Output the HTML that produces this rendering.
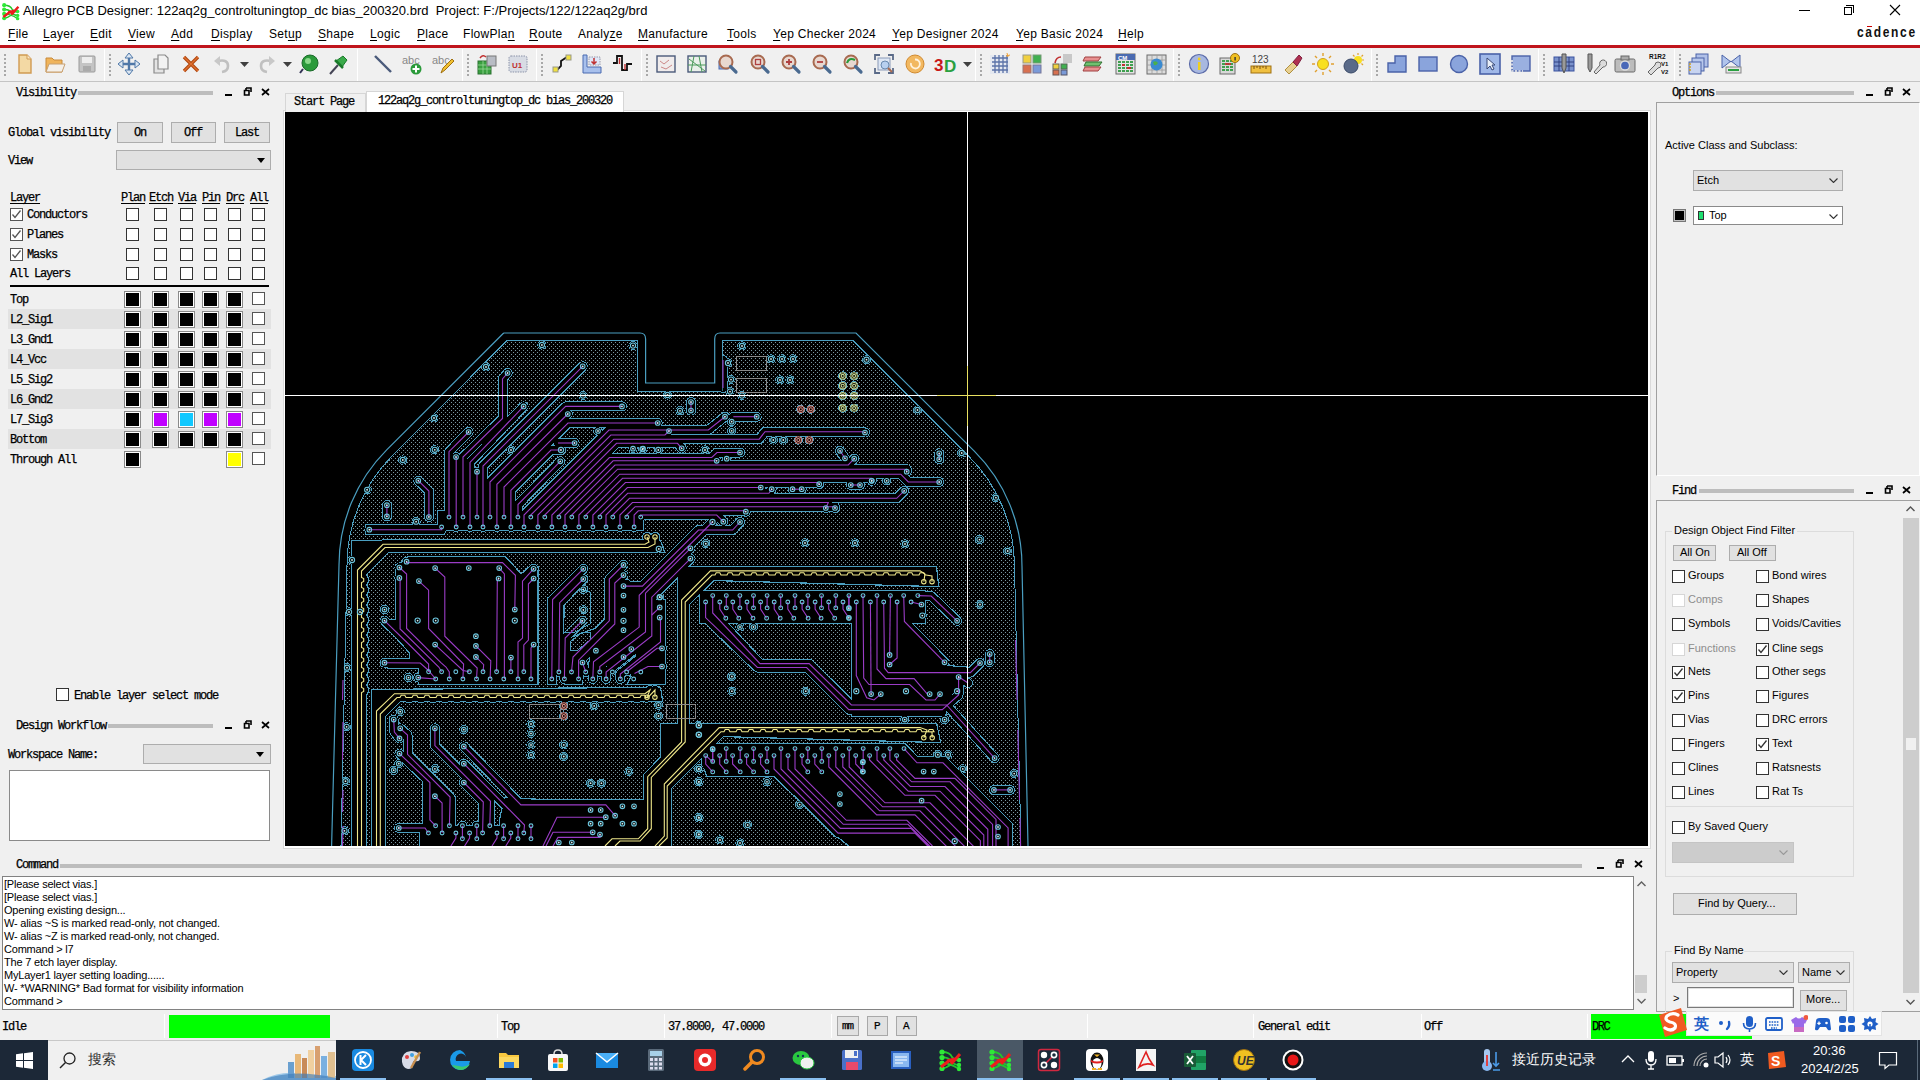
<!DOCTYPE html>
<html><head><meta charset="utf-8">
<style>
*{margin:0;padding:0;box-sizing:border-box}
html,body{width:1920px;height:1080px;overflow:hidden;background:#f0f0f0;font-family:"Liberation Sans",sans-serif;color:#000}
.a{position:absolute}
.t{position:absolute;white-space:nowrap;line-height:1}
.m{font-family:"Liberation Mono",monospace;font-weight:normal;-webkit-text-stroke:0.25px #000;font-size:12px;letter-spacing:-1.2px;padding-top:2px}
.bar{position:absolute;background:#bdbdbd;height:4px}
.cb{position:absolute;width:13px;height:13px;border:1px solid #333;background:#fff}
.sw{position:absolute;width:17px;height:17px;border:1px solid #8a8a8a;background:#000;box-shadow:inset 0 0 0 1px #fff}
.btn{position:absolute;background:#e1e1e1;border:1px solid #adadad}
.ic{position:absolute;width:24px;height:24px;top:52px}
.grip{position:absolute;top:54px;width:2px;height:24px;background-image:linear-gradient(#a8a8a8 50%,transparent 50%);background-size:2px 4px}
.tsep{position:absolute;top:49px;width:1px;height:32px;background:#c8c8c8;border-right:1px solid #fff}
u{text-decoration:underline;text-underline-offset:2px;text-decoration-thickness:1px}
</style></head><body>
<!-- title bar -->
<div class="a" style="left:0;top:0;width:1920px;height:45px;background:#fff"></div>
<svg class="a" style="left:1px;top:2px" width="19" height="19" viewBox="0 0 24 24"><path d="M4 4 Q12 4 14 9 Q16 13 21 12 M4 9.5 Q10 9 13 13 Q16 17 21 17 M4 15 Q12 15 21 21 M4 20.5 Q12 20 21 7" stroke="#22c82a" stroke-width="1.8" fill="none"/><circle cx="4" cy="4" r="2.6" fill="#2ee838"/><circle cx="4" cy="9.5" r="2.6" fill="#2ee838"/><circle cx="4" cy="15" r="2.6" fill="#2ee838"/><circle cx="4" cy="20.5" r="2.6" fill="#2ee838"/><circle cx="21" cy="12" r="2.2" fill="#2ee838"/><circle cx="21" cy="17" r="2.2" fill="#2ee838"/><circle cx="21" cy="21" r="2.2" fill="#2ee838"/><path d="M3 19 L12 12 L14 15 L22 6 M9 13 L17 11" stroke="#ee1c1c" stroke-width="3" fill="none" stroke-linejoin="round"/></svg>
<div class="t" style="left:23px;top:4px;font-size:13px;color:#000">Allegro PCB Designer: 122aq2g_controltuningtop_dc bias_200320.brd&nbsp; Project: F:/Projects/122/122aq2g/brd</div>
<div class="a" style="left:1799px;top:10px;width:11px;height:1px;background:#000"></div>
<div class="a" style="left:1844px;top:7px;width:8px;height:8px;border:1px solid #000"></div>
<div class="a" style="left:1846px;top:5px;width:8px;height:8px;border-top:1px solid #000;border-right:1px solid #000"></div>
<svg class="a" style="left:1889px;top:4px" width="12" height="12" viewBox="0 0 12 12"><path d="M1 1 L11 11 M11 1 L1 11" stroke="#000" stroke-width="1.1"/></svg>
<div class="t" style="left:1857px;top:24px;font-size:15px;font-weight:bold;letter-spacing:2.1px;color:#111;font-family:'Liberation Sans',sans-serif;transform:scaleX(0.8);transform-origin:left">cadence</div>
<div class="a" style="left:1867px;top:26px;width:5px;height:1px;background:#c00"></div>
<!-- menu -->
<div class="t" style="left:8px;top:28px;font-size:12px;letter-spacing:0.3px"><u>F</u>ile</div>
<div class="t" style="left:43px;top:28px;font-size:12px;letter-spacing:0.3px"><u>L</u>ayer</div>
<div class="t" style="left:90px;top:28px;font-size:12px;letter-spacing:0.3px"><u>E</u>dit</div>
<div class="t" style="left:128px;top:28px;font-size:12px;letter-spacing:0.3px"><u>V</u>iew</div>
<div class="t" style="left:171px;top:28px;font-size:12px;letter-spacing:0.3px"><u>A</u>dd</div>
<div class="t" style="left:211px;top:28px;font-size:12px;letter-spacing:0.3px"><u>D</u>isplay</div>
<div class="t" style="left:269px;top:28px;font-size:12px;letter-spacing:0.3px">Set<u>u</u>p</div>
<div class="t" style="left:318px;top:28px;font-size:12px;letter-spacing:0.3px"><u>S</u>hape</div>
<div class="t" style="left:370px;top:28px;font-size:12px;letter-spacing:0.3px"><u>L</u>ogic</div>
<div class="t" style="left:417px;top:28px;font-size:12px;letter-spacing:0.3px"><u>P</u>lace</div>
<div class="t" style="left:463px;top:28px;font-size:12px;letter-spacing:0.3px">FlowPla<u>n</u></div>
<div class="t" style="left:529px;top:28px;font-size:12px;letter-spacing:0.3px"><u>R</u>oute</div>
<div class="t" style="left:578px;top:28px;font-size:12px;letter-spacing:0.3px">Analy<u>z</u>e</div>
<div class="t" style="left:638px;top:28px;font-size:12px;letter-spacing:0.3px"><u>M</u>anufacture</div>
<div class="t" style="left:727px;top:28px;font-size:12px;letter-spacing:0.3px"><u>T</u>ools</div>
<div class="t" style="left:773px;top:28px;font-size:12px;letter-spacing:0.3px"><u>Y</u>ep Checker 2024</div>
<div class="t" style="left:892px;top:28px;font-size:12px;letter-spacing:0.3px"><u>Y</u>ep Designer 2024</div>
<div class="t" style="left:1016px;top:28px;font-size:12px;letter-spacing:0.3px"><u>Y</u>ep Basic 2024</div>
<div class="t" style="left:1118px;top:28px;font-size:12px;letter-spacing:0.3px"><u>H</u>elp</div>
<!-- red line -->
<div class="a" style="left:0;top:45px;width:1920px;height:3px;background:#c0141c"></div>
<!-- toolbar bg -->
<div class="a" style="left:0;top:48px;width:1920px;height:34px;background:#f0f0f0;border-bottom:1px solid #c4c4c4"></div>
<!-- toolbar -->
<div class="tsep" style="left:104px"></div>
<div class="tsep" style="left:357px"></div>
<div class="tsep" style="left:462px"></div>
<div class="tsep" style="left:536px"></div>
<div class="tsep" style="left:641px"></div>
<div class="tsep" style="left:975px"></div>
<div class="tsep" style="left:1173px"></div>
<div class="tsep" style="left:1371px"></div>
<div class="tsep" style="left:1538px"></div>
<div class="tsep" style="left:1674px"></div>
<div class="grip" style="left:4px"></div>
<div class="grip" style="left:109px"></div>
<div class="grip" style="left:467px"></div>
<div class="grip" style="left:541px"></div>
<div class="grip" style="left:646px"></div>
<div class="grip" style="left:980px"></div>
<div class="grip" style="left:1178px"></div>
<div class="grip" style="left:1376px"></div>
<div class="grip" style="left:1543px"></div>
<div class="grip" style="left:1679px"></div>
<svg class="a" style="left:12px;top:52px" width="24" height="24" viewBox="0 0 24 24"><path d="M7 3 H15 L19 7 V21 H7 Z" fill="#f3d9a4" stroke="#d09a52" stroke-width="1.4"/><path d="M15 3 V7 H19" fill="#fbe8c4" stroke="#d09a52" stroke-width="1"/></svg>
<svg class="a" style="left:43px;top:52px" width="24" height="24" viewBox="0 0 24 24"><path d="M3 6 H9 L11 8 H19 V20 H3 Z" fill="#f0b45a" stroke="#c88a3a"/><path d="M6 12 H22 L19 20 H3 Z" fill="#f4f0ea" stroke="#c8a070"/></svg>
<svg class="a" style="left:75px;top:52px" width="24" height="24" viewBox="0 0 24 24"><rect x="4" y="4" width="16" height="16" rx="1" fill="#c4c4c4" stroke="#9a9a9a"/><rect x="7" y="5" width="10" height="6" fill="#eee"/><rect x="8" y="14" width="8" height="5" fill="#aaa"/></svg>
<svg class="a" style="left:117px;top:52px" width="24" height="24" viewBox="0 0 24 24"><path d="M12 2 V22 M2 12 H22" stroke="#5078a8" stroke-width="2.4"/><path d="M12 1 L8 6 H16 Z M12 23 L8 18 H16 Z M1 12 L6 8 V16 Z M23 12 L18 8 V16 Z" fill="#dbe6f2" stroke="#5078a8"/></svg>
<svg class="a" style="left:149px;top:52px" width="24" height="24" viewBox="0 0 24 24"><path d="M5 7 H12 L15 10 V21 H5 Z" fill="#e4e4e4" stroke="#8a8a8a" stroke-width="1.2"/><path d="M9 3 H16 L19 6 V17 H9 Z" fill="#f2f2f2" stroke="#8a8a8a" stroke-width="1.2"/></svg>
<svg class="a" style="left:179px;top:52px" width="24" height="24" viewBox="0 0 24 24"><path d="M5 5 L19 19 M19 5 L5 19" stroke="#b04810" stroke-width="3.4"/><path d="M5 5 L19 19 M19 5 L5 19" stroke="#e07030" stroke-width="1.2"/></svg>
<svg class="a" style="left:211px;top:52px" width="24" height="24" viewBox="0 0 24 24"><path d="M7 9 Q17 7 17 14 Q17 19 11 20" stroke="#c0c0c0" stroke-width="2.6" fill="none"/><path d="M3 9 L9 4 V14 Z" fill="#c8c8c8"/></svg>
<svg class="a" style="left:254px;top:52px" width="24" height="24" viewBox="0 0 24 24"><path d="M17 9 Q7 7 7 14 Q7 19 13 20" stroke="#c0c0c0" stroke-width="2.6" fill="none"/><path d="M21 9 L15 4 V14 Z" fill="#c8c8c8"/></svg>
<svg class="a" style="left:297px;top:52px" width="24" height="24" viewBox="0 0 24 24"><circle cx="13" cy="11" r="8" fill="#2a9a3a" stroke="#1a6a2a"/><circle cx="11" cy="9" r="3" fill="#8ad88a"/><path d="M6 17 L3 21" stroke="#335" stroke-width="2"/></svg>
<svg class="a" style="left:327px;top:52px" width="24" height="24" viewBox="0 0 24 24"><path d="M3 22 L11 13" stroke="#445" stroke-width="2"/><path d="M9 9 L15 15 L20 8 L16 4 Z" fill="#3aaa4a" stroke="#1a7a2a"/><path d="M8 8 L16 16" stroke="#1a7a2a" stroke-width="2.5"/></svg>
<svg class="a" style="left:371px;top:52px" width="24" height="24" viewBox="0 0 24 24"><path d="M4 4 L20 20" stroke="#4a5a7a" stroke-width="2.4"/></svg>
<svg class="a" style="left:401px;top:52px" width="24" height="24" viewBox="0 0 24 24"><text x="1" y="12" font-size="11" font-family="Liberation Sans" fill="#888">abc</text><circle cx="15" cy="17" r="5.5" fill="#2a9a3a"/><path d="M15 13.5 V20.5 M11.5 17 H18.5" stroke="#fff" stroke-width="2"/></svg>
<svg class="a" style="left:432px;top:52px" width="24" height="24" viewBox="0 0 24 24"><text x="0" y="12" font-size="11" font-family="Liberation Sans" fill="#888">abc</text><path d="M9 21 L11 16 L20 7 L22 9 L13 18 Z" fill="#f0c030" stroke="#a07010"/></svg>
<svg class="a" style="left:475px;top:52px" width="24" height="24" viewBox="0 0 24 24"><rect x="3" y="9" width="13" height="13" fill="#3aa040" stroke="#2a7030"/><path d="M3 13 H16 M3 17 H16 M8 9 V22 M12 9 V22" stroke="#9ad89a" stroke-width="0.8"/><rect x="12" y="4" width="9" height="10" fill="#b8bcc4" stroke="#777"/><path d="M5 6 Q8 2 11 5" stroke="#c03030" stroke-width="1.5" fill="none"/></svg>
<svg class="a" style="left:506px;top:52px" width="24" height="24" viewBox="0 0 24 24"><rect x="3" y="4" width="18" height="16" rx="2" fill="#d8dce4" stroke="#8a92a8" stroke-dasharray="1.5 1"/><text x="6" y="16" font-size="8" font-family="Liberation Sans" font-weight="bold" fill="#c03030">U1</text></svg>
<svg class="a" style="left:550px;top:52px" width="24" height="24" viewBox="0 0 24 24"><path d="M7 18 L11 14 V9 L17 5" stroke="#111" stroke-width="1.8" fill="none"/><rect x="3" y="15" width="5" height="5" fill="#f0e040" stroke="#998"/><rect x="16" y="3" width="5" height="5" fill="#f0e040" stroke="#998"/></svg>
<svg class="a" style="left:580px;top:52px" width="24" height="24" viewBox="0 0 24 24"><path d="M3 3 H7 V15 H21 V21 H3 Z" fill="#a8c0ec" stroke="#4a6ab0"/><rect x="9" y="5" width="11" height="8" fill="#e0e8f8" stroke="#99a" stroke-dasharray="1.5 1"/><path d="M14 6 V12 M11.5 9.5 L14 12 L16.5 9.5" stroke="#c03030" stroke-width="1.5" fill="none"/></svg>
<svg class="a" style="left:611px;top:52px" width="24" height="24" viewBox="0 0 24 24"><path d="M2 11 H6 V4 H11 V18 H16 V12 H21" stroke="#111" stroke-width="1.8" fill="none"/><path d="M8.5 12 V6 M14 12 V18" stroke="#c03030" stroke-width="1.4"/></svg>
<svg class="a" style="left:654px;top:52px" width="24" height="24" viewBox="0 0 24 24"><rect x="3" y="4" width="18" height="16" fill="#f0ecec" stroke="#4a5a7a" stroke-width="1.4"/><path d="M6 9 L10 12 L15 8 M7 15 L12 17 L18 13" stroke="#c88" stroke-width="1" fill="none"/></svg>
<svg class="a" style="left:685px;top:52px" width="24" height="24" viewBox="0 0 24 24"><rect x="3" y="4" width="18" height="16" fill="#eaf0ea" stroke="#4a5a7a" stroke-width="1.4"/><path d="M4 7 L20 19 M9 4 L6 20 M14 4 L17 20 M3 13 H21" stroke="#4a9a5a" stroke-width="1" fill="none"/></svg>
<svg class="a" style="left:716px;top:52px" width="24" height="24" viewBox="0 0 24 24"><rect x="3" y="9" width="9" height="8" fill="#8aa8d8" stroke="#4a6ab0"/><circle cx="10" cy="10" r="6.5" fill="#e8d8d0" stroke="#a86a50" stroke-width="2"/><path d="M14.5 14.5 L20 20" stroke="#4a6a90" stroke-width="3.2" stroke-linecap="round"/></svg>
<svg class="a" style="left:748px;top:52px" width="24" height="24" viewBox="0 0 24 24"><circle cx="10" cy="10" r="6.5" fill="#e8d8d0" stroke="#a86a50" stroke-width="2"/><rect x="7.5" y="7.5" width="5" height="5" fill="none" stroke="#b04040" stroke-width="1.3"/><path d="M14.5 14.5 L20 20" stroke="#4a6a90" stroke-width="3.2" stroke-linecap="round"/></svg>
<svg class="a" style="left:779px;top:52px" width="24" height="24" viewBox="0 0 24 24"><circle cx="10" cy="10" r="6.5" fill="#e8d8d0" stroke="#a86a50" stroke-width="2"/><path d="M10 7 V13 M7 10 H13" stroke="#b04040" stroke-width="1.8"/><path d="M14.5 14.5 L20 20" stroke="#4a6a90" stroke-width="3.2" stroke-linecap="round"/></svg>
<svg class="a" style="left:810px;top:52px" width="24" height="24" viewBox="0 0 24 24"><circle cx="10" cy="10" r="6.5" fill="#e8d8d0" stroke="#a86a50" stroke-width="2"/><path d="M7 10 H13" stroke="#b04040" stroke-width="1.8"/><path d="M14.5 14.5 L20 20" stroke="#4a6a90" stroke-width="3.2" stroke-linecap="round"/></svg>
<svg class="a" style="left:841px;top:52px" width="24" height="24" viewBox="0 0 24 24"><circle cx="10" cy="10" r="6.5" fill="#e8d8d0" stroke="#a86a50" stroke-width="2"/><path d="M6 11 Q8 5 14 8" stroke="#2a9a3a" stroke-width="2.2" fill="none"/><path d="M14.5 14.5 L20 20" stroke="#4a6a90" stroke-width="3.2" stroke-linecap="round"/></svg>
<svg class="a" style="left:872px;top:52px" width="24" height="24" viewBox="0 0 24 24"><path d="M3 8 V3 H8 M16 3 H21 V8 M21 16 V21 H16 M8 21 H3 V16" stroke="#5a6a88" stroke-width="1.8" fill="none"/><rect x="6" y="6" width="12" height="12" fill="#dde6f4" stroke="#8a9ab8"/><circle cx="13" cy="13" r="4" fill="#b8d0f0" stroke="#6a8ab0"/><path d="M16 16 L20 20" stroke="#a86a50" stroke-width="2"/></svg>
<svg class="a" style="left:903px;top:52px" width="24" height="24" viewBox="0 0 24 24"><circle cx="12" cy="12" r="9" fill="#f2b860" stroke="#d08a30"/><path d="M8 11 A4.5 4.5 0 1 0 12 7.5" stroke="#fff2dc" stroke-width="1.8" fill="none"/></svg>
<svg class="a" style="left:934px;top:52px" width="24" height="24" viewBox="0 0 24 24"><text x="0" y="19" font-size="17" font-weight="bold" font-family="Liberation Sans" fill="#c81818">3</text><text x="10" y="20" font-size="17" font-weight="bold" font-family="Liberation Sans" fill="#2aa040">D</text></svg>
<svg class="a" style="left:988px;top:52px" width="24" height="24" viewBox="0 0 24 24"><rect x="2" y="3" width="20" height="19" fill="#e4e8f0"/><path d="M4 6 H20 M4 10 H20 M4 14 H20 M4 18 H20 M7 3 V21 M11 3 V21 M15 3 V21 M19 3 V21" stroke="#5a72a8" stroke-width="1.3"/><path d="M19 1 L20 5 M22 3 L18 4" stroke="#f0a030" stroke-width="1"/></svg>
<svg class="a" style="left:1020px;top:52px" width="24" height="24" viewBox="0 0 24 24"><rect x="3" y="3" width="8" height="8" fill="#f0d040" stroke="#998"/><rect x="13" y="3" width="8" height="8" fill="#40b050" stroke="#797"/><rect x="3" y="13" width="8" height="8" fill="#d87050" stroke="#977"/><rect x="13" y="13" width="8" height="8" fill="#7a9ad8" stroke="#779"/></svg>
<svg class="a" style="left:1050px;top:52px" width="24" height="24" viewBox="0 0 24 24"><rect x="13" y="2" width="9" height="9" fill="#c8c8c8"/><rect x="3" y="12" width="6" height="5" fill="#f0d040" stroke="#665"/><rect x="11" y="12" width="6" height="5" fill="#40b050" stroke="#565"/><rect x="3" y="18" width="6" height="5" fill="#d87050" stroke="#655"/><rect x="11" y="18" width="6" height="5" fill="#7a9ad8" stroke="#556"/><path d="M5 11 Q6 5 11 5" stroke="#c03030" stroke-width="1.6" fill="none"/></svg>
<svg class="a" style="left:1081px;top:52px" width="24" height="24" viewBox="0 0 24 24"><path d="M4 5 H20 L17 9 H2 Z" fill="#e89090" stroke="#a04040"/><path d="M5 10 H21 L18 14 H3 Z" fill="#70c070" stroke="#307030"/><path d="M4 15 H20 L17 19 H2 Z" fill="#e89090" stroke="#a04040"/></svg>
<svg class="a" style="left:1113px;top:52px" width="24" height="24" viewBox="0 0 24 24"><rect x="3" y="2" width="19" height="20" fill="#e4e4e4" stroke="#6a6a6a"/><rect x="3" y="2" width="19" height="6" fill="#4a6ab0"/><text x="5" y="7.5" font-size="6" font-weight="bold" fill="#fff" font-family="Liberation Sans">CM</text><path d="M5 10 H20 M5 13 H20 M5 16 H20 M5 19 H20" stroke="#40a050" stroke-width="1.8" stroke-dasharray="3 1"/><path d="M9 13 H12 M14 16 H18" stroke="#c03030" stroke-width="1.8"/></svg>
<svg class="a" style="left:1144px;top:52px" width="24" height="24" viewBox="0 0 24 24"><rect x="3" y="3" width="19" height="19" fill="#dcdcdc" stroke="#6a6a6a"/><path d="M3 8 H22 M3 13 H22 M3 18 H22 M8 3 V22 M13 3 V22 M18 3 V22" stroke="#999" stroke-width="0.8"/><circle cx="12.5" cy="12.5" r="6" fill="#3a8ad0"/><path d="M9 10 Q12 8 14 11 Q12 14 10 13Z" fill="#4ab04a"/></svg>
<svg class="a" style="left:1187px;top:52px" width="24" height="24" viewBox="0 0 24 24"><circle cx="12" cy="12" r="9.5" fill="#a8b8e0" stroke="#5a6aa8" stroke-width="1.2"/><rect x="11" y="10" width="2.5" height="8" fill="#f0d020"/><circle cx="12.2" cy="7" r="1.4" fill="#f0d020"/></svg>
<svg class="a" style="left:1217px;top:52px" width="24" height="24" viewBox="0 0 24 24"><rect x="3" y="6" width="15" height="16" fill="#d8d8d8" stroke="#6a6a6a"/><path d="M5 9 H16 M5 12 H16 M5 15 H16 M5 18 H16" stroke="#40a050" stroke-width="1.8" stroke-dasharray="3 1"/><path d="M8 12 H14" stroke="#c03030" stroke-width="1.8"/><circle cx="18" cy="6" r="4.5" fill="#f0c020" stroke="#a07010"/><rect x="17.4" y="5" width="1.4" height="3.5" fill="#333"/></svg>
<svg class="a" style="left:1249px;top:52px" width="24" height="24" viewBox="0 0 24 24"><text x="3" y="11" font-size="10" font-family="Liberation Sans" fill="#444">123</text><rect x="2" y="14" width="20" height="7" fill="#f0c040" stroke="#a07010"/><path d="M5 14 V17 M8 14 V16 M11 14 V17 M14 14 V16 M17 14 V17" stroke="#7a5010"/></svg>
<svg class="a" style="left:1280px;top:52px" width="24" height="24" viewBox="0 0 24 24"><path d="M5 18 L13 10 L17 14 L9 22 Z" fill="#e8d090" stroke="#b09040"/><path d="M13 10 L19 3 L22 6 L17 14 Z" fill="#b03050" stroke="#802040"/></svg>
<svg class="a" style="left:1311px;top:52px" width="24" height="24" viewBox="0 0 24 24"><circle cx="12" cy="12" r="5.5" fill="#f8e020" stroke="#d0a020"/><path d="M12 1 V4 M12 20 V23 M1 12 H4 M20 12 H23 M4 4 L6 6 M18 18 L20 20 M20 4 L18 6 M4 20 L6 18" stroke="#e0a030" stroke-width="1.4"/></svg>
<svg class="a" style="left:1342px;top:52px" width="24" height="24" viewBox="0 0 24 24"><circle cx="16" cy="8" r="4" fill="#f8e020"/><path d="M16 1 V3 M22 8 H20 M21 3 L19.5 4.5 M21 13 L19.5 11.5 M11 3 L12.5 4.5" stroke="#e0a030" stroke-width="1.2"/><circle cx="9" cy="14" r="7" fill="#5a6a88" stroke="#3a4a68"/></svg>
<svg class="a" style="left:1385px;top:52px" width="24" height="24" viewBox="0 0 24 24"><path d="M3 11 H10 V4 H21 V20 H3 Z" fill="#8aa4dc" stroke="#4a62a8" stroke-width="1.4"/></svg>
<svg class="a" style="left:1416px;top:52px" width="24" height="24" viewBox="0 0 24 24"><rect x="3" y="5" width="18" height="14" fill="#8aa4dc" stroke="#4a62a8" stroke-width="1.4"/></svg>
<svg class="a" style="left:1447px;top:52px" width="24" height="24" viewBox="0 0 24 24"><circle cx="12" cy="12" r="8.5" fill="#8aa4dc" stroke="#4a62a8" stroke-width="1.4"/></svg>
<svg class="a" style="left:1478px;top:52px" width="24" height="24" viewBox="0 0 24 24"><rect x="2" y="2" width="20" height="20" fill="#a0b8e8" stroke="#4a62a8" stroke-width="1.6"/><path d="M9 6 V17 L12 14 L14 18 L16 17 L14 13 L17 13 Z" fill="#e8eef8" stroke="#3a4a78"/></svg>
<svg class="a" style="left:1509px;top:52px" width="24" height="24" viewBox="0 0 24 24"><rect x="3" y="4" width="18" height="15" fill="#9ab0e0" stroke="#4a62a8" stroke-width="1.4"/><path d="M3 8 V19 H14" stroke="#f0f0f0" stroke-width="1.6" stroke-dasharray="2 1.5" fill="none"/></svg>
<svg class="a" style="left:1552px;top:52px" width="24" height="24" viewBox="0 0 24 24"><rect x="2" y="5" width="20" height="14" fill="#7a92cc" stroke="#3a52a0"/><path d="M2 10 H22 M2 14 H22 M7 5 V19 M17 5 V19" stroke="#2a3a78" stroke-width="0.9"/><path d="M10 2 H14 V16 L12 21 L10 16 Z" fill="#9a9a9a" stroke="#555"/></svg>
<svg class="a" style="left:1583px;top:52px" width="24" height="24" viewBox="0 0 24 24"><path d="M5 2 H9 V16 L7 20 L5 16 Z" fill="#9a9a9a" stroke="#555"/><path d="M11 20 L17 13 A3.5 3.5 0 1 1 20 15 L13 22 Z" fill="#dcdcdc" stroke="#666"/></svg>
<svg class="a" style="left:1613px;top:52px" width="24" height="24" viewBox="0 0 24 24"><rect x="2" y="7" width="20" height="13" rx="1.5" fill="#bcbcbc" stroke="#6a6a6a"/><rect x="8" y="4" width="8" height="4" fill="#aaa" stroke="#666"/><circle cx="12" cy="13.5" r="4.5" fill="#4a68b8" stroke="#ddd" stroke-width="1.3"/></svg>
<svg class="a" style="left:1645px;top:52px" width="24" height="24" viewBox="0 0 24 24"><text x="4" y="7" font-size="6.5" font-weight="bold" font-family="Liberation Sans" fill="#111">R1R2</text><text x="16" y="14" font-size="6" font-weight="bold" fill="#111" font-family="Liberation Sans">V1</text><text x="16" y="22" font-size="6" font-weight="bold" fill="#111" font-family="Liberation Sans">V2</text><path d="M3 20 L10 13 A3 3 0 1 1 13 16 L6 23 Z" fill="#dcdcdc" stroke="#666"/></svg>
<svg class="a" style="left:1687px;top:52px" width="24" height="24" viewBox="0 0 24 24"><rect x="9" y="2" width="12" height="13" fill="#b0c0e8" stroke="#4a62a8"/><rect x="5" y="6" width="12" height="13" fill="#b8c8ec" stroke="#4a62a8"/><rect x="2" y="10" width="12" height="12" fill="#c8d4f0" stroke="#4a62a8"/><path d="M2 12 L4 12 M2 15 L4 15 M2 18 L4 18" stroke="#d0a020" stroke-width="1.3"/></svg>
<svg class="a" style="left:1719px;top:52px" width="24" height="24" viewBox="0 0 24 24"><path d="M3 3 V16 L12 9 L21 16 V3 L12 10 Z" fill="#b0c4ec" stroke="#4a62a8"/><rect x="7" y="15" width="15" height="6" fill="#e4e4e4" stroke="#888"/><rect x="9" y="17" width="11" height="2" fill="#2aa040"/></svg>
<svg class="a" style="left:240px;top:62px" width="9" height="5" viewBox="0 0 9 5"><path d="M0 0 H9 L4.5 5 Z" fill="#404040"/></svg>
<svg class="a" style="left:283px;top:62px" width="9" height="5" viewBox="0 0 9 5"><path d="M0 0 H9 L4.5 5 Z" fill="#404040"/></svg>
<svg class="a" style="left:963px;top:62px" width="9" height="5" viewBox="0 0 9 5"><path d="M0 0 H9 L4.5 5 Z" fill="#404040"/></svg>
<!-- left panel -->
<div class="t m" style="left:16px;top:85px;">Visibility</div>
<div class="bar" style="left:78px;top:91px;width:135px"></div>
<div class="a" style="left:225px;top:94px;width:7px;height:2px;background:#000"></div>
<svg class="a" style="left:243px;top:87px" width="9" height="9" viewBox="0 0 9 9"><path d="M3 1 H8 V5 M3 1 V3 M1.5 3.5 H6 V8 H1.5 Z" fill="none" stroke="#000" stroke-width="1.6"/></svg>
<svg class="a" style="left:261px;top:88px" width="9" height="8" viewBox="0 0 9 8"><path d="M1 1 L8 7 M8 1 L1 7" stroke="#000" stroke-width="1.7"/></svg>
<div class="t m" style="left:8px;top:125px;">Global visibility</div>
<div class="btn" style="left:117px;top:122px;width:46px;height:21px"></div>
<div class="t m" style="left:134px;top:125px;">On</div>
<div class="btn" style="left:171px;top:122px;width:45px;height:21px"></div>
<div class="t m" style="left:184px;top:125px;">Off</div>
<div class="btn" style="left:224px;top:122px;width:46px;height:21px"></div>
<div class="t m" style="left:235px;top:125px;">Last</div>
<div class="t m" style="left:8px;top:153px;">View</div>
<div class="btn" style="left:116px;top:150px;width:155px;height:20px"></div>
<svg class="a" style="left:257px;top:158px" width="8" height="5" viewBox="0 0 8 5"><path d="M0 0 H8 L4 5Z" fill="#000"/></svg>
<div class="t m" style="left:10px;top:190px;"><u style="border-color:#000">Layer</u></div>
<div class="t m" style="left:121px;top:190px;"><u>Plan</u></div>
<div class="t m" style="left:149px;top:190px;"><u>Etch</u></div>
<div class="t m" style="left:178px;top:190px;"><u>Via</u></div>
<div class="t m" style="left:202px;top:190px;"><u>Pin</u></div>
<div class="t m" style="left:226px;top:190px;"><u>Drc</u></div>
<div class="t m" style="left:250px;top:190px;"><u>All</u></div>
<div class="cb" style="left:10px;top:208px;border-color:#555"></div>
<svg class="a" style="left:10px;top:208px" width="13" height="13" viewBox="0 0 13 13"><path d="M2.5 6.5 L5 9.5 L10.5 2.5" stroke="#555" stroke-width="1.3" fill="none"/></svg>
<div class="t m" style="left:27px;top:207px;">Conductors</div>
<div class="cb" style="left:126px;top:208px"></div>
<div class="cb" style="left:154px;top:208px"></div>
<div class="cb" style="left:180px;top:208px"></div>
<div class="cb" style="left:204px;top:208px"></div>
<div class="cb" style="left:228px;top:208px"></div>
<div class="cb" style="left:252px;top:208px"></div>
<div class="cb" style="left:10px;top:228px;border-color:#555"></div>
<svg class="a" style="left:10px;top:228px" width="13" height="13" viewBox="0 0 13 13"><path d="M2.5 6.5 L5 9.5 L10.5 2.5" stroke="#555" stroke-width="1.3" fill="none"/></svg>
<div class="t m" style="left:27px;top:227px;">Planes</div>
<div class="cb" style="left:126px;top:228px"></div>
<div class="cb" style="left:154px;top:228px"></div>
<div class="cb" style="left:180px;top:228px"></div>
<div class="cb" style="left:204px;top:228px"></div>
<div class="cb" style="left:228px;top:228px"></div>
<div class="cb" style="left:252px;top:228px"></div>
<div class="cb" style="left:10px;top:248px;border-color:#555"></div>
<svg class="a" style="left:10px;top:248px" width="13" height="13" viewBox="0 0 13 13"><path d="M2.5 6.5 L5 9.5 L10.5 2.5" stroke="#555" stroke-width="1.3" fill="none"/></svg>
<div class="t m" style="left:27px;top:247px;">Masks</div>
<div class="cb" style="left:126px;top:248px"></div>
<div class="cb" style="left:154px;top:248px"></div>
<div class="cb" style="left:180px;top:248px"></div>
<div class="cb" style="left:204px;top:248px"></div>
<div class="cb" style="left:228px;top:248px"></div>
<div class="cb" style="left:252px;top:248px"></div>
<div class="t m" style="left:10px;top:266px;">All Layers</div>
<div class="cb" style="left:126px;top:267px"></div>
<div class="cb" style="left:154px;top:267px"></div>
<div class="cb" style="left:180px;top:267px"></div>
<div class="cb" style="left:204px;top:267px"></div>
<div class="cb" style="left:228px;top:267px"></div>
<div class="cb" style="left:252px;top:267px"></div>
<div class="a" style="left:10px;top:285px;width:259px;height:2px;background:#000"></div>
<div class="t m" style="left:10px;top:292px;">Top</div>
<div class="sw" style="left:124px;top:291px;background:#000"></div>
<div class="sw" style="left:152px;top:291px;background:#000"></div>
<div class="sw" style="left:178px;top:291px;background:#000"></div>
<div class="sw" style="left:202px;top:291px;background:#000"></div>
<div class="sw" style="left:226px;top:291px;background:#000"></div>
<div class="cb" style="left:252px;top:292px;border-color:#555"></div>
<div class="a" style="left:8px;top:309px;width:263px;height:20px;background:#e2e2e2"></div>
<div class="t m" style="left:10px;top:312px;">L2_Sig1</div>
<div class="sw" style="left:124px;top:311px;background:#000"></div>
<div class="sw" style="left:152px;top:311px;background:#000"></div>
<div class="sw" style="left:178px;top:311px;background:#000"></div>
<div class="sw" style="left:202px;top:311px;background:#000"></div>
<div class="sw" style="left:226px;top:311px;background:#000"></div>
<div class="cb" style="left:252px;top:312px;border-color:#555"></div>
<div class="t m" style="left:10px;top:332px;">L3_Gnd1</div>
<div class="sw" style="left:124px;top:331px;background:#000"></div>
<div class="sw" style="left:152px;top:331px;background:#000"></div>
<div class="sw" style="left:178px;top:331px;background:#000"></div>
<div class="sw" style="left:202px;top:331px;background:#000"></div>
<div class="sw" style="left:226px;top:331px;background:#000"></div>
<div class="cb" style="left:252px;top:332px;border-color:#555"></div>
<div class="a" style="left:8px;top:349px;width:263px;height:20px;background:#e2e2e2"></div>
<div class="t m" style="left:10px;top:352px;">L4_Vcc</div>
<div class="sw" style="left:124px;top:351px;background:#000"></div>
<div class="sw" style="left:152px;top:351px;background:#000"></div>
<div class="sw" style="left:178px;top:351px;background:#000"></div>
<div class="sw" style="left:202px;top:351px;background:#000"></div>
<div class="sw" style="left:226px;top:351px;background:#000"></div>
<div class="cb" style="left:252px;top:352px;border-color:#555"></div>
<div class="t m" style="left:10px;top:372px;">L5_Sig2</div>
<div class="sw" style="left:124px;top:371px;background:#000"></div>
<div class="sw" style="left:152px;top:371px;background:#000"></div>
<div class="sw" style="left:178px;top:371px;background:#000"></div>
<div class="sw" style="left:202px;top:371px;background:#000"></div>
<div class="sw" style="left:226px;top:371px;background:#000"></div>
<div class="cb" style="left:252px;top:372px;border-color:#555"></div>
<div class="a" style="left:8px;top:389px;width:263px;height:20px;background:#e2e2e2"></div>
<div class="t m" style="left:10px;top:392px;">L6_Gnd2</div>
<div class="sw" style="left:124px;top:391px;background:#000"></div>
<div class="sw" style="left:152px;top:391px;background:#000"></div>
<div class="sw" style="left:178px;top:391px;background:#000"></div>
<div class="sw" style="left:202px;top:391px;background:#000"></div>
<div class="sw" style="left:226px;top:391px;background:#000"></div>
<div class="cb" style="left:252px;top:392px;border-color:#555"></div>
<div class="t m" style="left:10px;top:412px;">L7_Sig3</div>
<div class="sw" style="left:124px;top:411px;background:#000"></div>
<div class="sw" style="left:152px;top:411px;background:#c000ff"></div>
<div class="sw" style="left:178px;top:411px;background:#10c8ff"></div>
<div class="sw" style="left:202px;top:411px;background:#c000ff"></div>
<div class="sw" style="left:226px;top:411px;background:#c000ff"></div>
<div class="cb" style="left:252px;top:412px;border-color:#555"></div>
<div class="a" style="left:8px;top:429px;width:263px;height:20px;background:#e2e2e2"></div>
<div class="t m" style="left:10px;top:432px;">Bottom</div>
<div class="sw" style="left:124px;top:431px;background:#000"></div>
<div class="sw" style="left:152px;top:431px;background:#000"></div>
<div class="sw" style="left:178px;top:431px;background:#000"></div>
<div class="sw" style="left:202px;top:431px;background:#000"></div>
<div class="sw" style="left:226px;top:431px;background:#000"></div>
<div class="cb" style="left:252px;top:432px;border-color:#555"></div>
<div class="t m" style="left:10px;top:452px;">Through All</div>
<div class="sw" style="left:124px;top:451px;background:#000"></div>
<div class="sw" style="left:226px;top:451px;background:#ffff00"></div>
<div class="cb" style="left:252px;top:452px;border-color:#555"></div>
<div class="cb" style="left:56px;top:688px;border-color:#333"></div>
<div class="t m" style="left:74px;top:688px;">Enable layer select mode</div>
<div class="t m" style="left:16px;top:718px;">Design Workflow</div>
<div class="bar" style="left:108px;top:724px;width:105px"></div>
<div class="a" style="left:225px;top:727px;width:7px;height:2px;background:#000"></div>
<svg class="a" style="left:243px;top:720px" width="9" height="9" viewBox="0 0 9 9"><path d="M3 1 H8 V5 M3 1 V3 M1.5 3.5 H6 V8 H1.5 Z" fill="none" stroke="#000" stroke-width="1.6"/></svg>
<svg class="a" style="left:261px;top:721px" width="9" height="8" viewBox="0 0 9 8"><path d="M1 1 L8 7 M8 1 L1 7" stroke="#000" stroke-width="1.7"/></svg>
<div class="t m" style="left:8px;top:747px;">Workspace Name:</div>
<div class="btn" style="left:143px;top:744px;width:128px;height:20px"></div>
<svg class="a" style="left:256px;top:752px" width="8" height="5" viewBox="0 0 8 5"><path d="M0 0 H8 L4 5Z" fill="#000"/></svg>
<div class="a" style="left:9px;top:770px;width:261px;height:71px;background:#fff;border:1px solid #8a8a8a"></div>
<!-- right panel -->
<div class="t m" style="left:1672px;top:85px">Options</div>
<div class="bar" style="left:1716px;top:91px;width:138px"></div>
<div class="a" style="left:1866px;top:94px;width:7px;height:2px;background:#000"></div>
<svg class="a" style="left:1884px;top:87px" width="9" height="9" viewBox="0 0 9 9"><path d="M3 1 H8 V5 M3 1 V3 M1.5 3.5 H6 V8 H1.5 Z" fill="none" stroke="#000" stroke-width="1.6"/></svg>
<svg class="a" style="left:1902px;top:88px" width="9" height="8" viewBox="0 0 9 8"><path d="M1 1 L8 7 M8 1 L1 7" stroke="#000" stroke-width="1.7"/></svg>
<div class="a" style="left:1656px;top:102px;width:264px;height:374px;border:1px solid #a0a0a0;border-right-color:#fff;border-bottom-color:#fff"></div>
<div class="t" style="left:1665px;top:140px;font-size:11px;color:#000;">Active Class and Subclass:</div>
<div class="btn" style="left:1693px;top:170px;width:150px;height:21px"></div>
<div class="t" style="left:1697px;top:175px;font-size:11px;color:#000;">Etch</div>
<svg class="a" style="left:1829px;top:178px" width="9" height="5" viewBox="0 0 9 5"><path d="M0.5 0.5 L4.5 4.5 L8.5 0.5" stroke="#333" stroke-width="1.1" fill="none"/></svg>
<div class="a" style="left:1673px;top:209px;width:13px;height:13px;border:1px solid #777;background:#000;box-shadow:inset 0 0 0 1px #c0c0c0"></div>
<div class="a" style="left:1693px;top:206px;width:150px;height:19px;background:#fff;border:1px solid #8a8a8a"></div>
<div class="a" style="left:1698px;top:211px;width:6px;height:9px;background:#20e070;border:1px solid #333"></div>
<div class="t" style="left:1709px;top:210px;font-size:11px;color:#000;">Top</div>
<svg class="a" style="left:1829px;top:214px" width="9" height="5" viewBox="0 0 9 5"><path d="M0.5 0.5 L4.5 4.5 L8.5 0.5" stroke="#333" stroke-width="1.1" fill="none"/></svg>
<div class="t m" style="left:1672px;top:483px">Find</div>
<div class="bar" style="left:1699px;top:489px;width:155px"></div>
<div class="a" style="left:1866px;top:492px;width:7px;height:2px;background:#000"></div>
<svg class="a" style="left:1884px;top:485px" width="9" height="9" viewBox="0 0 9 9"><path d="M3 1 H8 V5 M3 1 V3 M1.5 3.5 H6 V8 H1.5 Z" fill="none" stroke="#000" stroke-width="1.6"/></svg>
<svg class="a" style="left:1902px;top:486px" width="9" height="8" viewBox="0 0 9 8"><path d="M1 1 L8 7 M8 1 L1 7" stroke="#000" stroke-width="1.7"/></svg>
<div class="a" style="left:1656px;top:500px;width:264px;height:512px;border:1px solid #a0a0a0;border-right:none"></div>
<div class="a" style="left:1903px;top:518px;width:16px;height:475px;background:#cdcdcd"></div>
<svg class="a" style="left:1906px;top:506px" width="9" height="6" viewBox="0 0 9 6"><path d="M0.5 5 L4.5 1 L8.5 5" stroke="#555" stroke-width="1.4" fill="none"/></svg>
<svg class="a" style="left:1906px;top:999px" width="9" height="6" viewBox="0 0 9 6"><path d="M0.5 1 L4.5 5 L8.5 1" stroke="#555" stroke-width="1.4" fill="none"/></svg>
<div class="a" style="left:1906px;top:738px;width:10px;height:12px;background:#f0f0f0"></div>
<div class="a" style="left:1665px;top:531px;width:189px;height:346px;border:1px solid #dcdcdc"></div>
<div class="a" style="left:1666px;top:806px;width:187px;height:1px;background:#dcdcdc"></div>
<div class="a" style="left:1672px;top:524px;width:125px;height:14px;background:#f0f0f0"></div>
<div class="t" style="left:1674px;top:525px;font-size:11px;color:#000;">Design Object Find Filter</div>
<div class="btn" style="left:1673px;top:545px;width:43px;height:16px"></div>
<div class="t" style="left:1680px;top:547px;font-size:11px;color:#000;">All On</div>
<div class="btn" style="left:1729px;top:545px;width:47px;height:16px"></div>
<div class="t" style="left:1737px;top:547px;font-size:11px;color:#000;">All Off</div>
<div class="cb" style="left:1672px;top:570px;border-color:#333"></div>
<div class="t" style="left:1688px;top:570px;font-size:11px;color:#000;">Groups</div>
<div class="cb" style="left:1756px;top:570px;border-color:#333"></div>
<div class="t" style="left:1772px;top:570px;font-size:11px;color:#000;">Bond wires</div>
<div class="cb" style="left:1672px;top:594px;border-color:#d6d6d6"></div>
<div class="t" style="left:1688px;top:594px;font-size:11px;color:#8d8d8d;">Comps</div>
<div class="cb" style="left:1756px;top:594px;border-color:#333"></div>
<div class="t" style="left:1772px;top:594px;font-size:11px;color:#000;">Shapes</div>
<div class="cb" style="left:1672px;top:618px;border-color:#333"></div>
<div class="t" style="left:1688px;top:618px;font-size:11px;color:#000;">Symbols</div>
<div class="cb" style="left:1756px;top:618px;border-color:#333"></div>
<div class="t" style="left:1772px;top:618px;font-size:11px;color:#000;">Voids/Cavities</div>
<div class="cb" style="left:1672px;top:643px;border-color:#d6d6d6"></div>
<div class="t" style="left:1688px;top:643px;font-size:11px;color:#8d8d8d;">Functions</div>
<div class="cb" style="left:1756px;top:643px;border-color:#333"></div>
<svg class="a" style="left:1756px;top:643px" width="13" height="13" viewBox="0 0 13 13"><path d="M2.5 6.5 L5 9.5 L10.5 2.5" stroke="#333" stroke-width="1.3" fill="none"/></svg>
<div class="t" style="left:1772px;top:643px;font-size:11px;color:#000;">Cline segs</div>
<div class="cb" style="left:1672px;top:666px;border-color:#333"></div>
<svg class="a" style="left:1672px;top:666px" width="13" height="13" viewBox="0 0 13 13"><path d="M2.5 6.5 L5 9.5 L10.5 2.5" stroke="#333" stroke-width="1.3" fill="none"/></svg>
<div class="t" style="left:1688px;top:666px;font-size:11px;color:#000;">Nets</div>
<div class="cb" style="left:1756px;top:666px;border-color:#333"></div>
<div class="t" style="left:1772px;top:666px;font-size:11px;color:#000;">Other segs</div>
<div class="cb" style="left:1672px;top:690px;border-color:#333"></div>
<svg class="a" style="left:1672px;top:690px" width="13" height="13" viewBox="0 0 13 13"><path d="M2.5 6.5 L5 9.5 L10.5 2.5" stroke="#333" stroke-width="1.3" fill="none"/></svg>
<div class="t" style="left:1688px;top:690px;font-size:11px;color:#000;">Pins</div>
<div class="cb" style="left:1756px;top:690px;border-color:#333"></div>
<div class="t" style="left:1772px;top:690px;font-size:11px;color:#000;">Figures</div>
<div class="cb" style="left:1672px;top:714px;border-color:#333"></div>
<div class="t" style="left:1688px;top:714px;font-size:11px;color:#000;">Vias</div>
<div class="cb" style="left:1756px;top:714px;border-color:#333"></div>
<div class="t" style="left:1772px;top:714px;font-size:11px;color:#000;">DRC errors</div>
<div class="cb" style="left:1672px;top:738px;border-color:#333"></div>
<div class="t" style="left:1688px;top:738px;font-size:11px;color:#000;">Fingers</div>
<div class="cb" style="left:1756px;top:738px;border-color:#333"></div>
<svg class="a" style="left:1756px;top:738px" width="13" height="13" viewBox="0 0 13 13"><path d="M2.5 6.5 L5 9.5 L10.5 2.5" stroke="#333" stroke-width="1.3" fill="none"/></svg>
<div class="t" style="left:1772px;top:738px;font-size:11px;color:#000;">Text</div>
<div class="cb" style="left:1672px;top:762px;border-color:#333"></div>
<div class="t" style="left:1688px;top:762px;font-size:11px;color:#000;">Clines</div>
<div class="cb" style="left:1756px;top:762px;border-color:#333"></div>
<div class="t" style="left:1772px;top:762px;font-size:11px;color:#000;">Ratsnests</div>
<div class="cb" style="left:1672px;top:786px;border-color:#333"></div>
<div class="t" style="left:1688px;top:786px;font-size:11px;color:#000;">Lines</div>
<div class="cb" style="left:1756px;top:786px;border-color:#333"></div>
<div class="t" style="left:1772px;top:786px;font-size:11px;color:#000;">Rat Ts</div>
<div class="cb" style="left:1672px;top:821px;border-color:#333"></div>
<div class="t" style="left:1688px;top:821px;font-size:11px;color:#000;">By Saved Query</div>
<div class="a" style="left:1672px;top:842px;width:122px;height:21px;background:#cccccc;border:1px solid #c4c4c4"></div>
<svg class="a" style="left:1779px;top:850px" width="9" height="5" viewBox="0 0 9 5"><path d="M0.5 0.5 L4.5 4.5 L8.5 0.5" stroke="#999" stroke-width="1.1" fill="none"/></svg>
<div class="btn" style="left:1673px;top:893px;width:124px;height:22px"></div>
<div class="t" style="left:1698px;top:898px;font-size:11px;color:#000;">Find by Query...</div>
<div class="a" style="left:1665px;top:951px;width:189px;height:70px;border:1px solid #dcdcdc"></div>
<div class="a" style="left:1672px;top:944px;width:72px;height:14px;background:#f0f0f0"></div>
<div class="t" style="left:1674px;top:945px;font-size:11px;color:#000;">Find By Name</div>
<div class="btn" style="left:1672px;top:962px;width:122px;height:21px"></div>
<div class="t" style="left:1676px;top:967px;font-size:11px;color:#000;">Property</div>
<svg class="a" style="left:1779px;top:970px" width="9" height="5" viewBox="0 0 9 5"><path d="M0.5 0.5 L4.5 4.5 L8.5 0.5" stroke="#333" stroke-width="1.1" fill="none"/></svg>
<div class="btn" style="left:1798px;top:962px;width:52px;height:21px"></div>
<div class="t" style="left:1802px;top:967px;font-size:11px;color:#000;">Name</div>
<svg class="a" style="left:1836px;top:970px" width="9" height="5" viewBox="0 0 9 5"><path d="M0.5 0.5 L4.5 4.5 L8.5 0.5" stroke="#333" stroke-width="1.1" fill="none"/></svg>
<div class="t" style="left:1673px;top:993px;font-size:11px;color:#000;">&gt;</div>
<div class="a" style="left:1687px;top:987px;width:107px;height:21px;background:#fff;border:1px solid #7a7a7a;box-shadow:inset 0 0 0 1px #e0e0e0"></div>
<div class="btn" style="left:1800px;top:990px;width:47px;height:21px"></div>
<div class="t" style="left:1806px;top:994px;font-size:11px;color:#000;">More...</div>
<!-- command -->
<div class="a" style="left:283px;top:110px;width:1368px;height:739px;background:#fff;border:1px solid #dadada"></div>
<div class="a" id="cv" style="left:285px;top:112px;width:1363px;height:734px;background:#000"></div>
<div class="a" style="left:285px;top:93px;width:81px;height:19px;background:#f0f0f0;border:1px solid #d6d6d6;border-bottom:none"></div>
<div class="t m" style="left:294px;top:94px;">Start Page</div>
<div class="a" style="left:366px;top:91px;width:258px;height:21px;background:#fff;border:1px solid #d6d6d6;border-bottom:none"></div>
<div class="t m" style="left:378px;top:93px;">122aq2g_controltuningtop_dc bias_200320</div>
<div class="t m" style="left:16px;top:857px;">Command</div>
<div class="bar" style="left:60px;top:864px;width:1522px"></div>
<div class="a" style="left:1597px;top:867px;width:7px;height:2px;background:#000"></div>
<svg class="a" style="left:1615px;top:859px" width="9" height="9" viewBox="0 0 9 9"><path d="M3 1 H8 V5 M3 1 V3 M1.5 3.5 H6 V8 H1.5 Z" fill="none" stroke="#000" stroke-width="1.6"/></svg>
<svg class="a" style="left:1634px;top:860px" width="9" height="8" viewBox="0 0 9 8"><path d="M1 1 L8 7 M8 1 L1 7" stroke="#000" stroke-width="1.7"/></svg>
<div class="a" style="left:2px;top:876px;width:1632px;height:134px;background:#fff;border:1px solid #828282"></div>
<div class="t" style="left:4px;top:879px;font-size:11px;color:#000;letter-spacing:-0.2px">[Please select vias.]</div>
<div class="t" style="left:4px;top:892px;font-size:11px;color:#000;letter-spacing:-0.2px">[Please select vias.]</div>
<div class="t" style="left:4px;top:905px;font-size:11px;color:#000;letter-spacing:-0.2px">Opening existing design...</div>
<div class="t" style="left:4px;top:918px;font-size:11px;color:#000;letter-spacing:-0.2px">W- alias ~S is marked read-only, not changed.</div>
<div class="t" style="left:4px;top:931px;font-size:11px;color:#000;letter-spacing:-0.2px">W- alias ~Z is marked read-only, not changed.</div>
<div class="t" style="left:4px;top:944px;font-size:11px;color:#000;letter-spacing:-0.2px">Command &gt; l7</div>
<div class="t" style="left:4px;top:957px;font-size:11px;color:#000;letter-spacing:-0.2px">The 7 etch layer display.</div>
<div class="t" style="left:4px;top:970px;font-size:11px;color:#000;letter-spacing:-0.2px">MyLayer1 layer setting loading......</div>
<div class="t" style="left:4px;top:983px;font-size:11px;color:#000;letter-spacing:-0.2px">W- *WARNING* Bad format for visibility information</div>
<div class="t" style="left:4px;top:996px;font-size:11px;color:#000;letter-spacing:-0.2px">Command &gt;</div>
<svg class="a" style="left:1637px;top:881px" width="9" height="6" viewBox="0 0 9 6"><path d="M0.5 5 L4.5 1 L8.5 5" stroke="#606060" stroke-width="1.4" fill="none"/></svg>
<div class="a" style="left:1635px;top:975px;width:12px;height:18px;background:#cdcdcd"></div>
<svg class="a" style="left:1637px;top:998px" width="9" height="6" viewBox="0 0 9 6"><path d="M0.5 1 L4.5 5 L8.5 1" stroke="#606060" stroke-width="1.4" fill="none"/></svg>
<div class="a" style="left:1656px;top:850px;width:1px;height:162px;background:#a0a0a0"></div>
<div class="a" style="left:0;top:1012px;width:1920px;height:28px;background:#f0f0f0"></div>
<div class="t m" style="left:2px;top:1019px;">Idle</div>
<div class="a" style="left:164px;top:1014px;width:1px;height:24px;background:#d8d8d8;border-right:1px solid #fff"></div>
<div class="a" style="left:497px;top:1014px;width:1px;height:24px;background:#d8d8d8;border-right:1px solid #fff"></div>
<div class="a" style="left:664px;top:1014px;width:1px;height:24px;background:#d8d8d8;border-right:1px solid #fff"></div>
<div class="a" style="left:831px;top:1014px;width:1px;height:24px;background:#d8d8d8;border-right:1px solid #fff"></div>
<div class="a" style="left:1087px;top:1014px;width:1px;height:24px;background:#d8d8d8;border-right:1px solid #fff"></div>
<div class="a" style="left:1253px;top:1014px;width:1px;height:24px;background:#d8d8d8;border-right:1px solid #fff"></div>
<div class="a" style="left:1421px;top:1014px;width:1px;height:24px;background:#d8d8d8;border-right:1px solid #fff"></div>
<div class="a" style="left:1587px;top:1014px;width:1px;height:24px;background:#d8d8d8;border-right:1px solid #fff"></div>
<div class="a" style="left:169px;top:1015px;width:161px;height:23px;background:#00ff00"></div>
<div class="t m" style="left:501px;top:1019px;">Top</div>
<div class="t m" style="left:668px;top:1019px;">37.8000, 47.0000</div>
<div class="btn" style="left:837px;top:1016px;width:22px;height:20px;background:#e1e1e1;border-color:#a8a8a8"></div>
<div class="t m" style="left:842px;top:1019px;font-size:11px;letter-spacing:-1px">mm</div>
<div class="btn" style="left:867px;top:1016px;width:21px;height:20px;background:#e1e1e1;border-color:#a8a8a8"></div>
<div class="t m" style="left:874px;top:1019px;font-size:11px;letter-spacing:-1px">P</div>
<div class="btn" style="left:896px;top:1016px;width:21px;height:20px;background:#e1e1e1;border-color:#a8a8a8"></div>
<div class="t m" style="left:903px;top:1019px;font-size:11px;letter-spacing:-1px">A</div>
<div class="t m" style="left:1258px;top:1019px;">General edit</div>
<div class="t m" style="left:1424px;top:1019px;">Off</div>
<div class="a" style="left:1591px;top:1014px;width:161px;height:25px;background:#00ff00"></div>
<div class="t m" style="left:1592px;top:1019px;font-weight:normal;letter-spacing:-1.5px">DRC</div>
<svg class="a" style="left:285px;top:112px" width="1363" height="734" viewBox="285 112 1363 734" shape-rendering="crispEdges">
<defs><pattern id="dots" x="1" y="0" width="4" height="4" patternUnits="userSpaceOnUse"><rect x="0" y="0" width="1" height="1" fill="#7a98a2"/><rect x="2" y="2" width="1" height="1" fill="#7a98a2"/></pattern><clipPath id="bd"><path d="M507,340.6 L637,340.6 L637,391 L722.7,391 L722.7,340.6 L853,340.6 L969,456.5 A155.5,155.5 0 0 1 1014.5,566.5 L1021,846 L341,846 L347,565.2 A155,155 0 0 1 392.4,455.6 Z"/></clipPath></defs>
<path d="M507,340.6 L637,340.6 L637,391 L722.7,391 L722.7,340.6 L853,340.6 L969,456.5 A155.5,155.5 0 0 1 1014.5,566.5 L1021,846 L341,846 L347,565.2 A155,155 0 0 1 392.4,455.6 Z" fill="url(#dots)" stroke="#4a9ec0" stroke-width="1"/>
<g clip-path="url(#bd)">
<g fill="none" stroke="#4a9ec0" stroke-width="10" stroke-linejoin="round" stroke-linecap="round"><polyline points="449.0,517.0 449.0,451.7 468.6,432.0"/><polyline points="456.2,527.0 456.2,457.0"/><polyline points="463.0,517.0 463.0,457.0 502.5,418.4 502.5,379.0 507.6,373.0"/><polyline points="470.0,527.0 470.0,462.4 523.6,406.4"/><polyline points="477.0,517.0 477.0,471.7"/><polyline points="483.0,527.0 483.0,466.0 582.7,366.3"/><polyline points="490.0,517.0 490.0,482.0 565.6,406.4 622.0,406.4"/><polyline points="496.9,527.0 496.9,484.3 567.8,414.0"/><polyline points="504.0,517.0 504.0,487.0 568.0,423.0 657.7,423.0"/><polyline points="510.9,527.0 510.9,490.3 551.0,450.0 561.0,450.0"/><polyline points="518.0,517.0 518.0,504.5 560.3,461.3"/><polyline points="558.0,443.0 574.6,443.0"/><polyline points="524.0,527.0 524.0,515.0 609.0,430.0 708.3,430.0 725.0,416.7"/><polyline points="530.8,517.1 530.8,515.0 610.8,435.0 665.0,435.0 669.0,431.0"/><polyline points="537.9,527.0 537.9,515.0 613.7,439.2 759.2,439.2 765.0,431.7 861.7,431.7 865.0,432.5"/><polyline points="544.8,517.1 544.8,515.0 616.5,443.3 677.5,443.3 681.7,448.3"/><polyline points="551.9,527.0 551.9,515.0 609.4,457.5 711.7,457.5 717.0,452.5 740.0,452.5"/><polyline points="558.9,517.1 558.9,515.0 613.1,460.8 716.7,460.8"/><polyline points="565.0,527.0 565.0,515.0 615.0,465.0 848.3,465.0 854.2,458.7"/><polyline points="571.8,517.1 571.8,515.0 617.6,469.2 906.7,469.2 906.7,471.7"/><polyline points="578.9,527.0 578.9,515.0 619.7,474.2 900.8,474.2 908.3,482.0 939.2,482.0"/><polyline points="585.8,517.1 585.8,515.0 622.5,478.3 871.7,478.3 871.7,480.8"/><polyline points="592.9,527.0 592.9,515.0 625.4,482.5 816.7,482.5 819.2,484.2"/><polyline points="599.9,517.1 599.9,515.0 627.4,487.5 756.7,487.5 760.8,487.5"/><polyline points="606.0,527.0 606.0,515.0 627.7,493.3 769.0,493.3 771.7,489.2"/><polyline points="612.8,517.1 612.8,515.0 629.5,498.3 896.7,498.3 904.2,490.8"/><polyline points="619.9,527.0 619.9,515.0 632.4,502.5 828.3,502.5 825.8,508.0"/><polyline points="626.8,517.1 626.8,515.0 635.1,506.7 835.0,506.7 835.0,508.0"/><polyline points="634.1,527.0 634.1,515.0 638.3,510.8 743.3,510.8 745.8,511.7"/><polyline points="640.7,517.1 640.7,515.0 640.7,515.0 716.7,515.0 723.3,521.7"/><polyline points="733.3,416.7 756.7,416.7"/><polyline points="691.0,402.0 691.0,410.6"/><polyline points="850.8,485.0 860.0,485.0"/><polyline points="792.5,489.2 801.7,489.2"/><polyline points="840.0,450.8 845.0,458.3"/><polyline points="939.2,453.3 939.2,459.2"/><polyline points="386.9,505.2 386.9,516.4"/><polyline points="418.3,480.7 428.9,491.0 428.9,517.0"/><polyline points="369.3,529.7 441.7,529.7 441.7,527.0"/><polyline points="723.0,360.0 723.0,388.0"/><polyline points="406.6,561.7 406.6,562.6 502.5,562.6 515.4,575.3 514.8,609.6"/><polyline points="399.4,567.5 406.6,574.0 406.6,628.4 440.9,662.7 446.0,667.0 449.3,672.0 449.3,679.0"/><polyline points="399.4,577.9 400.1,579.0 400.1,629.0 439.0,667.3 441.6,671.8"/><polyline points="384.5,620.6 411.1,646.5 428.6,664.0 428.6,671.8"/><polyline points="384.5,662.7 420.2,663.0 428.0,670.0 435.7,679.0"/><polyline points="418.9,581.1 428.6,590.2 428.6,628.4 463.6,664.0 462.9,679.0"/><polyline points="435.1,568.1 444.8,577.0 444.8,636.2 477.2,668.0 476.5,679.0"/><polyline points="435.1,644.6 462.9,670.5 469.4,671.8"/><polyline points="475.9,645.9 490.8,660.8 490.1,679.0"/><polyline points="475.9,656.9 483.7,664.6 483.0,671.8"/><polyline points="499.2,568.1 504.4,574.0 504.4,585.0 504.4,679.0"/><polyline points="498.6,578.5 497.3,581.0 496.6,671.8"/><polyline points="510.9,657.6 510.9,671.8"/><polyline points="533.6,568.8 522.5,581.1 522.5,638.1 518.0,642.0 518.0,679.0"/><polyline points="533.6,578.5 528.4,584.0 528.4,640.0 523.8,645.0 523.8,671.8"/><polyline points="533.6,644.6 531.0,648.0 531.0,679.0"/><polyline points="418.2,677.6 435.7,679.0"/><polyline points="583.3,568.8 552.6,599.5 551.8,679.0"/><polyline points="583.3,579.0 559.7,602.7 558.9,672.0"/><polyline points="582.5,620.8 565.2,638.1 564.4,679.0"/><polyline points="623.5,564.9 609.3,579.0 609.3,620.8 573.0,657.0 571.5,672.0"/><polyline points="623.5,575.1 614.8,583.0 614.8,624.0 578.6,660.2 578.6,679.0"/><polyline points="623.5,586.1 642.4,586.1 698.5,530.0 732.6,530.0 740.0,522.0"/><polyline points="712.5,522.0 639.2,595.3 639.2,627.1 593.5,661.7 592.8,679.0"/><polyline points="690.4,548.3 645.5,593.2 645.5,632.0 599.8,666.5 599.8,672.0"/><polyline points="690.4,558.6 651.8,597.2 651.8,636.0 606.1,672.0 606.1,679.0"/><polyline points="659.7,607.4 651.8,615.0"/><polyline points="659.7,617.6 660.5,620.0 660.5,642.0 620.3,674.0 620.3,679.0"/><polyline points="662.0,648.3 657.0,648.3 627.4,671.2"/><polyline points="662.0,666.5 648.0,666.5 634.5,673.5"/><polyline points="582.5,662.5 585.7,672.0"/><polyline points="462.4,825.8 462.4,838.8"/><polyline points="476.8,825.8 476.8,838.8"/><polyline points="503.6,825.8 503.6,838.8"/><polyline points="518.0,825.8 518.0,838.8"/><polyline points="531.0,825.8 531.0,838.8"/><polyline points="455.9,833.0 455.9,838.0 450.9,846.0"/><polyline points="469.6,833.0 469.6,838.0 464.6,846.0"/><polyline points="497.0,833.0 497.0,838.0 492.0,846.0"/><polyline points="510.8,833.0 510.8,838.0 505.8,846.0"/><polyline points="393.7,719.6 394.4,732.0 399.5,738.4"/><polyline points="400.2,728.3 407.5,735.0 407.5,754.3 450.1,797.0 449.4,825.8"/><polyline points="399.5,753.6 429.9,782.5 429.9,820.0 435.6,825.8"/><polyline points="434.9,728.3 434.9,745.6 490.5,801.3 489.8,825.8"/><polyline points="463.8,746.4 520.9,804.9 605.8,804.9 615.1,815.7"/><polyline points="463.8,763.7 524.5,825.0 523.8,833.0"/><polyline points="463.8,782.5 483.3,802.0 482.6,833.0"/><polyline points="434.9,796.2 442.1,803.0 442.1,833.0"/><polyline points="398.8,828.0 425.0,828.0 428.4,833.0"/><polyline points="543.0,846.0 557.0,817.2 605.8,817.2"/><polyline points="546.0,846.0 553.0,832.3 592.7,832.3"/><polyline points="553.0,846.0 558.0,837.4 600.0,837.4 600.0,834.5"/><polyline points="712.7,749.2 712.7,762.0 706.2,755.8"/><polyline points="726.3,595.6 726.3,607.9"/><polyline points="719.8,602.0 719.8,609.0 725.8,618.2"/><polyline points="739.9,595.6 739.9,607.9"/><polyline points="732.8,602.0 732.8,609.0 738.8,618.2"/><polyline points="753.5,595.6 753.5,607.9"/><polyline points="747.0,602.0 747.0,609.0 753.0,618.2"/><polyline points="767.1,595.6 767.1,607.9"/><polyline points="760.6,602.0 760.6,609.0 766.6,618.2"/><polyline points="780.7,595.6 780.7,607.9"/><polyline points="774.2,602.0 774.2,609.0 780.2,618.2"/><polyline points="795.0,595.6 795.0,607.9"/><polyline points="787.8,602.0 787.8,609.0 793.8,618.2"/><polyline points="807.9,595.6 807.9,607.9"/><polyline points="802.1,602.0 802.1,609.0 808.1,618.2"/><polyline points="821.5,595.6 821.5,607.9"/><polyline points="815.1,602.0 815.1,609.0 821.1,618.2"/><polyline points="835.8,595.6 835.8,607.9"/><polyline points="828.7,602.0 828.7,609.0 834.7,618.2"/><polyline points="848.9,595.6 848.9,607.9"/><polyline points="843.0,602.0 843.0,609.0 849.0,618.2"/><polyline points="705.6,602.0 705.6,617.6 757.4,667.5 806.6,667.5 848.8,709.6 942.3,709.6 958.6,695.0 958.6,677.0"/><polyline points="712.7,595.6 712.7,613.0 760.0,663.6 809.2,663.6 851.4,705.0 946.6,705.0 994.6,758.1"/><polyline points="917.8,595.6 931.2,596.0 957.1,620.8"/><polyline points="911.1,602.0 921.5,604.5"/><polyline points="903.7,595.6 904.4,621.5 944.5,662.3"/><polyline points="897.1,602.0 897.1,658.0 889.6,664.5"/><polyline points="890.4,595.6 889.6,654.9"/><polyline points="883.7,602.0 884.5,668.2 888.2,672.6 970.4,672.6 980.0,663.0"/><polyline points="877.0,595.6 877.0,669.0 886.0,678.6 914.1,678.6 927.4,694.1"/><polyline points="870.4,602.0 871.1,694.1"/><polyline points="863.0,595.6 863.7,678.0 869.0,684.5 909.7,684.5 926.0,700.0 935.0,700.0 940.0,694.1"/><polyline points="856.3,602.0 856.3,675.6 866.7,697.8 874.0,700.0 880.8,694.1"/><polyline points="848.9,595.6 848.9,608.2"/><polyline points="989.7,654.1 989.7,662.3"/><polyline points="959.0,677.0 968.0,683.0"/><polyline points="712.7,748.6 712.7,761.4"/><polyline points="726.2,748.6 726.2,761.4"/><polyline points="740.2,748.6 740.2,761.4"/><polyline points="753.6,748.6 753.6,761.4"/><polyline points="767.0,748.6 767.0,761.4"/><polyline points="807.8,748.6 807.8,761.4"/><polyline points="821.8,748.6 821.8,761.4"/><polyline points="863.2,748.6 863.2,761.4"/><polyline points="705.7,755.6 705.7,764.0 712.7,771.9"/><polyline points="719.7,755.6 719.7,764.0 726.2,771.9"/><polyline points="732.6,755.6 732.6,764.0 740.2,771.9"/><polyline points="746.6,755.6 746.6,764.0 753.6,771.9"/><polyline points="760.6,755.6 760.6,764.0 767.0,771.9"/><polyline points="802.0,755.6 802.0,764.0 807.8,771.9"/><polyline points="814.8,755.6 814.8,764.0 821.8,771.9"/><polyline points="855.7,755.6 855.7,764.0 863.2,771.9"/><polyline points="774.0,755.6 774.0,769.0 838.1,833.1 914.9,833.1 927.8,846.0"/><polyline points="781.0,748.6 781.0,769.0 840.4,828.4 911.0,828.4 928.6,846.0"/><polyline points="788.0,755.6 788.0,769.0 843.3,824.3 908.0,824.3 929.7,846.0"/><polyline points="795.0,748.6 795.0,769.0 846.3,820.3 906.8,820.3 932.5,846.0"/><polyline points="828.8,755.6 828.8,767.0 876.7,814.9 915.0,814.9 966.9,866.8 966.9,846.0"/><polyline points="835.8,748.6 835.8,767.0 879.6,810.8 920.0,810.8 970.3,861.1 970.3,846.0"/><polyline points="842.8,755.6 842.8,767.0 882.6,806.8 925.0,806.8 973.6,855.4 973.6,846.0"/><polyline points="849.2,748.6 849.2,767.0 885.0,802.8 930.0,802.8 977.0,849.8 977.0,846.0"/><polyline points="869.6,755.6 869.6,760.0 904.9,795.3 935.0,795.3 980.4,840.7 980.4,846.0"/><polyline points="877.0,748.6 877.0,760.0 908.2,791.2 940.0,791.2 983.8,835.0 983.8,846.0"/><polyline points="883.8,755.6 883.8,760.0 910.3,786.5 945.0,786.5 987.8,829.3 987.8,846.0"/><polyline points="889.9,748.6 889.9,760.0 911.7,781.8 950.0,781.8 992.6,824.4 992.6,846.0"/><polyline points="896.6,755.6 896.6,760.0 915.0,778.4 955.0,778.4 996.0,819.4 996.0,846.0"/><polyline points="904.0,748.6 917.0,762.8 943.0,762.8 1008.1,827.9 1008.1,846.0"/><polyline points="862.8,762.2 862.8,771.6"/><polyline points="993.9,789.9 1010.1,789.9"/><polyline points="647.0,537.0 649.0,542.0 645.0,544.3 383.0,544.3 357.5,570.0 357.5,846.0"/><polyline points="655.0,537.0 655.0,544.0 648.0,547.5 385.0,547.5 361.5,571.0 361.5,575.0 361.5,577.5 363.7,578.5 363.7,581.5 361.5,582.5 361.5,585.0 361.5,587.5 363.7,588.5 363.7,591.5 361.5,592.5 361.5,595.0 361.5,597.5 363.7,598.5 363.7,601.5 361.5,602.5 361.5,605.0 361.5,607.5 363.7,608.5 363.7,611.5 361.5,612.5 361.5,615.0 361.5,617.5 363.7,618.5 363.7,621.5 361.5,622.5 361.5,625.0 361.5,627.5 363.7,628.5 363.7,631.5 361.5,632.5 361.5,635.0 361.5,637.5 363.7,638.5 363.7,641.5 361.5,642.5 361.5,645.0 361.5,647.5 363.7,648.5 363.7,651.5 361.5,652.5 361.5,655.0 361.5,657.5 363.7,658.5 363.7,661.5 361.5,662.5 361.5,665.0 361.5,667.5 363.7,668.5 363.7,671.5 361.5,672.5 361.5,675.0 361.5,677.5 363.7,678.5 363.7,681.5 361.5,682.5 361.5,685.0 361.5,687.5 363.7,688.5 363.7,691.5 361.5,692.5 361.5,693.0 361.5,846.0"/><polyline points="647.0,697.2 650.0,690.0 645.0,693.7 394.5,693.7 376.5,711.0 376.5,846.0"/><polyline points="654.9,697.2 655.0,690.0 648.0,697.5 645.0,697.5 646.0,697.5 644.8,695.3 641.2,695.3 640.0,697.5 637.0,697.5 634.0,697.5 632.8,695.3 629.2,695.3 628.0,697.5 625.0,697.5 622.0,697.5 620.8,695.3 617.2,695.3 616.0,697.5 613.0,697.5 610.0,697.5 608.8,695.3 605.2,695.3 604.0,697.5 601.0,697.5 598.0,697.5 596.8,695.3 593.2,695.3 592.0,697.5 589.0,697.5 586.0,697.5 584.8,695.3 581.2,695.3 580.0,697.5 577.0,697.5 574.0,697.5 572.8,695.3 569.2,695.3 568.0,697.5 565.0,697.5 562.0,697.5 560.8,695.3 557.2,695.3 556.0,697.5 553.0,697.5 550.0,697.5 548.8,695.3 545.2,695.3 544.0,697.5 541.0,697.5 538.0,697.5 536.8,695.3 533.2,695.3 532.0,697.5 529.0,697.5 526.0,697.5 524.8,695.3 521.2,695.3 520.0,697.5 517.0,697.5 514.0,697.5 512.8,695.3 509.2,695.3 508.0,697.5 505.0,697.5 502.0,697.5 500.8,695.3 497.2,695.3 496.0,697.5 493.0,697.5 490.0,697.5 488.8,695.3 485.2,695.3 484.0,697.5 481.0,697.5 478.0,697.5 476.8,695.3 473.2,695.3 472.0,697.5 469.0,697.5 466.0,697.5 464.8,695.3 461.2,695.3 460.0,697.5 457.0,697.5 454.0,697.5 452.8,695.3 449.2,695.3 448.0,697.5 445.0,697.5 442.0,697.5 440.8,695.3 437.2,695.3 436.0,697.5 433.0,697.5 430.0,697.5 428.8,695.3 425.2,695.3 424.0,697.5 421.0,697.5 418.0,697.5 416.8,695.3 413.2,695.3 412.0,697.5 409.0,697.5 406.0,697.5 404.8,695.3 401.2,695.3 400.0,697.5 397.0,697.5 397.0,697.5 380.3,714.0 380.3,846.0"/><polyline points="923.8,581.7 925.0,574.0 920.0,570.9 710.4,570.9 681.6,600.0 681.6,742.0 647.7,776.7 647.7,828.7 638.3,838.8 612.0,838.8 605.0,846.0"/><polyline points="932.0,581.7 932.0,576.0 926.0,575.0 926.0,575.0 925.0,575.0 923.8,572.8 920.2,572.8 919.0,575.0 916.0,575.0 913.0,575.0 911.8,572.8 908.2,572.8 907.0,575.0 904.0,575.0 901.0,575.0 899.8,572.8 896.2,572.8 895.0,575.0 892.0,575.0 889.0,575.0 887.8,572.8 884.2,572.8 883.0,575.0 880.0,575.0 877.0,575.0 875.8,572.8 872.2,572.8 871.0,575.0 868.0,575.0 865.0,575.0 863.8,572.8 860.2,572.8 859.0,575.0 856.0,575.0 853.0,575.0 851.8,572.8 848.2,572.8 847.0,575.0 844.0,575.0 841.0,575.0 839.8,572.8 836.2,572.8 835.0,575.0 832.0,575.0 829.0,575.0 827.8,572.8 824.2,572.8 823.0,575.0 820.0,575.0 817.0,575.0 815.8,572.8 812.2,572.8 811.0,575.0 808.0,575.0 805.0,575.0 803.8,572.8 800.2,572.8 799.0,575.0 796.0,575.0 793.0,575.0 791.8,572.8 788.2,572.8 787.0,575.0 784.0,575.0 781.0,575.0 779.8,572.8 776.2,572.8 775.0,575.0 772.0,575.0 769.0,575.0 767.8,572.8 764.2,572.8 763.0,575.0 760.0,575.0 757.0,575.0 755.8,572.8 752.2,572.8 751.0,575.0 748.0,575.0 745.0,575.0 743.8,572.8 740.2,572.8 739.0,575.0 736.0,575.0 733.0,575.0 731.8,572.8 728.2,572.8 727.0,575.0 724.0,575.0 721.0,575.0 719.8,572.8 716.2,572.8 715.0,575.0 712.0,575.0 712.0,575.0 685.2,602.0 685.2,742.0 651.3,777.4 651.3,828.7 640.0,841.0 620.0,841.0 615.0,846.0"/><polyline points="923.8,737.8 927.0,730.0 920.0,727.6 719.2,727.6 664.3,784.0 664.3,836.0 655.0,846.0"/><polyline points="932.2,737.8 932.0,732.0 926.0,731.7 926.0,731.7 934.0,731.7 932.8,729.5 929.2,729.5 928.0,731.7 925.0,731.7 922.0,731.7 920.8,729.5 917.2,729.5 916.0,731.7 913.0,731.7 910.0,731.7 908.8,729.5 905.2,729.5 904.0,731.7 901.0,731.7 898.0,731.7 896.8,729.5 893.2,729.5 892.0,731.7 889.0,731.7 886.0,731.7 884.8,729.5 881.2,729.5 880.0,731.7 877.0,731.7 874.0,731.7 872.8,729.5 869.2,729.5 868.0,731.7 865.0,731.7 862.0,731.7 860.8,729.5 857.2,729.5 856.0,731.7 853.0,731.7 850.0,731.7 848.8,729.5 845.2,729.5 844.0,731.7 841.0,731.7 838.0,731.7 836.8,729.5 833.2,729.5 832.0,731.7 829.0,731.7 826.0,731.7 824.8,729.5 821.2,729.5 820.0,731.7 817.0,731.7 814.0,731.7 812.8,729.5 809.2,729.5 808.0,731.7 805.0,731.7 802.0,731.7 800.8,729.5 797.2,729.5 796.0,731.7 793.0,731.7 790.0,731.7 788.8,729.5 785.2,729.5 784.0,731.7 781.0,731.7 778.0,731.7 776.8,729.5 773.2,729.5 772.0,731.7 769.0,731.7 766.0,731.7 764.8,729.5 761.2,729.5 760.0,731.7 757.0,731.7 754.0,731.7 752.8,729.5 749.2,729.5 748.0,731.7 745.0,731.7 742.0,731.7 740.8,729.5 737.2,729.5 736.0,731.7 733.0,731.7 730.0,731.7 728.8,729.5 725.2,729.5 724.0,731.7 721.0,731.7 721.0,731.7 667.2,786.0 667.2,838.0 659.0,846.0"/></g>
<polygon points="438.0,511.0 643.0,511.0 643.0,529.5 438.0,529.5" fill="none" stroke="#4a9ec0" stroke-width="2.4"/><polygon points="366.0,525.0 444.0,525.0 444.0,534.0 366.0,534.0" fill="none" stroke="#4a9ec0" stroke-width="2.4"/><polygon points="408.5,557.1 505.0,557.1 521.2,574.6 531.0,566.0 537.4,566.8 537.4,683.5 418.9,683.5 418.9,668.0 388.0,668.0 385.0,662.0 389.0,658.8 409.8,658.8 409.8,652.4 387.0,627.0 385.0,620.0 396.2,620.0 396.2,566.8" fill="none" stroke="#4a9ec0" stroke-width="2.4"/><polygon points="612.0,580.0 628.0,580.0 642.0,592.0 642.0,628.0 605.0,664.0 590.0,664.0 590.0,650.0 612.0,628.0" fill="none" stroke="#4a9ec0" stroke-width="2.4"/><polygon points="565.0,640.0 609.0,624.0 616.0,630.0 582.0,664.0 582.0,684.0 565.0,684.0" fill="none" stroke="#4a9ec0" stroke-width="2.4"/><polygon points="634.0,600.0 665.0,600.0 665.0,684.0 628.0,684.0 636.0,668.0" fill="none" stroke="#4a9ec0" stroke-width="2.4"/><polygon points="548.0,598.0 556.0,598.0 556.0,684.0 548.0,684.0" fill="none" stroke="#4a9ec0" stroke-width="2.4"/><polygon points="420.0,846.0 420.0,826.0 540.0,826.0 540.0,846.0" fill="none" stroke="#4a9ec0" stroke-width="2.4"/><polygon points="505.0,798.0 540.0,800.0 665.0,800.0 665.0,846.0 500.0,846.0 500.0,820.0" fill="none" stroke="#4a9ec0" stroke-width="2.4"/><polygon points="423.0,780.0 450.0,797.0 455.0,797.0 455.0,826.0 423.0,826.0" fill="none" stroke="#4a9ec0" stroke-width="2.4"/><polygon points="700.0,591.0 925.0,591.0 925.0,622.8 700.0,622.8" fill="none" stroke="#4a9ec0" stroke-width="2.4"/><polygon points="852.0,591.0 912.0,591.0 912.0,606.0 904.0,612.0 904.0,624.0 946.0,666.0 972.0,668.0 960.0,682.0 948.0,702.0 945.0,716.0 852.0,716.0" fill="none" stroke="#4a9ec0" stroke-width="2.4"/><polygon points="705.0,744.0 870.0,744.0 870.0,846.0 850.0,846.0 838.0,836.7 774.0,776.0 707.0,776.0 702.0,760.0" fill="none" stroke="#4a9ec0" stroke-width="2.4"/><polygon points="850.0,744.0 905.0,744.0 917.0,757.0 945.0,757.0 1012.0,824.0 1012.0,846.0 850.0,846.0" fill="none" stroke="#4a9ec0" stroke-width="2.4"/><polygon points="352.0,541.0 660.0,541.0 664.0,552.0 388.0,552.0 366.0,574.0 366.0,846.0 352.0,846.0" fill="none" stroke="#4a9ec0" stroke-width="2.4"/><polygon points="372.0,690.0 660.0,688.0 662.0,701.0 400.0,701.0 385.0,716.0 385.0,846.0 372.0,846.0" fill="none" stroke="#4a9ec0" stroke-width="2.4"/><polygon points="678.0,567.0 936.0,567.0 938.0,586.0 714.0,580.0 689.0,604.0 689.0,744.0 655.0,779.0 655.0,830.0 642.0,846.0 600.0,846.0 610.0,835.0 644.0,826.0 644.0,775.0 678.0,740.0" fill="none" stroke="#4a9ec0" stroke-width="2.4"/><polygon points="661.0,724.0 936.0,724.0 940.0,742.0 723.0,736.0 671.0,788.0 671.0,846.0 661.0,846.0" fill="none" stroke="#4a9ec0" stroke-width="2.4"/><polygon points="650.0,776.0 670.0,756.0 670.0,846.0 650.0,846.0" fill="none" stroke="#4a9ec0" stroke-width="2.4"/>
<g fill="#4a9ec0"><circle cx="449" cy="517.1" r="3.6"/><circle cx="463" cy="517.1" r="3.6"/><circle cx="477" cy="517.1" r="3.6"/><circle cx="490" cy="517.1" r="3.6"/><circle cx="504" cy="517.1" r="3.6"/><circle cx="517.9" cy="517.1" r="3.6"/><circle cx="530.8" cy="517.1" r="3.6"/><circle cx="544.8" cy="517.1" r="3.6"/><circle cx="558.9" cy="517.1" r="3.6"/><circle cx="571.8" cy="517.1" r="3.6"/><circle cx="585.8" cy="517.1" r="3.6"/><circle cx="599.9" cy="517.1" r="3.6"/><circle cx="612.8" cy="517.1" r="3.6"/><circle cx="626.8" cy="517.1" r="3.6"/><circle cx="640.7" cy="517.1" r="3.6"/><circle cx="441.6" cy="527" r="3.6"/><circle cx="456.2" cy="527" r="3.6"/><circle cx="470" cy="527" r="3.6"/><circle cx="483" cy="527" r="3.6"/><circle cx="496.9" cy="527" r="3.6"/><circle cx="510.9" cy="527" r="3.6"/><circle cx="524" cy="527" r="3.6"/><circle cx="537.9" cy="527" r="3.6"/><circle cx="551.9" cy="527" r="3.6"/><circle cx="565" cy="527" r="3.6"/><circle cx="578.9" cy="527" r="3.6"/><circle cx="592.9" cy="527" r="3.6"/><circle cx="606" cy="527" r="3.6"/><circle cx="619.9" cy="527" r="3.6"/><circle cx="634.1" cy="527" r="3.6"/><circle cx="468.6" cy="432" r="4.6"/><circle cx="456" cy="457" r="4.6"/><circle cx="507.6" cy="373" r="4.6"/><circle cx="523.6" cy="406.4" r="4.6"/><circle cx="477" cy="471.7" r="4.6"/><circle cx="582.7" cy="366.3" r="4.6"/><circle cx="622" cy="406.4" r="4.6"/><circle cx="567.8" cy="414" r="4.6"/><circle cx="657.7" cy="423" r="4.6"/><circle cx="561" cy="450" r="4.6"/><circle cx="560.3" cy="461.3" r="4.6"/><circle cx="574.6" cy="443" r="4.6"/><circle cx="598" cy="431" r="4.6"/><circle cx="725" cy="416.7" r="4.6"/><circle cx="669" cy="431" r="4.6"/><circle cx="865" cy="432.5" r="4.6"/><circle cx="681.7" cy="448.3" r="4.6"/><circle cx="740" cy="452.5" r="4.6"/><circle cx="716.7" cy="460.8" r="4.6"/><circle cx="854.2" cy="458.7" r="4.6"/><circle cx="906.7" cy="471.7" r="4.6"/><circle cx="939.2" cy="482" r="4.6"/><circle cx="871.7" cy="480.8" r="4.6"/><circle cx="819.2" cy="484.2" r="4.6"/><circle cx="760.8" cy="487.5" r="4.6"/><circle cx="771.7" cy="489.2" r="4.6"/><circle cx="904.2" cy="490.8" r="4.6"/><circle cx="825.8" cy="508" r="4.6"/><circle cx="835" cy="508" r="4.6"/><circle cx="745.8" cy="511.7" r="4.6"/><circle cx="723.3" cy="521.7" r="4.6"/><circle cx="726.7" cy="458.7" r="4.6"/><circle cx="871.7" cy="480.8" r="4.6"/><circle cx="886.7" cy="480.8" r="4.6"/><circle cx="756.7" cy="416.7" r="4.6"/><circle cx="731.7" cy="421.7" r="4.6"/><circle cx="731.7" cy="430.8" r="4.6"/><circle cx="691" cy="402" r="4.6"/><circle cx="680" cy="410.8" r="4.6"/><circle cx="691" cy="410.6" r="4.6"/><circle cx="850.8" cy="485" r="4.6"/><circle cx="860" cy="485" r="4.6"/><circle cx="792.5" cy="489.2" r="4.6"/><circle cx="801.7" cy="489.2" r="4.6"/><circle cx="840" cy="450.8" r="4.6"/><circle cx="845" cy="458.3" r="4.6"/><circle cx="939.2" cy="453.3" r="4.6"/><circle cx="939.2" cy="459.2" r="4.6"/><circle cx="642.5" cy="449.2" r="4.6"/><circle cx="658.3" cy="450" r="4.6"/><circle cx="705" cy="450" r="4.6"/><circle cx="773.3" cy="440" r="4.6"/><circle cx="783.3" cy="440" r="4.6"/><circle cx="633" cy="448.7" r="4.6"/><circle cx="643" cy="448.7" r="4.6"/><circle cx="541.9" cy="345" r="4.6"/><circle cx="486" cy="367" r="4.6"/><circle cx="434.8" cy="449.8" r="4.6"/><circle cx="402.8" cy="460" r="4.6"/><circle cx="367.2" cy="489.8" r="4.6"/><circle cx="416.1" cy="521.7" r="4.6"/><circle cx="511" cy="450" r="4.6"/><circle cx="633" cy="345.6" r="4.6"/><circle cx="434" cy="418" r="4.6"/><circle cx="583" cy="395.6" r="4.6"/><circle cx="667.5" cy="395" r="4.6"/><circle cx="386.9" cy="505.2" r="4.6"/><circle cx="386.9" cy="516.4" r="4.6"/><circle cx="418.3" cy="480.7" r="4.6"/><circle cx="428.9" cy="517" r="4.6"/><circle cx="369.3" cy="529.7" r="4.6"/><circle cx="658.8" cy="548.9" r="4.6"/><circle cx="742" cy="346" r="4.6"/><circle cx="728" cy="363" r="4.6"/><circle cx="731" cy="379.6" r="4.6"/><circle cx="780" cy="380" r="4.6"/><circle cx="790" cy="380" r="4.6"/><circle cx="730" cy="391.6" r="4.6"/><circle cx="742" cy="395.6" r="4.6"/><circle cx="866.5" cy="359.7" r="4.6"/><circle cx="917.5" cy="410" r="4.6"/><circle cx="961.7" cy="453" r="4.6"/><circle cx="995.9" cy="497.7" r="4.6"/><circle cx="771" cy="359" r="4.6"/><circle cx="782" cy="359" r="4.6"/><circle cx="793" cy="359" r="4.6"/><circle cx="842.7" cy="375.9" r="4.6"/><circle cx="842.7" cy="385.7" r="4.6"/><circle cx="842.7" cy="395.8" r="4.6"/><circle cx="842.7" cy="408.1" r="4.6"/><circle cx="854.1" cy="375.9" r="4.6"/><circle cx="854.1" cy="385.7" r="4.6"/><circle cx="854.1" cy="395.8" r="4.6"/><circle cx="854.1" cy="408.1" r="4.6"/><circle cx="800.8" cy="409.2" r="4.6"/><circle cx="810.8" cy="409.2" r="4.6"/><circle cx="798.3" cy="440" r="4.6"/><circle cx="809.2" cy="440" r="4.6"/><circle cx="428.6" cy="671.8" r="3.6"/><circle cx="441.6" cy="671.8" r="3.6"/><circle cx="455.8" cy="671.8" r="3.6"/><circle cx="469.4" cy="671.8" r="3.6"/><circle cx="483" cy="671.8" r="3.6"/><circle cx="496.6" cy="671.8" r="3.6"/><circle cx="510.9" cy="671.8" r="3.6"/><circle cx="523.8" cy="671.8" r="3.6"/><circle cx="435.7" cy="679" r="3.6"/><circle cx="449.3" cy="679" r="3.6"/><circle cx="462.9" cy="679" r="3.6"/><circle cx="476.5" cy="679" r="3.6"/><circle cx="490.1" cy="679" r="3.6"/><circle cx="503.8" cy="679" r="3.6"/><circle cx="518" cy="679" r="3.6"/><circle cx="531" cy="679" r="3.6"/><circle cx="406.6" cy="561.7" r="4.6"/><circle cx="514.8" cy="609.6" r="4.6"/><circle cx="399.4" cy="567.5" r="4.6"/><circle cx="399.4" cy="577.9" r="4.6"/><circle cx="384.5" cy="620.6" r="4.6"/><circle cx="384.5" cy="662.7" r="4.6"/><circle cx="418.9" cy="581.1" r="4.6"/><circle cx="435.1" cy="568.1" r="4.6"/><circle cx="435.1" cy="644.6" r="4.6"/><circle cx="475.9" cy="645.9" r="4.6"/><circle cx="475.9" cy="656.9" r="4.6"/><circle cx="499.2" cy="568.1" r="4.6"/><circle cx="498.6" cy="578.5" r="4.6"/><circle cx="510.9" cy="657.6" r="4.6"/><circle cx="533.6" cy="568.8" r="4.6"/><circle cx="533.6" cy="578.5" r="4.6"/><circle cx="533.6" cy="644.6" r="4.6"/><circle cx="468.8" cy="568.1" r="4.6"/><circle cx="475.9" cy="636.2" r="4.6"/><circle cx="384.5" cy="609.6" r="4.6"/><circle cx="408.5" cy="677.6" r="4.6"/><circle cx="417.6" cy="620.6" r="4.6"/><circle cx="435.7" cy="620.6" r="4.6"/><circle cx="514.8" cy="620.6" r="4.6"/><circle cx="418.2" cy="677.6" r="4.6"/><circle cx="360" cy="612" r="4.6"/><circle cx="558.9" cy="672" r="3.6"/><circle cx="571.5" cy="672" r="3.6"/><circle cx="585.7" cy="672" r="3.6"/><circle cx="599.8" cy="672" r="3.6"/><circle cx="612.4" cy="672" r="3.6"/><circle cx="626.6" cy="672" r="3.6"/><circle cx="640.8" cy="672" r="3.6"/><circle cx="551.8" cy="679" r="3.6"/><circle cx="564.4" cy="679" r="3.6"/><circle cx="578.6" cy="679" r="3.6"/><circle cx="592.8" cy="679" r="3.6"/><circle cx="606.1" cy="679" r="3.6"/><circle cx="620.3" cy="679" r="3.6"/><circle cx="633.7" cy="679" r="3.6"/><circle cx="583.3" cy="568.8" r="4.6"/><circle cx="583.3" cy="579" r="4.6"/><circle cx="582.5" cy="620.8" r="4.6"/><circle cx="623.5" cy="564.9" r="4.6"/><circle cx="623.5" cy="575.1" r="4.6"/><circle cx="623.5" cy="586.1" r="4.6"/><circle cx="740" cy="522" r="4.6"/><circle cx="690.4" cy="548.3" r="4.6"/><circle cx="690.4" cy="558.6" r="4.6"/><circle cx="659.7" cy="607.4" r="4.6"/><circle cx="659.7" cy="617.6" r="4.6"/><circle cx="662" cy="648.3" r="4.6"/><circle cx="662" cy="666.5" r="4.6"/><circle cx="623.5" cy="595.6" r="4.6"/><circle cx="623.5" cy="609.8" r="4.6"/><circle cx="623.5" cy="630.2" r="4.6"/><circle cx="595.9" cy="650.7" r="4.6"/><circle cx="631.3" cy="649.1" r="4.6"/><circle cx="623.5" cy="657" r="4.6"/><circle cx="659.7" cy="597.2" r="4.6"/><circle cx="623.5" cy="620.8" r="4.6"/><circle cx="583.3" cy="609.8" r="4.6"/><circle cx="659.7" cy="597.2" r="4.6"/><circle cx="583.3" cy="589.3" r="4.6"/><circle cx="582.5" cy="662.5" r="4.6"/><circle cx="705.8" cy="543.75" r="4.6"/><circle cx="712.5" cy="522" r="4.6"/><circle cx="805" cy="543" r="4.6"/><circle cx="855" cy="543" r="4.6"/><circle cx="905" cy="544" r="4.6"/><circle cx="979.5" cy="539.6" r="4.6"/><circle cx="1007.7" cy="551" r="4.6"/><circle cx="435.6" cy="825.8" r="3.6"/><circle cx="449.4" cy="825.8" r="3.6"/><circle cx="462.4" cy="825.8" r="3.6"/><circle cx="476.8" cy="825.8" r="3.6"/><circle cx="489.8" cy="825.8" r="3.6"/><circle cx="503.6" cy="825.8" r="3.6"/><circle cx="518" cy="825.8" r="3.6"/><circle cx="531" cy="825.8" r="3.6"/><circle cx="428.4" cy="833" r="3.6"/><circle cx="442.1" cy="833" r="3.6"/><circle cx="455.9" cy="833" r="3.6"/><circle cx="469.6" cy="833" r="3.6"/><circle cx="482.6" cy="833" r="3.6"/><circle cx="497" cy="833" r="3.6"/><circle cx="510.8" cy="833" r="3.6"/><circle cx="523.8" cy="833" r="3.6"/><circle cx="462.4" cy="838.8" r="3.6"/><circle cx="476.8" cy="838.8" r="3.6"/><circle cx="503.6" cy="838.8" r="3.6"/><circle cx="518" cy="838.8" r="3.6"/><circle cx="531" cy="838.8" r="3.6"/><circle cx="393.7" cy="719.6" r="4.6"/><circle cx="399.5" cy="738.4" r="4.6"/><circle cx="400.2" cy="728.3" r="4.6"/><circle cx="399.5" cy="753.6" r="4.6"/><circle cx="434.9" cy="728.3" r="4.6"/><circle cx="463.8" cy="746.4" r="4.6"/><circle cx="615.1" cy="815.7" r="4.6"/><circle cx="463.8" cy="763.7" r="4.6"/><circle cx="463.8" cy="782.5" r="4.6"/><circle cx="434.9" cy="796.2" r="4.6"/><circle cx="398.8" cy="828" r="4.6"/><circle cx="605.8" cy="817.2" r="4.6"/><circle cx="592.7" cy="832.3" r="4.6"/><circle cx="600" cy="834.5" r="4.6"/><circle cx="400.2" cy="711.7" r="4.6"/><circle cx="398.8" cy="763.7" r="4.6"/><circle cx="393.7" cy="770.2" r="4.6"/><circle cx="463.8" cy="729.7" r="4.6"/><circle cx="531" cy="733.4" r="4.6"/><circle cx="531" cy="745" r="4.6"/><circle cx="590.6" cy="810" r="4.6"/><circle cx="600.7" cy="810" r="4.6"/><circle cx="590.6" cy="823.7" r="4.6"/><circle cx="600.7" cy="823.7" r="4.6"/><circle cx="622.4" cy="806.3" r="4.6"/><circle cx="634" cy="806.3" r="4.6"/><circle cx="622.4" cy="823.7" r="4.6"/><circle cx="634" cy="823.7" r="4.6"/><circle cx="558.8" cy="842.5" r="4.6"/><circle cx="571.8" cy="842.5" r="4.6"/><circle cx="434.9" cy="768.8" r="4.6"/><circle cx="531" cy="724" r="4.6"/><circle cx="531" cy="755" r="4.6"/><circle cx="594.2" cy="705.9" r="4.6"/><circle cx="563.8" cy="744.9" r="4.6"/><circle cx="563.8" cy="756.5" r="4.6"/><circle cx="628.9" cy="771.6" r="4.6"/><circle cx="590.6" cy="783.2" r="4.6"/><circle cx="601.4" cy="783.2" r="4.6"/><circle cx="658.5" cy="705.2" r="4.6"/><circle cx="658.5" cy="716" r="4.6"/><circle cx="699" cy="725.4" r="4.6"/><circle cx="699" cy="734.8" r="4.6"/><circle cx="699" cy="768.8" r="4.6"/><circle cx="699" cy="781.8" r="4.6"/><circle cx="699" cy="817.9" r="4.6"/><circle cx="699" cy="834.5" r="4.6"/><circle cx="563.8" cy="705.9" r="4.6"/><circle cx="563.8" cy="716" r="4.6"/><circle cx="712.7" cy="749.2" r="4.6"/><circle cx="712.7" cy="595.6" r="3.6"/><circle cx="726.3" cy="595.6" r="3.6"/><circle cx="739.9" cy="595.6" r="3.6"/><circle cx="753.5" cy="595.6" r="3.6"/><circle cx="767.1" cy="595.6" r="3.6"/><circle cx="780.7" cy="595.6" r="3.6"/><circle cx="795" cy="595.6" r="3.6"/><circle cx="807.9" cy="595.6" r="3.6"/><circle cx="821.5" cy="595.6" r="3.6"/><circle cx="835.8" cy="595.6" r="3.6"/><circle cx="848.9" cy="595.6" r="3.6"/><circle cx="863" cy="595.6" r="3.6"/><circle cx="877" cy="595.6" r="3.6"/><circle cx="890.4" cy="595.6" r="3.6"/><circle cx="903.7" cy="595.6" r="3.6"/><circle cx="917.8" cy="595.6" r="3.6"/><circle cx="705.6" cy="602" r="3.6"/><circle cx="719.8" cy="602" r="3.6"/><circle cx="732.8" cy="602" r="3.6"/><circle cx="747" cy="602" r="3.6"/><circle cx="760.6" cy="602" r="3.6"/><circle cx="774.2" cy="602" r="3.6"/><circle cx="787.8" cy="602" r="3.6"/><circle cx="802.1" cy="602" r="3.6"/><circle cx="815.1" cy="602" r="3.6"/><circle cx="828.7" cy="602" r="3.6"/><circle cx="843" cy="602" r="3.6"/><circle cx="856.3" cy="602" r="3.6"/><circle cx="870.4" cy="602" r="3.6"/><circle cx="883.7" cy="602" r="3.6"/><circle cx="897.1" cy="602" r="3.6"/><circle cx="911.1" cy="602" r="3.6"/><circle cx="726.3" cy="607.9" r="3.6"/><circle cx="725.8" cy="618.2" r="3.6"/><circle cx="739.9" cy="607.9" r="3.6"/><circle cx="738.8" cy="618.2" r="3.6"/><circle cx="753.5" cy="607.9" r="3.6"/><circle cx="753" cy="618.2" r="3.6"/><circle cx="767.1" cy="607.9" r="3.6"/><circle cx="766.6" cy="618.2" r="3.6"/><circle cx="780.7" cy="607.9" r="3.6"/><circle cx="780.2" cy="618.2" r="3.6"/><circle cx="795" cy="607.9" r="3.6"/><circle cx="793.8" cy="618.2" r="3.6"/><circle cx="807.9" cy="607.9" r="3.6"/><circle cx="808.1" cy="618.2" r="3.6"/><circle cx="821.5" cy="607.9" r="3.6"/><circle cx="821.1" cy="618.2" r="3.6"/><circle cx="835.8" cy="607.9" r="3.6"/><circle cx="834.7" cy="618.2" r="3.6"/><circle cx="848.9" cy="607.9" r="3.6"/><circle cx="849" cy="618.2" r="3.6"/><circle cx="958.6" cy="677" r="4.6"/><circle cx="994.6" cy="758.1" r="4.6"/><circle cx="957.1" cy="620.8" r="4.6"/><circle cx="921.5" cy="604.5" r="4.6"/><circle cx="944.5" cy="662.3" r="4.6"/><circle cx="889.6" cy="664.5" r="4.6"/><circle cx="889.6" cy="654.9" r="4.6"/><circle cx="980" cy="663" r="4.6"/><circle cx="929.7" cy="694.1" r="4.6"/><circle cx="871.1" cy="694.1" r="4.6"/><circle cx="940" cy="694.1" r="4.6"/><circle cx="880.8" cy="694.1" r="4.6"/><circle cx="848.9" cy="608.2" r="4.6"/><circle cx="848.9" cy="617.8" r="4.6"/><circle cx="989.7" cy="654.1" r="4.6"/><circle cx="989.7" cy="662.3" r="4.6"/><circle cx="856.3" cy="691.2" r="4.6"/><circle cx="906" cy="691.2" r="4.6"/><circle cx="957.1" cy="691.2" r="4.6"/><circle cx="980" cy="604.5" r="4.6"/><circle cx="922.3" cy="615.6" r="4.6"/><circle cx="731.9" cy="676.5" r="4.6"/><circle cx="731.9" cy="691.2" r="4.6"/><circle cx="805.8" cy="691.2" r="4.6"/><circle cx="740" cy="627" r="4.6"/><circle cx="753.5" cy="627" r="4.6"/><circle cx="712.7" cy="748.6" r="3.6"/><circle cx="726.2" cy="748.6" r="3.6"/><circle cx="740.2" cy="748.6" r="3.6"/><circle cx="753.6" cy="748.6" r="3.6"/><circle cx="767" cy="748.6" r="3.6"/><circle cx="781" cy="748.6" r="3.6"/><circle cx="795" cy="748.6" r="3.6"/><circle cx="807.8" cy="748.6" r="3.6"/><circle cx="821.8" cy="748.6" r="3.6"/><circle cx="835.8" cy="748.6" r="3.6"/><circle cx="849.2" cy="748.6" r="3.6"/><circle cx="863.2" cy="748.6" r="3.6"/><circle cx="877" cy="748.6" r="3.6"/><circle cx="889.9" cy="748.6" r="3.6"/><circle cx="904" cy="748.6" r="3.6"/><circle cx="705.7" cy="755.6" r="3.6"/><circle cx="719.7" cy="755.6" r="3.6"/><circle cx="732.6" cy="755.6" r="3.6"/><circle cx="746.6" cy="755.6" r="3.6"/><circle cx="760.6" cy="755.6" r="3.6"/><circle cx="774" cy="755.6" r="3.6"/><circle cx="788" cy="755.6" r="3.6"/><circle cx="802" cy="755.6" r="3.6"/><circle cx="814.8" cy="755.6" r="3.6"/><circle cx="828.8" cy="755.6" r="3.6"/><circle cx="842.8" cy="755.6" r="3.6"/><circle cx="855.7" cy="755.6" r="3.6"/><circle cx="869.6" cy="755.6" r="3.6"/><circle cx="883.8" cy="755.6" r="3.6"/><circle cx="896.6" cy="755.6" r="3.6"/><circle cx="712.7" cy="761.4" r="3.6"/><circle cx="712.7" cy="771.9" r="3.6"/><circle cx="726.2" cy="761.4" r="3.6"/><circle cx="726.2" cy="771.9" r="3.6"/><circle cx="740.2" cy="761.4" r="3.6"/><circle cx="740.2" cy="771.9" r="3.6"/><circle cx="753.6" cy="761.4" r="3.6"/><circle cx="753.6" cy="771.9" r="3.6"/><circle cx="767" cy="761.4" r="3.6"/><circle cx="767" cy="771.9" r="3.6"/><circle cx="807.8" cy="761.4" r="3.6"/><circle cx="807.8" cy="771.9" r="3.6"/><circle cx="821.8" cy="761.4" r="3.6"/><circle cx="821.8" cy="771.9" r="3.6"/><circle cx="863.2" cy="761.4" r="3.6"/><circle cx="863.2" cy="771.9" r="3.6"/><circle cx="862.8" cy="762.2" r="4.6"/><circle cx="862.8" cy="771.6" r="4.6"/><circle cx="993.9" cy="789.9" r="4.6"/><circle cx="1010.1" cy="789.9" r="4.6"/><circle cx="839.9" cy="794.1" r="4.6"/><circle cx="839.9" cy="804" r="4.6"/><circle cx="767" cy="781.8" r="4.6"/><circle cx="923.6" cy="771.6" r="4.6"/><circle cx="933.8" cy="771.6" r="4.6"/><circle cx="921.6" cy="800.7" r="4.6"/><circle cx="998" cy="827" r="4.6"/><circle cx="998" cy="836.5" r="4.6"/><circle cx="904.7" cy="719.6" r="4.6"/><circle cx="944.6" cy="719.6" r="4.6"/><circle cx="799.7" cy="804.6" r="4.6"/><circle cx="747.7" cy="825" r="4.6"/><circle cx="698.7" cy="769" r="4.6"/><circle cx="698.7" cy="781.8" r="4.6"/><circle cx="698.7" cy="817.4" r="4.6"/><circle cx="698.7" cy="834.3" r="4.6"/><circle cx="698.7" cy="725.2" r="4.6"/><circle cx="698.7" cy="734.6" r="4.6"/><circle cx="937.8" cy="754.7" r="4.6"/><circle cx="948" cy="754.7" r="4.6"/><circle cx="962.8" cy="768.9" r="4.6"/><circle cx="1014.2" cy="773.6" r="4.6"/><circle cx="954.7" cy="841.2" r="4.6"/><circle cx="720" cy="840" r="4.6"/><circle cx="740" cy="843" r="4.6"/><circle cx="347" cy="667.7" r="4.6"/><circle cx="346.6" cy="726.8" r="4.6"/><circle cx="345.5" cy="781.2" r="4.6"/><circle cx="344.5" cy="830.8" r="4.6"/><circle cx="349" cy="612" r="4.6"/><circle cx="352" cy="560" r="4.6"/><circle cx="647" cy="537" r="4.6"/><circle cx="655" cy="537" r="4.6"/><circle cx="647" cy="697.2" r="4.6"/><circle cx="654.9" cy="697.2" r="4.6"/><circle cx="923.8" cy="581.7" r="4.6"/><circle cx="932" cy="581.7" r="4.6"/><circle cx="923.8" cy="737.8" r="4.6"/><circle cx="932.2" cy="737.8" r="4.6"/></g>
<g fill="#000"><polygon points="438.0,511.0 643.0,511.0 643.0,529.5 438.0,529.5"/><polygon points="366.0,525.0 444.0,525.0 444.0,534.0 366.0,534.0"/><polygon points="408.5,557.1 505.0,557.1 521.2,574.6 531.0,566.0 537.4,566.8 537.4,683.5 418.9,683.5 418.9,668.0 388.0,668.0 385.0,662.0 389.0,658.8 409.8,658.8 409.8,652.4 387.0,627.0 385.0,620.0 396.2,620.0 396.2,566.8"/><polygon points="612.0,580.0 628.0,580.0 642.0,592.0 642.0,628.0 605.0,664.0 590.0,664.0 590.0,650.0 612.0,628.0"/><polygon points="565.0,640.0 609.0,624.0 616.0,630.0 582.0,664.0 582.0,684.0 565.0,684.0"/><polygon points="634.0,600.0 665.0,600.0 665.0,684.0 628.0,684.0 636.0,668.0"/><polygon points="548.0,598.0 556.0,598.0 556.0,684.0 548.0,684.0"/><polygon points="420.0,846.0 420.0,826.0 540.0,826.0 540.0,846.0"/><polygon points="505.0,798.0 540.0,800.0 665.0,800.0 665.0,846.0 500.0,846.0 500.0,820.0"/><polygon points="423.0,780.0 450.0,797.0 455.0,797.0 455.0,826.0 423.0,826.0"/><polygon points="700.0,591.0 925.0,591.0 925.0,622.8 700.0,622.8"/><polygon points="852.0,591.0 912.0,591.0 912.0,606.0 904.0,612.0 904.0,624.0 946.0,666.0 972.0,668.0 960.0,682.0 948.0,702.0 945.0,716.0 852.0,716.0"/><polygon points="705.0,744.0 870.0,744.0 870.0,846.0 850.0,846.0 838.0,836.7 774.0,776.0 707.0,776.0 702.0,760.0"/><polygon points="850.0,744.0 905.0,744.0 917.0,757.0 945.0,757.0 1012.0,824.0 1012.0,846.0 850.0,846.0"/><polygon points="352.0,541.0 660.0,541.0 664.0,552.0 388.0,552.0 366.0,574.0 366.0,846.0 352.0,846.0"/><polygon points="372.0,690.0 660.0,688.0 662.0,701.0 400.0,701.0 385.0,716.0 385.0,846.0 372.0,846.0"/><polygon points="678.0,567.0 936.0,567.0 938.0,586.0 714.0,580.0 689.0,604.0 689.0,744.0 655.0,779.0 655.0,830.0 642.0,846.0 600.0,846.0 610.0,835.0 644.0,826.0 644.0,775.0 678.0,740.0"/><polygon points="661.0,724.0 936.0,724.0 940.0,742.0 723.0,736.0 671.0,788.0 671.0,846.0 661.0,846.0"/><polygon points="650.0,776.0 670.0,756.0 670.0,846.0 650.0,846.0"/></g>
<g fill="none" stroke="#000" stroke-width="8" stroke-linejoin="round" stroke-linecap="round"><polyline points="449.0,517.0 449.0,451.7 468.6,432.0"/><polyline points="456.2,527.0 456.2,457.0"/><polyline points="463.0,517.0 463.0,457.0 502.5,418.4 502.5,379.0 507.6,373.0"/><polyline points="470.0,527.0 470.0,462.4 523.6,406.4"/><polyline points="477.0,517.0 477.0,471.7"/><polyline points="483.0,527.0 483.0,466.0 582.7,366.3"/><polyline points="490.0,517.0 490.0,482.0 565.6,406.4 622.0,406.4"/><polyline points="496.9,527.0 496.9,484.3 567.8,414.0"/><polyline points="504.0,517.0 504.0,487.0 568.0,423.0 657.7,423.0"/><polyline points="510.9,527.0 510.9,490.3 551.0,450.0 561.0,450.0"/><polyline points="518.0,517.0 518.0,504.5 560.3,461.3"/><polyline points="558.0,443.0 574.6,443.0"/><polyline points="524.0,527.0 524.0,515.0 609.0,430.0 708.3,430.0 725.0,416.7"/><polyline points="530.8,517.1 530.8,515.0 610.8,435.0 665.0,435.0 669.0,431.0"/><polyline points="537.9,527.0 537.9,515.0 613.7,439.2 759.2,439.2 765.0,431.7 861.7,431.7 865.0,432.5"/><polyline points="544.8,517.1 544.8,515.0 616.5,443.3 677.5,443.3 681.7,448.3"/><polyline points="551.9,527.0 551.9,515.0 609.4,457.5 711.7,457.5 717.0,452.5 740.0,452.5"/><polyline points="558.9,517.1 558.9,515.0 613.1,460.8 716.7,460.8"/><polyline points="565.0,527.0 565.0,515.0 615.0,465.0 848.3,465.0 854.2,458.7"/><polyline points="571.8,517.1 571.8,515.0 617.6,469.2 906.7,469.2 906.7,471.7"/><polyline points="578.9,527.0 578.9,515.0 619.7,474.2 900.8,474.2 908.3,482.0 939.2,482.0"/><polyline points="585.8,517.1 585.8,515.0 622.5,478.3 871.7,478.3 871.7,480.8"/><polyline points="592.9,527.0 592.9,515.0 625.4,482.5 816.7,482.5 819.2,484.2"/><polyline points="599.9,517.1 599.9,515.0 627.4,487.5 756.7,487.5 760.8,487.5"/><polyline points="606.0,527.0 606.0,515.0 627.7,493.3 769.0,493.3 771.7,489.2"/><polyline points="612.8,517.1 612.8,515.0 629.5,498.3 896.7,498.3 904.2,490.8"/><polyline points="619.9,527.0 619.9,515.0 632.4,502.5 828.3,502.5 825.8,508.0"/><polyline points="626.8,517.1 626.8,515.0 635.1,506.7 835.0,506.7 835.0,508.0"/><polyline points="634.1,527.0 634.1,515.0 638.3,510.8 743.3,510.8 745.8,511.7"/><polyline points="640.7,517.1 640.7,515.0 640.7,515.0 716.7,515.0 723.3,521.7"/><polyline points="733.3,416.7 756.7,416.7"/><polyline points="691.0,402.0 691.0,410.6"/><polyline points="850.8,485.0 860.0,485.0"/><polyline points="792.5,489.2 801.7,489.2"/><polyline points="840.0,450.8 845.0,458.3"/><polyline points="939.2,453.3 939.2,459.2"/><polyline points="386.9,505.2 386.9,516.4"/><polyline points="418.3,480.7 428.9,491.0 428.9,517.0"/><polyline points="369.3,529.7 441.7,529.7 441.7,527.0"/><polyline points="723.0,360.0 723.0,388.0"/><polyline points="406.6,561.7 406.6,562.6 502.5,562.6 515.4,575.3 514.8,609.6"/><polyline points="399.4,567.5 406.6,574.0 406.6,628.4 440.9,662.7 446.0,667.0 449.3,672.0 449.3,679.0"/><polyline points="399.4,577.9 400.1,579.0 400.1,629.0 439.0,667.3 441.6,671.8"/><polyline points="384.5,620.6 411.1,646.5 428.6,664.0 428.6,671.8"/><polyline points="384.5,662.7 420.2,663.0 428.0,670.0 435.7,679.0"/><polyline points="418.9,581.1 428.6,590.2 428.6,628.4 463.6,664.0 462.9,679.0"/><polyline points="435.1,568.1 444.8,577.0 444.8,636.2 477.2,668.0 476.5,679.0"/><polyline points="435.1,644.6 462.9,670.5 469.4,671.8"/><polyline points="475.9,645.9 490.8,660.8 490.1,679.0"/><polyline points="475.9,656.9 483.7,664.6 483.0,671.8"/><polyline points="499.2,568.1 504.4,574.0 504.4,585.0 504.4,679.0"/><polyline points="498.6,578.5 497.3,581.0 496.6,671.8"/><polyline points="510.9,657.6 510.9,671.8"/><polyline points="533.6,568.8 522.5,581.1 522.5,638.1 518.0,642.0 518.0,679.0"/><polyline points="533.6,578.5 528.4,584.0 528.4,640.0 523.8,645.0 523.8,671.8"/><polyline points="533.6,644.6 531.0,648.0 531.0,679.0"/><polyline points="418.2,677.6 435.7,679.0"/><polyline points="583.3,568.8 552.6,599.5 551.8,679.0"/><polyline points="583.3,579.0 559.7,602.7 558.9,672.0"/><polyline points="582.5,620.8 565.2,638.1 564.4,679.0"/><polyline points="623.5,564.9 609.3,579.0 609.3,620.8 573.0,657.0 571.5,672.0"/><polyline points="623.5,575.1 614.8,583.0 614.8,624.0 578.6,660.2 578.6,679.0"/><polyline points="623.5,586.1 642.4,586.1 698.5,530.0 732.6,530.0 740.0,522.0"/><polyline points="712.5,522.0 639.2,595.3 639.2,627.1 593.5,661.7 592.8,679.0"/><polyline points="690.4,548.3 645.5,593.2 645.5,632.0 599.8,666.5 599.8,672.0"/><polyline points="690.4,558.6 651.8,597.2 651.8,636.0 606.1,672.0 606.1,679.0"/><polyline points="659.7,607.4 651.8,615.0"/><polyline points="659.7,617.6 660.5,620.0 660.5,642.0 620.3,674.0 620.3,679.0"/><polyline points="662.0,648.3 657.0,648.3 627.4,671.2"/><polyline points="662.0,666.5 648.0,666.5 634.5,673.5"/><polyline points="582.5,662.5 585.7,672.0"/><polyline points="462.4,825.8 462.4,838.8"/><polyline points="476.8,825.8 476.8,838.8"/><polyline points="503.6,825.8 503.6,838.8"/><polyline points="518.0,825.8 518.0,838.8"/><polyline points="531.0,825.8 531.0,838.8"/><polyline points="455.9,833.0 455.9,838.0 450.9,846.0"/><polyline points="469.6,833.0 469.6,838.0 464.6,846.0"/><polyline points="497.0,833.0 497.0,838.0 492.0,846.0"/><polyline points="510.8,833.0 510.8,838.0 505.8,846.0"/><polyline points="393.7,719.6 394.4,732.0 399.5,738.4"/><polyline points="400.2,728.3 407.5,735.0 407.5,754.3 450.1,797.0 449.4,825.8"/><polyline points="399.5,753.6 429.9,782.5 429.9,820.0 435.6,825.8"/><polyline points="434.9,728.3 434.9,745.6 490.5,801.3 489.8,825.8"/><polyline points="463.8,746.4 520.9,804.9 605.8,804.9 615.1,815.7"/><polyline points="463.8,763.7 524.5,825.0 523.8,833.0"/><polyline points="463.8,782.5 483.3,802.0 482.6,833.0"/><polyline points="434.9,796.2 442.1,803.0 442.1,833.0"/><polyline points="398.8,828.0 425.0,828.0 428.4,833.0"/><polyline points="543.0,846.0 557.0,817.2 605.8,817.2"/><polyline points="546.0,846.0 553.0,832.3 592.7,832.3"/><polyline points="553.0,846.0 558.0,837.4 600.0,837.4 600.0,834.5"/><polyline points="712.7,749.2 712.7,762.0 706.2,755.8"/><polyline points="726.3,595.6 726.3,607.9"/><polyline points="719.8,602.0 719.8,609.0 725.8,618.2"/><polyline points="739.9,595.6 739.9,607.9"/><polyline points="732.8,602.0 732.8,609.0 738.8,618.2"/><polyline points="753.5,595.6 753.5,607.9"/><polyline points="747.0,602.0 747.0,609.0 753.0,618.2"/><polyline points="767.1,595.6 767.1,607.9"/><polyline points="760.6,602.0 760.6,609.0 766.6,618.2"/><polyline points="780.7,595.6 780.7,607.9"/><polyline points="774.2,602.0 774.2,609.0 780.2,618.2"/><polyline points="795.0,595.6 795.0,607.9"/><polyline points="787.8,602.0 787.8,609.0 793.8,618.2"/><polyline points="807.9,595.6 807.9,607.9"/><polyline points="802.1,602.0 802.1,609.0 808.1,618.2"/><polyline points="821.5,595.6 821.5,607.9"/><polyline points="815.1,602.0 815.1,609.0 821.1,618.2"/><polyline points="835.8,595.6 835.8,607.9"/><polyline points="828.7,602.0 828.7,609.0 834.7,618.2"/><polyline points="848.9,595.6 848.9,607.9"/><polyline points="843.0,602.0 843.0,609.0 849.0,618.2"/><polyline points="705.6,602.0 705.6,617.6 757.4,667.5 806.6,667.5 848.8,709.6 942.3,709.6 958.6,695.0 958.6,677.0"/><polyline points="712.7,595.6 712.7,613.0 760.0,663.6 809.2,663.6 851.4,705.0 946.6,705.0 994.6,758.1"/><polyline points="917.8,595.6 931.2,596.0 957.1,620.8"/><polyline points="911.1,602.0 921.5,604.5"/><polyline points="903.7,595.6 904.4,621.5 944.5,662.3"/><polyline points="897.1,602.0 897.1,658.0 889.6,664.5"/><polyline points="890.4,595.6 889.6,654.9"/><polyline points="883.7,602.0 884.5,668.2 888.2,672.6 970.4,672.6 980.0,663.0"/><polyline points="877.0,595.6 877.0,669.0 886.0,678.6 914.1,678.6 927.4,694.1"/><polyline points="870.4,602.0 871.1,694.1"/><polyline points="863.0,595.6 863.7,678.0 869.0,684.5 909.7,684.5 926.0,700.0 935.0,700.0 940.0,694.1"/><polyline points="856.3,602.0 856.3,675.6 866.7,697.8 874.0,700.0 880.8,694.1"/><polyline points="848.9,595.6 848.9,608.2"/><polyline points="989.7,654.1 989.7,662.3"/><polyline points="959.0,677.0 968.0,683.0"/><polyline points="712.7,748.6 712.7,761.4"/><polyline points="726.2,748.6 726.2,761.4"/><polyline points="740.2,748.6 740.2,761.4"/><polyline points="753.6,748.6 753.6,761.4"/><polyline points="767.0,748.6 767.0,761.4"/><polyline points="807.8,748.6 807.8,761.4"/><polyline points="821.8,748.6 821.8,761.4"/><polyline points="863.2,748.6 863.2,761.4"/><polyline points="705.7,755.6 705.7,764.0 712.7,771.9"/><polyline points="719.7,755.6 719.7,764.0 726.2,771.9"/><polyline points="732.6,755.6 732.6,764.0 740.2,771.9"/><polyline points="746.6,755.6 746.6,764.0 753.6,771.9"/><polyline points="760.6,755.6 760.6,764.0 767.0,771.9"/><polyline points="802.0,755.6 802.0,764.0 807.8,771.9"/><polyline points="814.8,755.6 814.8,764.0 821.8,771.9"/><polyline points="855.7,755.6 855.7,764.0 863.2,771.9"/><polyline points="774.0,755.6 774.0,769.0 838.1,833.1 914.9,833.1 927.8,846.0"/><polyline points="781.0,748.6 781.0,769.0 840.4,828.4 911.0,828.4 928.6,846.0"/><polyline points="788.0,755.6 788.0,769.0 843.3,824.3 908.0,824.3 929.7,846.0"/><polyline points="795.0,748.6 795.0,769.0 846.3,820.3 906.8,820.3 932.5,846.0"/><polyline points="828.8,755.6 828.8,767.0 876.7,814.9 915.0,814.9 966.9,866.8 966.9,846.0"/><polyline points="835.8,748.6 835.8,767.0 879.6,810.8 920.0,810.8 970.3,861.1 970.3,846.0"/><polyline points="842.8,755.6 842.8,767.0 882.6,806.8 925.0,806.8 973.6,855.4 973.6,846.0"/><polyline points="849.2,748.6 849.2,767.0 885.0,802.8 930.0,802.8 977.0,849.8 977.0,846.0"/><polyline points="869.6,755.6 869.6,760.0 904.9,795.3 935.0,795.3 980.4,840.7 980.4,846.0"/><polyline points="877.0,748.6 877.0,760.0 908.2,791.2 940.0,791.2 983.8,835.0 983.8,846.0"/><polyline points="883.8,755.6 883.8,760.0 910.3,786.5 945.0,786.5 987.8,829.3 987.8,846.0"/><polyline points="889.9,748.6 889.9,760.0 911.7,781.8 950.0,781.8 992.6,824.4 992.6,846.0"/><polyline points="896.6,755.6 896.6,760.0 915.0,778.4 955.0,778.4 996.0,819.4 996.0,846.0"/><polyline points="904.0,748.6 917.0,762.8 943.0,762.8 1008.1,827.9 1008.1,846.0"/><polyline points="862.8,762.2 862.8,771.6"/><polyline points="993.9,789.9 1010.1,789.9"/><polyline points="647.0,537.0 649.0,542.0 645.0,544.3 383.0,544.3 357.5,570.0 357.5,846.0"/><polyline points="655.0,537.0 655.0,544.0 648.0,547.5 385.0,547.5 361.5,571.0 361.5,575.0 361.5,577.5 363.7,578.5 363.7,581.5 361.5,582.5 361.5,585.0 361.5,587.5 363.7,588.5 363.7,591.5 361.5,592.5 361.5,595.0 361.5,597.5 363.7,598.5 363.7,601.5 361.5,602.5 361.5,605.0 361.5,607.5 363.7,608.5 363.7,611.5 361.5,612.5 361.5,615.0 361.5,617.5 363.7,618.5 363.7,621.5 361.5,622.5 361.5,625.0 361.5,627.5 363.7,628.5 363.7,631.5 361.5,632.5 361.5,635.0 361.5,637.5 363.7,638.5 363.7,641.5 361.5,642.5 361.5,645.0 361.5,647.5 363.7,648.5 363.7,651.5 361.5,652.5 361.5,655.0 361.5,657.5 363.7,658.5 363.7,661.5 361.5,662.5 361.5,665.0 361.5,667.5 363.7,668.5 363.7,671.5 361.5,672.5 361.5,675.0 361.5,677.5 363.7,678.5 363.7,681.5 361.5,682.5 361.5,685.0 361.5,687.5 363.7,688.5 363.7,691.5 361.5,692.5 361.5,693.0 361.5,846.0"/><polyline points="647.0,697.2 650.0,690.0 645.0,693.7 394.5,693.7 376.5,711.0 376.5,846.0"/><polyline points="654.9,697.2 655.0,690.0 648.0,697.5 645.0,697.5 646.0,697.5 644.8,695.3 641.2,695.3 640.0,697.5 637.0,697.5 634.0,697.5 632.8,695.3 629.2,695.3 628.0,697.5 625.0,697.5 622.0,697.5 620.8,695.3 617.2,695.3 616.0,697.5 613.0,697.5 610.0,697.5 608.8,695.3 605.2,695.3 604.0,697.5 601.0,697.5 598.0,697.5 596.8,695.3 593.2,695.3 592.0,697.5 589.0,697.5 586.0,697.5 584.8,695.3 581.2,695.3 580.0,697.5 577.0,697.5 574.0,697.5 572.8,695.3 569.2,695.3 568.0,697.5 565.0,697.5 562.0,697.5 560.8,695.3 557.2,695.3 556.0,697.5 553.0,697.5 550.0,697.5 548.8,695.3 545.2,695.3 544.0,697.5 541.0,697.5 538.0,697.5 536.8,695.3 533.2,695.3 532.0,697.5 529.0,697.5 526.0,697.5 524.8,695.3 521.2,695.3 520.0,697.5 517.0,697.5 514.0,697.5 512.8,695.3 509.2,695.3 508.0,697.5 505.0,697.5 502.0,697.5 500.8,695.3 497.2,695.3 496.0,697.5 493.0,697.5 490.0,697.5 488.8,695.3 485.2,695.3 484.0,697.5 481.0,697.5 478.0,697.5 476.8,695.3 473.2,695.3 472.0,697.5 469.0,697.5 466.0,697.5 464.8,695.3 461.2,695.3 460.0,697.5 457.0,697.5 454.0,697.5 452.8,695.3 449.2,695.3 448.0,697.5 445.0,697.5 442.0,697.5 440.8,695.3 437.2,695.3 436.0,697.5 433.0,697.5 430.0,697.5 428.8,695.3 425.2,695.3 424.0,697.5 421.0,697.5 418.0,697.5 416.8,695.3 413.2,695.3 412.0,697.5 409.0,697.5 406.0,697.5 404.8,695.3 401.2,695.3 400.0,697.5 397.0,697.5 397.0,697.5 380.3,714.0 380.3,846.0"/><polyline points="923.8,581.7 925.0,574.0 920.0,570.9 710.4,570.9 681.6,600.0 681.6,742.0 647.7,776.7 647.7,828.7 638.3,838.8 612.0,838.8 605.0,846.0"/><polyline points="932.0,581.7 932.0,576.0 926.0,575.0 926.0,575.0 925.0,575.0 923.8,572.8 920.2,572.8 919.0,575.0 916.0,575.0 913.0,575.0 911.8,572.8 908.2,572.8 907.0,575.0 904.0,575.0 901.0,575.0 899.8,572.8 896.2,572.8 895.0,575.0 892.0,575.0 889.0,575.0 887.8,572.8 884.2,572.8 883.0,575.0 880.0,575.0 877.0,575.0 875.8,572.8 872.2,572.8 871.0,575.0 868.0,575.0 865.0,575.0 863.8,572.8 860.2,572.8 859.0,575.0 856.0,575.0 853.0,575.0 851.8,572.8 848.2,572.8 847.0,575.0 844.0,575.0 841.0,575.0 839.8,572.8 836.2,572.8 835.0,575.0 832.0,575.0 829.0,575.0 827.8,572.8 824.2,572.8 823.0,575.0 820.0,575.0 817.0,575.0 815.8,572.8 812.2,572.8 811.0,575.0 808.0,575.0 805.0,575.0 803.8,572.8 800.2,572.8 799.0,575.0 796.0,575.0 793.0,575.0 791.8,572.8 788.2,572.8 787.0,575.0 784.0,575.0 781.0,575.0 779.8,572.8 776.2,572.8 775.0,575.0 772.0,575.0 769.0,575.0 767.8,572.8 764.2,572.8 763.0,575.0 760.0,575.0 757.0,575.0 755.8,572.8 752.2,572.8 751.0,575.0 748.0,575.0 745.0,575.0 743.8,572.8 740.2,572.8 739.0,575.0 736.0,575.0 733.0,575.0 731.8,572.8 728.2,572.8 727.0,575.0 724.0,575.0 721.0,575.0 719.8,572.8 716.2,572.8 715.0,575.0 712.0,575.0 712.0,575.0 685.2,602.0 685.2,742.0 651.3,777.4 651.3,828.7 640.0,841.0 620.0,841.0 615.0,846.0"/><polyline points="923.8,737.8 927.0,730.0 920.0,727.6 719.2,727.6 664.3,784.0 664.3,836.0 655.0,846.0"/><polyline points="932.2,737.8 932.0,732.0 926.0,731.7 926.0,731.7 934.0,731.7 932.8,729.5 929.2,729.5 928.0,731.7 925.0,731.7 922.0,731.7 920.8,729.5 917.2,729.5 916.0,731.7 913.0,731.7 910.0,731.7 908.8,729.5 905.2,729.5 904.0,731.7 901.0,731.7 898.0,731.7 896.8,729.5 893.2,729.5 892.0,731.7 889.0,731.7 886.0,731.7 884.8,729.5 881.2,729.5 880.0,731.7 877.0,731.7 874.0,731.7 872.8,729.5 869.2,729.5 868.0,731.7 865.0,731.7 862.0,731.7 860.8,729.5 857.2,729.5 856.0,731.7 853.0,731.7 850.0,731.7 848.8,729.5 845.2,729.5 844.0,731.7 841.0,731.7 838.0,731.7 836.8,729.5 833.2,729.5 832.0,731.7 829.0,731.7 826.0,731.7 824.8,729.5 821.2,729.5 820.0,731.7 817.0,731.7 814.0,731.7 812.8,729.5 809.2,729.5 808.0,731.7 805.0,731.7 802.0,731.7 800.8,729.5 797.2,729.5 796.0,731.7 793.0,731.7 790.0,731.7 788.8,729.5 785.2,729.5 784.0,731.7 781.0,731.7 778.0,731.7 776.8,729.5 773.2,729.5 772.0,731.7 769.0,731.7 766.0,731.7 764.8,729.5 761.2,729.5 760.0,731.7 757.0,731.7 754.0,731.7 752.8,729.5 749.2,729.5 748.0,731.7 745.0,731.7 742.0,731.7 740.8,729.5 737.2,729.5 736.0,731.7 733.0,731.7 730.0,731.7 728.8,729.5 725.2,729.5 724.0,731.7 721.0,731.7 721.0,731.7 667.2,786.0 667.2,838.0 659.0,846.0"/></g>
<g fill="#000"><circle cx="449" cy="517.1" r="2.8"/><circle cx="463" cy="517.1" r="2.8"/><circle cx="477" cy="517.1" r="2.8"/><circle cx="490" cy="517.1" r="2.8"/><circle cx="504" cy="517.1" r="2.8"/><circle cx="517.9" cy="517.1" r="2.8"/><circle cx="530.8" cy="517.1" r="2.8"/><circle cx="544.8" cy="517.1" r="2.8"/><circle cx="558.9" cy="517.1" r="2.8"/><circle cx="571.8" cy="517.1" r="2.8"/><circle cx="585.8" cy="517.1" r="2.8"/><circle cx="599.9" cy="517.1" r="2.8"/><circle cx="612.8" cy="517.1" r="2.8"/><circle cx="626.8" cy="517.1" r="2.8"/><circle cx="640.7" cy="517.1" r="2.8"/><circle cx="441.6" cy="527" r="2.8"/><circle cx="456.2" cy="527" r="2.8"/><circle cx="470" cy="527" r="2.8"/><circle cx="483" cy="527" r="2.8"/><circle cx="496.9" cy="527" r="2.8"/><circle cx="510.9" cy="527" r="2.8"/><circle cx="524" cy="527" r="2.8"/><circle cx="537.9" cy="527" r="2.8"/><circle cx="551.9" cy="527" r="2.8"/><circle cx="565" cy="527" r="2.8"/><circle cx="578.9" cy="527" r="2.8"/><circle cx="592.9" cy="527" r="2.8"/><circle cx="606" cy="527" r="2.8"/><circle cx="619.9" cy="527" r="2.8"/><circle cx="634.1" cy="527" r="2.8"/><circle cx="468.6" cy="432" r="3.7"/><circle cx="456" cy="457" r="3.7"/><circle cx="507.6" cy="373" r="3.7"/><circle cx="523.6" cy="406.4" r="3.7"/><circle cx="477" cy="471.7" r="3.7"/><circle cx="582.7" cy="366.3" r="3.7"/><circle cx="622" cy="406.4" r="3.7"/><circle cx="567.8" cy="414" r="3.7"/><circle cx="657.7" cy="423" r="3.7"/><circle cx="561" cy="450" r="3.7"/><circle cx="560.3" cy="461.3" r="3.7"/><circle cx="574.6" cy="443" r="3.7"/><circle cx="598" cy="431" r="3.7"/><circle cx="725" cy="416.7" r="3.7"/><circle cx="669" cy="431" r="3.7"/><circle cx="865" cy="432.5" r="3.7"/><circle cx="681.7" cy="448.3" r="3.7"/><circle cx="740" cy="452.5" r="3.7"/><circle cx="716.7" cy="460.8" r="3.7"/><circle cx="854.2" cy="458.7" r="3.7"/><circle cx="906.7" cy="471.7" r="3.7"/><circle cx="939.2" cy="482" r="3.7"/><circle cx="871.7" cy="480.8" r="3.7"/><circle cx="819.2" cy="484.2" r="3.7"/><circle cx="760.8" cy="487.5" r="3.7"/><circle cx="771.7" cy="489.2" r="3.7"/><circle cx="904.2" cy="490.8" r="3.7"/><circle cx="825.8" cy="508" r="3.7"/><circle cx="835" cy="508" r="3.7"/><circle cx="745.8" cy="511.7" r="3.7"/><circle cx="723.3" cy="521.7" r="3.7"/><circle cx="726.7" cy="458.7" r="3.7"/><circle cx="871.7" cy="480.8" r="3.7"/><circle cx="886.7" cy="480.8" r="3.7"/><circle cx="756.7" cy="416.7" r="3.7"/><circle cx="731.7" cy="421.7" r="3.7"/><circle cx="731.7" cy="430.8" r="3.7"/><circle cx="691" cy="402" r="3.7"/><circle cx="680" cy="410.8" r="3.7"/><circle cx="691" cy="410.6" r="3.7"/><circle cx="850.8" cy="485" r="3.7"/><circle cx="860" cy="485" r="3.7"/><circle cx="792.5" cy="489.2" r="3.7"/><circle cx="801.7" cy="489.2" r="3.7"/><circle cx="840" cy="450.8" r="3.7"/><circle cx="845" cy="458.3" r="3.7"/><circle cx="939.2" cy="453.3" r="3.7"/><circle cx="939.2" cy="459.2" r="3.7"/><circle cx="642.5" cy="449.2" r="3.7"/><circle cx="658.3" cy="450" r="3.7"/><circle cx="705" cy="450" r="3.7"/><circle cx="773.3" cy="440" r="3.7"/><circle cx="783.3" cy="440" r="3.7"/><circle cx="633" cy="448.7" r="3.7"/><circle cx="643" cy="448.7" r="3.7"/><circle cx="541.9" cy="345" r="3.7"/><circle cx="486" cy="367" r="3.7"/><circle cx="434.8" cy="449.8" r="3.7"/><circle cx="402.8" cy="460" r="3.7"/><circle cx="367.2" cy="489.8" r="3.7"/><circle cx="416.1" cy="521.7" r="3.7"/><circle cx="511" cy="450" r="3.7"/><circle cx="633" cy="345.6" r="3.7"/><circle cx="434" cy="418" r="3.7"/><circle cx="583" cy="395.6" r="3.7"/><circle cx="667.5" cy="395" r="3.7"/><circle cx="386.9" cy="505.2" r="3.7"/><circle cx="386.9" cy="516.4" r="3.7"/><circle cx="418.3" cy="480.7" r="3.7"/><circle cx="428.9" cy="517" r="3.7"/><circle cx="369.3" cy="529.7" r="3.7"/><circle cx="658.8" cy="548.9" r="3.7"/><circle cx="742" cy="346" r="3.7"/><circle cx="728" cy="363" r="3.7"/><circle cx="731" cy="379.6" r="3.7"/><circle cx="780" cy="380" r="3.7"/><circle cx="790" cy="380" r="3.7"/><circle cx="730" cy="391.6" r="3.7"/><circle cx="742" cy="395.6" r="3.7"/><circle cx="866.5" cy="359.7" r="3.7"/><circle cx="917.5" cy="410" r="3.7"/><circle cx="961.7" cy="453" r="3.7"/><circle cx="995.9" cy="497.7" r="3.7"/><circle cx="771" cy="359" r="3.7"/><circle cx="782" cy="359" r="3.7"/><circle cx="793" cy="359" r="3.7"/><circle cx="842.7" cy="375.9" r="3.7"/><circle cx="842.7" cy="385.7" r="3.7"/><circle cx="842.7" cy="395.8" r="3.7"/><circle cx="842.7" cy="408.1" r="3.7"/><circle cx="854.1" cy="375.9" r="3.7"/><circle cx="854.1" cy="385.7" r="3.7"/><circle cx="854.1" cy="395.8" r="3.7"/><circle cx="854.1" cy="408.1" r="3.7"/><circle cx="800.8" cy="409.2" r="3.7"/><circle cx="810.8" cy="409.2" r="3.7"/><circle cx="798.3" cy="440" r="3.7"/><circle cx="809.2" cy="440" r="3.7"/><circle cx="428.6" cy="671.8" r="2.8"/><circle cx="441.6" cy="671.8" r="2.8"/><circle cx="455.8" cy="671.8" r="2.8"/><circle cx="469.4" cy="671.8" r="2.8"/><circle cx="483" cy="671.8" r="2.8"/><circle cx="496.6" cy="671.8" r="2.8"/><circle cx="510.9" cy="671.8" r="2.8"/><circle cx="523.8" cy="671.8" r="2.8"/><circle cx="435.7" cy="679" r="2.8"/><circle cx="449.3" cy="679" r="2.8"/><circle cx="462.9" cy="679" r="2.8"/><circle cx="476.5" cy="679" r="2.8"/><circle cx="490.1" cy="679" r="2.8"/><circle cx="503.8" cy="679" r="2.8"/><circle cx="518" cy="679" r="2.8"/><circle cx="531" cy="679" r="2.8"/><circle cx="406.6" cy="561.7" r="3.7"/><circle cx="514.8" cy="609.6" r="3.7"/><circle cx="399.4" cy="567.5" r="3.7"/><circle cx="399.4" cy="577.9" r="3.7"/><circle cx="384.5" cy="620.6" r="3.7"/><circle cx="384.5" cy="662.7" r="3.7"/><circle cx="418.9" cy="581.1" r="3.7"/><circle cx="435.1" cy="568.1" r="3.7"/><circle cx="435.1" cy="644.6" r="3.7"/><circle cx="475.9" cy="645.9" r="3.7"/><circle cx="475.9" cy="656.9" r="3.7"/><circle cx="499.2" cy="568.1" r="3.7"/><circle cx="498.6" cy="578.5" r="3.7"/><circle cx="510.9" cy="657.6" r="3.7"/><circle cx="533.6" cy="568.8" r="3.7"/><circle cx="533.6" cy="578.5" r="3.7"/><circle cx="533.6" cy="644.6" r="3.7"/><circle cx="468.8" cy="568.1" r="3.7"/><circle cx="475.9" cy="636.2" r="3.7"/><circle cx="384.5" cy="609.6" r="3.7"/><circle cx="408.5" cy="677.6" r="3.7"/><circle cx="417.6" cy="620.6" r="3.7"/><circle cx="435.7" cy="620.6" r="3.7"/><circle cx="514.8" cy="620.6" r="3.7"/><circle cx="418.2" cy="677.6" r="3.7"/><circle cx="360" cy="612" r="3.7"/><circle cx="558.9" cy="672" r="2.8"/><circle cx="571.5" cy="672" r="2.8"/><circle cx="585.7" cy="672" r="2.8"/><circle cx="599.8" cy="672" r="2.8"/><circle cx="612.4" cy="672" r="2.8"/><circle cx="626.6" cy="672" r="2.8"/><circle cx="640.8" cy="672" r="2.8"/><circle cx="551.8" cy="679" r="2.8"/><circle cx="564.4" cy="679" r="2.8"/><circle cx="578.6" cy="679" r="2.8"/><circle cx="592.8" cy="679" r="2.8"/><circle cx="606.1" cy="679" r="2.8"/><circle cx="620.3" cy="679" r="2.8"/><circle cx="633.7" cy="679" r="2.8"/><circle cx="583.3" cy="568.8" r="3.7"/><circle cx="583.3" cy="579" r="3.7"/><circle cx="582.5" cy="620.8" r="3.7"/><circle cx="623.5" cy="564.9" r="3.7"/><circle cx="623.5" cy="575.1" r="3.7"/><circle cx="623.5" cy="586.1" r="3.7"/><circle cx="740" cy="522" r="3.7"/><circle cx="690.4" cy="548.3" r="3.7"/><circle cx="690.4" cy="558.6" r="3.7"/><circle cx="659.7" cy="607.4" r="3.7"/><circle cx="659.7" cy="617.6" r="3.7"/><circle cx="662" cy="648.3" r="3.7"/><circle cx="662" cy="666.5" r="3.7"/><circle cx="623.5" cy="595.6" r="3.7"/><circle cx="623.5" cy="609.8" r="3.7"/><circle cx="623.5" cy="630.2" r="3.7"/><circle cx="595.9" cy="650.7" r="3.7"/><circle cx="631.3" cy="649.1" r="3.7"/><circle cx="623.5" cy="657" r="3.7"/><circle cx="659.7" cy="597.2" r="3.7"/><circle cx="623.5" cy="620.8" r="3.7"/><circle cx="583.3" cy="609.8" r="3.7"/><circle cx="659.7" cy="597.2" r="3.7"/><circle cx="583.3" cy="589.3" r="3.7"/><circle cx="582.5" cy="662.5" r="3.7"/><circle cx="705.8" cy="543.75" r="3.7"/><circle cx="712.5" cy="522" r="3.7"/><circle cx="805" cy="543" r="3.7"/><circle cx="855" cy="543" r="3.7"/><circle cx="905" cy="544" r="3.7"/><circle cx="979.5" cy="539.6" r="3.7"/><circle cx="1007.7" cy="551" r="3.7"/><circle cx="435.6" cy="825.8" r="2.8"/><circle cx="449.4" cy="825.8" r="2.8"/><circle cx="462.4" cy="825.8" r="2.8"/><circle cx="476.8" cy="825.8" r="2.8"/><circle cx="489.8" cy="825.8" r="2.8"/><circle cx="503.6" cy="825.8" r="2.8"/><circle cx="518" cy="825.8" r="2.8"/><circle cx="531" cy="825.8" r="2.8"/><circle cx="428.4" cy="833" r="2.8"/><circle cx="442.1" cy="833" r="2.8"/><circle cx="455.9" cy="833" r="2.8"/><circle cx="469.6" cy="833" r="2.8"/><circle cx="482.6" cy="833" r="2.8"/><circle cx="497" cy="833" r="2.8"/><circle cx="510.8" cy="833" r="2.8"/><circle cx="523.8" cy="833" r="2.8"/><circle cx="462.4" cy="838.8" r="2.8"/><circle cx="476.8" cy="838.8" r="2.8"/><circle cx="503.6" cy="838.8" r="2.8"/><circle cx="518" cy="838.8" r="2.8"/><circle cx="531" cy="838.8" r="2.8"/><circle cx="393.7" cy="719.6" r="3.7"/><circle cx="399.5" cy="738.4" r="3.7"/><circle cx="400.2" cy="728.3" r="3.7"/><circle cx="399.5" cy="753.6" r="3.7"/><circle cx="434.9" cy="728.3" r="3.7"/><circle cx="463.8" cy="746.4" r="3.7"/><circle cx="615.1" cy="815.7" r="3.7"/><circle cx="463.8" cy="763.7" r="3.7"/><circle cx="463.8" cy="782.5" r="3.7"/><circle cx="434.9" cy="796.2" r="3.7"/><circle cx="398.8" cy="828" r="3.7"/><circle cx="605.8" cy="817.2" r="3.7"/><circle cx="592.7" cy="832.3" r="3.7"/><circle cx="600" cy="834.5" r="3.7"/><circle cx="400.2" cy="711.7" r="3.7"/><circle cx="398.8" cy="763.7" r="3.7"/><circle cx="393.7" cy="770.2" r="3.7"/><circle cx="463.8" cy="729.7" r="3.7"/><circle cx="531" cy="733.4" r="3.7"/><circle cx="531" cy="745" r="3.7"/><circle cx="590.6" cy="810" r="3.7"/><circle cx="600.7" cy="810" r="3.7"/><circle cx="590.6" cy="823.7" r="3.7"/><circle cx="600.7" cy="823.7" r="3.7"/><circle cx="622.4" cy="806.3" r="3.7"/><circle cx="634" cy="806.3" r="3.7"/><circle cx="622.4" cy="823.7" r="3.7"/><circle cx="634" cy="823.7" r="3.7"/><circle cx="558.8" cy="842.5" r="3.7"/><circle cx="571.8" cy="842.5" r="3.7"/><circle cx="434.9" cy="768.8" r="3.7"/><circle cx="531" cy="724" r="3.7"/><circle cx="531" cy="755" r="3.7"/><circle cx="594.2" cy="705.9" r="3.7"/><circle cx="563.8" cy="744.9" r="3.7"/><circle cx="563.8" cy="756.5" r="3.7"/><circle cx="628.9" cy="771.6" r="3.7"/><circle cx="590.6" cy="783.2" r="3.7"/><circle cx="601.4" cy="783.2" r="3.7"/><circle cx="658.5" cy="705.2" r="3.7"/><circle cx="658.5" cy="716" r="3.7"/><circle cx="699" cy="725.4" r="3.7"/><circle cx="699" cy="734.8" r="3.7"/><circle cx="699" cy="768.8" r="3.7"/><circle cx="699" cy="781.8" r="3.7"/><circle cx="699" cy="817.9" r="3.7"/><circle cx="699" cy="834.5" r="3.7"/><circle cx="563.8" cy="705.9" r="3.7"/><circle cx="563.8" cy="716" r="3.7"/><circle cx="712.7" cy="749.2" r="3.7"/><circle cx="712.7" cy="595.6" r="2.8"/><circle cx="726.3" cy="595.6" r="2.8"/><circle cx="739.9" cy="595.6" r="2.8"/><circle cx="753.5" cy="595.6" r="2.8"/><circle cx="767.1" cy="595.6" r="2.8"/><circle cx="780.7" cy="595.6" r="2.8"/><circle cx="795" cy="595.6" r="2.8"/><circle cx="807.9" cy="595.6" r="2.8"/><circle cx="821.5" cy="595.6" r="2.8"/><circle cx="835.8" cy="595.6" r="2.8"/><circle cx="848.9" cy="595.6" r="2.8"/><circle cx="863" cy="595.6" r="2.8"/><circle cx="877" cy="595.6" r="2.8"/><circle cx="890.4" cy="595.6" r="2.8"/><circle cx="903.7" cy="595.6" r="2.8"/><circle cx="917.8" cy="595.6" r="2.8"/><circle cx="705.6" cy="602" r="2.8"/><circle cx="719.8" cy="602" r="2.8"/><circle cx="732.8" cy="602" r="2.8"/><circle cx="747" cy="602" r="2.8"/><circle cx="760.6" cy="602" r="2.8"/><circle cx="774.2" cy="602" r="2.8"/><circle cx="787.8" cy="602" r="2.8"/><circle cx="802.1" cy="602" r="2.8"/><circle cx="815.1" cy="602" r="2.8"/><circle cx="828.7" cy="602" r="2.8"/><circle cx="843" cy="602" r="2.8"/><circle cx="856.3" cy="602" r="2.8"/><circle cx="870.4" cy="602" r="2.8"/><circle cx="883.7" cy="602" r="2.8"/><circle cx="897.1" cy="602" r="2.8"/><circle cx="911.1" cy="602" r="2.8"/><circle cx="726.3" cy="607.9" r="2.8"/><circle cx="725.8" cy="618.2" r="2.8"/><circle cx="739.9" cy="607.9" r="2.8"/><circle cx="738.8" cy="618.2" r="2.8"/><circle cx="753.5" cy="607.9" r="2.8"/><circle cx="753" cy="618.2" r="2.8"/><circle cx="767.1" cy="607.9" r="2.8"/><circle cx="766.6" cy="618.2" r="2.8"/><circle cx="780.7" cy="607.9" r="2.8"/><circle cx="780.2" cy="618.2" r="2.8"/><circle cx="795" cy="607.9" r="2.8"/><circle cx="793.8" cy="618.2" r="2.8"/><circle cx="807.9" cy="607.9" r="2.8"/><circle cx="808.1" cy="618.2" r="2.8"/><circle cx="821.5" cy="607.9" r="2.8"/><circle cx="821.1" cy="618.2" r="2.8"/><circle cx="835.8" cy="607.9" r="2.8"/><circle cx="834.7" cy="618.2" r="2.8"/><circle cx="848.9" cy="607.9" r="2.8"/><circle cx="849" cy="618.2" r="2.8"/><circle cx="958.6" cy="677" r="3.7"/><circle cx="994.6" cy="758.1" r="3.7"/><circle cx="957.1" cy="620.8" r="3.7"/><circle cx="921.5" cy="604.5" r="3.7"/><circle cx="944.5" cy="662.3" r="3.7"/><circle cx="889.6" cy="664.5" r="3.7"/><circle cx="889.6" cy="654.9" r="3.7"/><circle cx="980" cy="663" r="3.7"/><circle cx="929.7" cy="694.1" r="3.7"/><circle cx="871.1" cy="694.1" r="3.7"/><circle cx="940" cy="694.1" r="3.7"/><circle cx="880.8" cy="694.1" r="3.7"/><circle cx="848.9" cy="608.2" r="3.7"/><circle cx="848.9" cy="617.8" r="3.7"/><circle cx="989.7" cy="654.1" r="3.7"/><circle cx="989.7" cy="662.3" r="3.7"/><circle cx="856.3" cy="691.2" r="3.7"/><circle cx="906" cy="691.2" r="3.7"/><circle cx="957.1" cy="691.2" r="3.7"/><circle cx="980" cy="604.5" r="3.7"/><circle cx="922.3" cy="615.6" r="3.7"/><circle cx="731.9" cy="676.5" r="3.7"/><circle cx="731.9" cy="691.2" r="3.7"/><circle cx="805.8" cy="691.2" r="3.7"/><circle cx="740" cy="627" r="3.7"/><circle cx="753.5" cy="627" r="3.7"/><circle cx="712.7" cy="748.6" r="2.8"/><circle cx="726.2" cy="748.6" r="2.8"/><circle cx="740.2" cy="748.6" r="2.8"/><circle cx="753.6" cy="748.6" r="2.8"/><circle cx="767" cy="748.6" r="2.8"/><circle cx="781" cy="748.6" r="2.8"/><circle cx="795" cy="748.6" r="2.8"/><circle cx="807.8" cy="748.6" r="2.8"/><circle cx="821.8" cy="748.6" r="2.8"/><circle cx="835.8" cy="748.6" r="2.8"/><circle cx="849.2" cy="748.6" r="2.8"/><circle cx="863.2" cy="748.6" r="2.8"/><circle cx="877" cy="748.6" r="2.8"/><circle cx="889.9" cy="748.6" r="2.8"/><circle cx="904" cy="748.6" r="2.8"/><circle cx="705.7" cy="755.6" r="2.8"/><circle cx="719.7" cy="755.6" r="2.8"/><circle cx="732.6" cy="755.6" r="2.8"/><circle cx="746.6" cy="755.6" r="2.8"/><circle cx="760.6" cy="755.6" r="2.8"/><circle cx="774" cy="755.6" r="2.8"/><circle cx="788" cy="755.6" r="2.8"/><circle cx="802" cy="755.6" r="2.8"/><circle cx="814.8" cy="755.6" r="2.8"/><circle cx="828.8" cy="755.6" r="2.8"/><circle cx="842.8" cy="755.6" r="2.8"/><circle cx="855.7" cy="755.6" r="2.8"/><circle cx="869.6" cy="755.6" r="2.8"/><circle cx="883.8" cy="755.6" r="2.8"/><circle cx="896.6" cy="755.6" r="2.8"/><circle cx="712.7" cy="761.4" r="2.8"/><circle cx="712.7" cy="771.9" r="2.8"/><circle cx="726.2" cy="761.4" r="2.8"/><circle cx="726.2" cy="771.9" r="2.8"/><circle cx="740.2" cy="761.4" r="2.8"/><circle cx="740.2" cy="771.9" r="2.8"/><circle cx="753.6" cy="761.4" r="2.8"/><circle cx="753.6" cy="771.9" r="2.8"/><circle cx="767" cy="761.4" r="2.8"/><circle cx="767" cy="771.9" r="2.8"/><circle cx="807.8" cy="761.4" r="2.8"/><circle cx="807.8" cy="771.9" r="2.8"/><circle cx="821.8" cy="761.4" r="2.8"/><circle cx="821.8" cy="771.9" r="2.8"/><circle cx="863.2" cy="761.4" r="2.8"/><circle cx="863.2" cy="771.9" r="2.8"/><circle cx="862.8" cy="762.2" r="3.7"/><circle cx="862.8" cy="771.6" r="3.7"/><circle cx="993.9" cy="789.9" r="3.7"/><circle cx="1010.1" cy="789.9" r="3.7"/><circle cx="839.9" cy="794.1" r="3.7"/><circle cx="839.9" cy="804" r="3.7"/><circle cx="767" cy="781.8" r="3.7"/><circle cx="923.6" cy="771.6" r="3.7"/><circle cx="933.8" cy="771.6" r="3.7"/><circle cx="921.6" cy="800.7" r="3.7"/><circle cx="998" cy="827" r="3.7"/><circle cx="998" cy="836.5" r="3.7"/><circle cx="904.7" cy="719.6" r="3.7"/><circle cx="944.6" cy="719.6" r="3.7"/><circle cx="799.7" cy="804.6" r="3.7"/><circle cx="747.7" cy="825" r="3.7"/><circle cx="698.7" cy="769" r="3.7"/><circle cx="698.7" cy="781.8" r="3.7"/><circle cx="698.7" cy="817.4" r="3.7"/><circle cx="698.7" cy="834.3" r="3.7"/><circle cx="698.7" cy="725.2" r="3.7"/><circle cx="698.7" cy="734.6" r="3.7"/><circle cx="937.8" cy="754.7" r="3.7"/><circle cx="948" cy="754.7" r="3.7"/><circle cx="962.8" cy="768.9" r="3.7"/><circle cx="1014.2" cy="773.6" r="3.7"/><circle cx="954.7" cy="841.2" r="3.7"/><circle cx="720" cy="840" r="3.7"/><circle cx="740" cy="843" r="3.7"/><circle cx="347" cy="667.7" r="3.7"/><circle cx="346.6" cy="726.8" r="3.7"/><circle cx="345.5" cy="781.2" r="3.7"/><circle cx="344.5" cy="830.8" r="3.7"/><circle cx="349" cy="612" r="3.7"/><circle cx="352" cy="560" r="3.7"/><circle cx="647" cy="537" r="3.7"/><circle cx="655" cy="537" r="3.7"/><circle cx="647" cy="697.2" r="3.7"/><circle cx="654.9" cy="697.2" r="3.7"/><circle cx="923.8" cy="581.7" r="3.7"/><circle cx="932" cy="581.7" r="3.7"/><circle cx="923.8" cy="737.8" r="3.7"/><circle cx="932.2" cy="737.8" r="3.7"/></g>
<polygon points="563.0,606.0 580.0,589.0 590.0,592.0 590.0,624.0 575.0,632.0 563.0,632.0" fill="url(#dots)" stroke="#4a9ec0" stroke-width="1"/><polygon points="570.0,642.0 582.0,632.0 590.0,632.0 590.0,640.0 578.0,650.0 570.0,650.0" fill="url(#dots)" stroke="#4a9ec0" stroke-width="1"/>
</g>
<g fill="none" stroke="#9a3cc6" stroke-width="1.1" shape-rendering="auto"><polyline points="449.0,517.0 449.0,451.7 468.6,432.0"/><polyline points="456.2,527.0 456.2,457.0"/><polyline points="463.0,517.0 463.0,457.0 502.5,418.4 502.5,379.0 507.6,373.0"/><polyline points="470.0,527.0 470.0,462.4 523.6,406.4"/><polyline points="477.0,517.0 477.0,471.7"/><polyline points="483.0,527.0 483.0,466.0 582.7,366.3"/><polyline points="490.0,517.0 490.0,482.0 565.6,406.4 622.0,406.4"/><polyline points="496.9,527.0 496.9,484.3 567.8,414.0"/><polyline points="504.0,517.0 504.0,487.0 568.0,423.0 657.7,423.0"/><polyline points="510.9,527.0 510.9,490.3 551.0,450.0 561.0,450.0"/><polyline points="518.0,517.0 518.0,504.5 560.3,461.3"/><polyline points="558.0,443.0 574.6,443.0"/><polyline points="524.0,527.0 524.0,515.0 609.0,430.0 708.3,430.0 725.0,416.7"/><polyline points="530.8,517.1 530.8,515.0 610.8,435.0 665.0,435.0 669.0,431.0"/><polyline points="537.9,527.0 537.9,515.0 613.7,439.2 759.2,439.2 765.0,431.7 861.7,431.7 865.0,432.5"/><polyline points="544.8,517.1 544.8,515.0 616.5,443.3 677.5,443.3 681.7,448.3"/><polyline points="551.9,527.0 551.9,515.0 609.4,457.5 711.7,457.5 717.0,452.5 740.0,452.5"/><polyline points="558.9,517.1 558.9,515.0 613.1,460.8 716.7,460.8"/><polyline points="565.0,527.0 565.0,515.0 615.0,465.0 848.3,465.0 854.2,458.7"/><polyline points="571.8,517.1 571.8,515.0 617.6,469.2 906.7,469.2 906.7,471.7"/><polyline points="578.9,527.0 578.9,515.0 619.7,474.2 900.8,474.2 908.3,482.0 939.2,482.0"/><polyline points="585.8,517.1 585.8,515.0 622.5,478.3 871.7,478.3 871.7,480.8"/><polyline points="592.9,527.0 592.9,515.0 625.4,482.5 816.7,482.5 819.2,484.2"/><polyline points="599.9,517.1 599.9,515.0 627.4,487.5 756.7,487.5 760.8,487.5"/><polyline points="606.0,527.0 606.0,515.0 627.7,493.3 769.0,493.3 771.7,489.2"/><polyline points="612.8,517.1 612.8,515.0 629.5,498.3 896.7,498.3 904.2,490.8"/><polyline points="619.9,527.0 619.9,515.0 632.4,502.5 828.3,502.5 825.8,508.0"/><polyline points="626.8,517.1 626.8,515.0 635.1,506.7 835.0,506.7 835.0,508.0"/><polyline points="634.1,527.0 634.1,515.0 638.3,510.8 743.3,510.8 745.8,511.7"/><polyline points="640.7,517.1 640.7,515.0 640.7,515.0 716.7,515.0 723.3,521.7"/><polyline points="733.3,416.7 756.7,416.7"/><polyline points="691.0,402.0 691.0,410.6"/><polyline points="850.8,485.0 860.0,485.0"/><polyline points="792.5,489.2 801.7,489.2"/><polyline points="840.0,450.8 845.0,458.3"/><polyline points="939.2,453.3 939.2,459.2"/><polyline points="386.9,505.2 386.9,516.4"/><polyline points="418.3,480.7 428.9,491.0 428.9,517.0"/><polyline points="369.3,529.7 441.7,529.7 441.7,527.0"/><polyline points="723.0,360.0 723.0,388.0"/><polyline points="406.6,561.7 406.6,562.6 502.5,562.6 515.4,575.3 514.8,609.6"/><polyline points="399.4,567.5 406.6,574.0 406.6,628.4 440.9,662.7 446.0,667.0 449.3,672.0 449.3,679.0"/><polyline points="399.4,577.9 400.1,579.0 400.1,629.0 439.0,667.3 441.6,671.8"/><polyline points="384.5,620.6 411.1,646.5 428.6,664.0 428.6,671.8"/><polyline points="384.5,662.7 420.2,663.0 428.0,670.0 435.7,679.0"/><polyline points="418.9,581.1 428.6,590.2 428.6,628.4 463.6,664.0 462.9,679.0"/><polyline points="435.1,568.1 444.8,577.0 444.8,636.2 477.2,668.0 476.5,679.0"/><polyline points="435.1,644.6 462.9,670.5 469.4,671.8"/><polyline points="475.9,645.9 490.8,660.8 490.1,679.0"/><polyline points="475.9,656.9 483.7,664.6 483.0,671.8"/><polyline points="499.2,568.1 504.4,574.0 504.4,585.0 504.4,679.0"/><polyline points="498.6,578.5 497.3,581.0 496.6,671.8"/><polyline points="510.9,657.6 510.9,671.8"/><polyline points="533.6,568.8 522.5,581.1 522.5,638.1 518.0,642.0 518.0,679.0"/><polyline points="533.6,578.5 528.4,584.0 528.4,640.0 523.8,645.0 523.8,671.8"/><polyline points="533.6,644.6 531.0,648.0 531.0,679.0"/><polyline points="418.2,677.6 435.7,679.0"/><polyline points="583.3,568.8 552.6,599.5 551.8,679.0"/><polyline points="583.3,579.0 559.7,602.7 558.9,672.0"/><polyline points="582.5,620.8 565.2,638.1 564.4,679.0"/><polyline points="623.5,564.9 609.3,579.0 609.3,620.8 573.0,657.0 571.5,672.0"/><polyline points="623.5,575.1 614.8,583.0 614.8,624.0 578.6,660.2 578.6,679.0"/><polyline points="623.5,586.1 642.4,586.1 698.5,530.0 732.6,530.0 740.0,522.0"/><polyline points="712.5,522.0 639.2,595.3 639.2,627.1 593.5,661.7 592.8,679.0"/><polyline points="690.4,548.3 645.5,593.2 645.5,632.0 599.8,666.5 599.8,672.0"/><polyline points="690.4,558.6 651.8,597.2 651.8,636.0 606.1,672.0 606.1,679.0"/><polyline points="659.7,607.4 651.8,615.0"/><polyline points="659.7,617.6 660.5,620.0 660.5,642.0 620.3,674.0 620.3,679.0"/><polyline points="662.0,648.3 657.0,648.3 627.4,671.2"/><polyline points="662.0,666.5 648.0,666.5 634.5,673.5"/><polyline points="582.5,662.5 585.7,672.0"/><polyline points="1015.5,640.0 1017.0,700.0"/><polyline points="1017.8,730.0 1019.5,800.0"/><polyline points="1020.0,818.0 1020.6,846.0"/><polyline points="462.4,825.8 462.4,838.8"/><polyline points="476.8,825.8 476.8,838.8"/><polyline points="503.6,825.8 503.6,838.8"/><polyline points="518.0,825.8 518.0,838.8"/><polyline points="531.0,825.8 531.0,838.8"/><polyline points="455.9,833.0 455.9,838.0 450.9,846.0"/><polyline points="469.6,833.0 469.6,838.0 464.6,846.0"/><polyline points="497.0,833.0 497.0,838.0 492.0,846.0"/><polyline points="510.8,833.0 510.8,838.0 505.8,846.0"/><polyline points="393.7,719.6 394.4,732.0 399.5,738.4"/><polyline points="400.2,728.3 407.5,735.0 407.5,754.3 450.1,797.0 449.4,825.8"/><polyline points="399.5,753.6 429.9,782.5 429.9,820.0 435.6,825.8"/><polyline points="434.9,728.3 434.9,745.6 490.5,801.3 489.8,825.8"/><polyline points="463.8,746.4 520.9,804.9 605.8,804.9 615.1,815.7"/><polyline points="463.8,763.7 524.5,825.0 523.8,833.0"/><polyline points="463.8,782.5 483.3,802.0 482.6,833.0"/><polyline points="434.9,796.2 442.1,803.0 442.1,833.0"/><polyline points="398.8,828.0 425.0,828.0 428.4,833.0"/><polyline points="543.0,846.0 557.0,817.2 605.8,817.2"/><polyline points="546.0,846.0 553.0,832.3 592.7,832.3"/><polyline points="553.0,846.0 558.0,837.4 600.0,837.4 600.0,834.5"/><polyline points="712.7,749.2 712.7,762.0 706.2,755.8"/><polyline points="726.3,595.6 726.3,607.9"/><polyline points="719.8,602.0 719.8,609.0 725.8,618.2"/><polyline points="739.9,595.6 739.9,607.9"/><polyline points="732.8,602.0 732.8,609.0 738.8,618.2"/><polyline points="753.5,595.6 753.5,607.9"/><polyline points="747.0,602.0 747.0,609.0 753.0,618.2"/><polyline points="767.1,595.6 767.1,607.9"/><polyline points="760.6,602.0 760.6,609.0 766.6,618.2"/><polyline points="780.7,595.6 780.7,607.9"/><polyline points="774.2,602.0 774.2,609.0 780.2,618.2"/><polyline points="795.0,595.6 795.0,607.9"/><polyline points="787.8,602.0 787.8,609.0 793.8,618.2"/><polyline points="807.9,595.6 807.9,607.9"/><polyline points="802.1,602.0 802.1,609.0 808.1,618.2"/><polyline points="821.5,595.6 821.5,607.9"/><polyline points="815.1,602.0 815.1,609.0 821.1,618.2"/><polyline points="835.8,595.6 835.8,607.9"/><polyline points="828.7,602.0 828.7,609.0 834.7,618.2"/><polyline points="848.9,595.6 848.9,607.9"/><polyline points="843.0,602.0 843.0,609.0 849.0,618.2"/><polyline points="705.6,602.0 705.6,617.6 757.4,667.5 806.6,667.5 848.8,709.6 942.3,709.6 958.6,695.0 958.6,677.0"/><polyline points="712.7,595.6 712.7,613.0 760.0,663.6 809.2,663.6 851.4,705.0 946.6,705.0 994.6,758.1"/><polyline points="917.8,595.6 931.2,596.0 957.1,620.8"/><polyline points="911.1,602.0 921.5,604.5"/><polyline points="903.7,595.6 904.4,621.5 944.5,662.3"/><polyline points="897.1,602.0 897.1,658.0 889.6,664.5"/><polyline points="890.4,595.6 889.6,654.9"/><polyline points="883.7,602.0 884.5,668.2 888.2,672.6 970.4,672.6 980.0,663.0"/><polyline points="877.0,595.6 877.0,669.0 886.0,678.6 914.1,678.6 927.4,694.1"/><polyline points="870.4,602.0 871.1,694.1"/><polyline points="863.0,595.6 863.7,678.0 869.0,684.5 909.7,684.5 926.0,700.0 935.0,700.0 940.0,694.1"/><polyline points="856.3,602.0 856.3,675.6 866.7,697.8 874.0,700.0 880.8,694.1"/><polyline points="848.9,595.6 848.9,608.2"/><polyline points="989.7,654.1 989.7,662.3"/><polyline points="959.0,677.0 968.0,683.0"/><polyline points="712.7,748.6 712.7,761.4"/><polyline points="726.2,748.6 726.2,761.4"/><polyline points="740.2,748.6 740.2,761.4"/><polyline points="753.6,748.6 753.6,761.4"/><polyline points="767.0,748.6 767.0,761.4"/><polyline points="807.8,748.6 807.8,761.4"/><polyline points="821.8,748.6 821.8,761.4"/><polyline points="863.2,748.6 863.2,761.4"/><polyline points="705.7,755.6 705.7,764.0 712.7,771.9"/><polyline points="719.7,755.6 719.7,764.0 726.2,771.9"/><polyline points="732.6,755.6 732.6,764.0 740.2,771.9"/><polyline points="746.6,755.6 746.6,764.0 753.6,771.9"/><polyline points="760.6,755.6 760.6,764.0 767.0,771.9"/><polyline points="802.0,755.6 802.0,764.0 807.8,771.9"/><polyline points="814.8,755.6 814.8,764.0 821.8,771.9"/><polyline points="855.7,755.6 855.7,764.0 863.2,771.9"/><polyline points="774.0,755.6 774.0,769.0 838.1,833.1 914.9,833.1 927.8,846.0"/><polyline points="781.0,748.6 781.0,769.0 840.4,828.4 911.0,828.4 928.6,846.0"/><polyline points="788.0,755.6 788.0,769.0 843.3,824.3 908.0,824.3 929.7,846.0"/><polyline points="795.0,748.6 795.0,769.0 846.3,820.3 906.8,820.3 932.5,846.0"/><polyline points="828.8,755.6 828.8,767.0 876.7,814.9 915.0,814.9 966.9,866.8 966.9,846.0"/><polyline points="835.8,748.6 835.8,767.0 879.6,810.8 920.0,810.8 970.3,861.1 970.3,846.0"/><polyline points="842.8,755.6 842.8,767.0 882.6,806.8 925.0,806.8 973.6,855.4 973.6,846.0"/><polyline points="849.2,748.6 849.2,767.0 885.0,802.8 930.0,802.8 977.0,849.8 977.0,846.0"/><polyline points="869.6,755.6 869.6,760.0 904.9,795.3 935.0,795.3 980.4,840.7 980.4,846.0"/><polyline points="877.0,748.6 877.0,760.0 908.2,791.2 940.0,791.2 983.8,835.0 983.8,846.0"/><polyline points="883.8,755.6 883.8,760.0 910.3,786.5 945.0,786.5 987.8,829.3 987.8,846.0"/><polyline points="889.9,748.6 889.9,760.0 911.7,781.8 950.0,781.8 992.6,824.4 992.6,846.0"/><polyline points="896.6,755.6 896.6,760.0 915.0,778.4 955.0,778.4 996.0,819.4 996.0,846.0"/><polyline points="904.0,748.6 917.0,762.8 943.0,762.8 1008.1,827.9 1008.1,846.0"/><polyline points="862.8,762.2 862.8,771.6"/><polyline points="993.9,789.9 1010.1,789.9"/><polyline points="343.0,680.0 342.5,700.0"/><polyline points="343.0,722.0 342.5,760.0"/><polyline points="343.0,790.0 342.5,812.0"/><polyline points="343.0,826.0 342.5,846.0"/></g>
<g fill="none" stroke="#f0e88a" stroke-width="1.1" shape-rendering="auto"><polyline points="647.0,537.0 649.0,542.0 645.0,544.3 383.0,544.3 357.5,570.0 357.5,846.0"/><polyline points="655.0,537.0 655.0,544.0 648.0,547.5 385.0,547.5 361.5,571.0 361.5,575.0 361.5,577.5 363.7,578.5 363.7,581.5 361.5,582.5 361.5,585.0 361.5,587.5 363.7,588.5 363.7,591.5 361.5,592.5 361.5,595.0 361.5,597.5 363.7,598.5 363.7,601.5 361.5,602.5 361.5,605.0 361.5,607.5 363.7,608.5 363.7,611.5 361.5,612.5 361.5,615.0 361.5,617.5 363.7,618.5 363.7,621.5 361.5,622.5 361.5,625.0 361.5,627.5 363.7,628.5 363.7,631.5 361.5,632.5 361.5,635.0 361.5,637.5 363.7,638.5 363.7,641.5 361.5,642.5 361.5,645.0 361.5,647.5 363.7,648.5 363.7,651.5 361.5,652.5 361.5,655.0 361.5,657.5 363.7,658.5 363.7,661.5 361.5,662.5 361.5,665.0 361.5,667.5 363.7,668.5 363.7,671.5 361.5,672.5 361.5,675.0 361.5,677.5 363.7,678.5 363.7,681.5 361.5,682.5 361.5,685.0 361.5,687.5 363.7,688.5 363.7,691.5 361.5,692.5 361.5,693.0 361.5,846.0"/><polyline points="647.0,697.2 650.0,690.0 645.0,693.7 394.5,693.7 376.5,711.0 376.5,846.0"/><polyline points="654.9,697.2 655.0,690.0 648.0,697.5 645.0,697.5 646.0,697.5 644.8,695.3 641.2,695.3 640.0,697.5 637.0,697.5 634.0,697.5 632.8,695.3 629.2,695.3 628.0,697.5 625.0,697.5 622.0,697.5 620.8,695.3 617.2,695.3 616.0,697.5 613.0,697.5 610.0,697.5 608.8,695.3 605.2,695.3 604.0,697.5 601.0,697.5 598.0,697.5 596.8,695.3 593.2,695.3 592.0,697.5 589.0,697.5 586.0,697.5 584.8,695.3 581.2,695.3 580.0,697.5 577.0,697.5 574.0,697.5 572.8,695.3 569.2,695.3 568.0,697.5 565.0,697.5 562.0,697.5 560.8,695.3 557.2,695.3 556.0,697.5 553.0,697.5 550.0,697.5 548.8,695.3 545.2,695.3 544.0,697.5 541.0,697.5 538.0,697.5 536.8,695.3 533.2,695.3 532.0,697.5 529.0,697.5 526.0,697.5 524.8,695.3 521.2,695.3 520.0,697.5 517.0,697.5 514.0,697.5 512.8,695.3 509.2,695.3 508.0,697.5 505.0,697.5 502.0,697.5 500.8,695.3 497.2,695.3 496.0,697.5 493.0,697.5 490.0,697.5 488.8,695.3 485.2,695.3 484.0,697.5 481.0,697.5 478.0,697.5 476.8,695.3 473.2,695.3 472.0,697.5 469.0,697.5 466.0,697.5 464.8,695.3 461.2,695.3 460.0,697.5 457.0,697.5 454.0,697.5 452.8,695.3 449.2,695.3 448.0,697.5 445.0,697.5 442.0,697.5 440.8,695.3 437.2,695.3 436.0,697.5 433.0,697.5 430.0,697.5 428.8,695.3 425.2,695.3 424.0,697.5 421.0,697.5 418.0,697.5 416.8,695.3 413.2,695.3 412.0,697.5 409.0,697.5 406.0,697.5 404.8,695.3 401.2,695.3 400.0,697.5 397.0,697.5 397.0,697.5 380.3,714.0 380.3,846.0"/><polyline points="923.8,581.7 925.0,574.0 920.0,570.9 710.4,570.9 681.6,600.0 681.6,742.0 647.7,776.7 647.7,828.7 638.3,838.8 612.0,838.8 605.0,846.0"/><polyline points="932.0,581.7 932.0,576.0 926.0,575.0 926.0,575.0 925.0,575.0 923.8,572.8 920.2,572.8 919.0,575.0 916.0,575.0 913.0,575.0 911.8,572.8 908.2,572.8 907.0,575.0 904.0,575.0 901.0,575.0 899.8,572.8 896.2,572.8 895.0,575.0 892.0,575.0 889.0,575.0 887.8,572.8 884.2,572.8 883.0,575.0 880.0,575.0 877.0,575.0 875.8,572.8 872.2,572.8 871.0,575.0 868.0,575.0 865.0,575.0 863.8,572.8 860.2,572.8 859.0,575.0 856.0,575.0 853.0,575.0 851.8,572.8 848.2,572.8 847.0,575.0 844.0,575.0 841.0,575.0 839.8,572.8 836.2,572.8 835.0,575.0 832.0,575.0 829.0,575.0 827.8,572.8 824.2,572.8 823.0,575.0 820.0,575.0 817.0,575.0 815.8,572.8 812.2,572.8 811.0,575.0 808.0,575.0 805.0,575.0 803.8,572.8 800.2,572.8 799.0,575.0 796.0,575.0 793.0,575.0 791.8,572.8 788.2,572.8 787.0,575.0 784.0,575.0 781.0,575.0 779.8,572.8 776.2,572.8 775.0,575.0 772.0,575.0 769.0,575.0 767.8,572.8 764.2,572.8 763.0,575.0 760.0,575.0 757.0,575.0 755.8,572.8 752.2,572.8 751.0,575.0 748.0,575.0 745.0,575.0 743.8,572.8 740.2,572.8 739.0,575.0 736.0,575.0 733.0,575.0 731.8,572.8 728.2,572.8 727.0,575.0 724.0,575.0 721.0,575.0 719.8,572.8 716.2,572.8 715.0,575.0 712.0,575.0 712.0,575.0 685.2,602.0 685.2,742.0 651.3,777.4 651.3,828.7 640.0,841.0 620.0,841.0 615.0,846.0"/><polyline points="923.8,737.8 927.0,730.0 920.0,727.6 719.2,727.6 664.3,784.0 664.3,836.0 655.0,846.0"/><polyline points="932.2,737.8 932.0,732.0 926.0,731.7 926.0,731.7 934.0,731.7 932.8,729.5 929.2,729.5 928.0,731.7 925.0,731.7 922.0,731.7 920.8,729.5 917.2,729.5 916.0,731.7 913.0,731.7 910.0,731.7 908.8,729.5 905.2,729.5 904.0,731.7 901.0,731.7 898.0,731.7 896.8,729.5 893.2,729.5 892.0,731.7 889.0,731.7 886.0,731.7 884.8,729.5 881.2,729.5 880.0,731.7 877.0,731.7 874.0,731.7 872.8,729.5 869.2,729.5 868.0,731.7 865.0,731.7 862.0,731.7 860.8,729.5 857.2,729.5 856.0,731.7 853.0,731.7 850.0,731.7 848.8,729.5 845.2,729.5 844.0,731.7 841.0,731.7 838.0,731.7 836.8,729.5 833.2,729.5 832.0,731.7 829.0,731.7 826.0,731.7 824.8,729.5 821.2,729.5 820.0,731.7 817.0,731.7 814.0,731.7 812.8,729.5 809.2,729.5 808.0,731.7 805.0,731.7 802.0,731.7 800.8,729.5 797.2,729.5 796.0,731.7 793.0,731.7 790.0,731.7 788.8,729.5 785.2,729.5 784.0,731.7 781.0,731.7 778.0,731.7 776.8,729.5 773.2,729.5 772.0,731.7 769.0,731.7 766.0,731.7 764.8,729.5 761.2,729.5 760.0,731.7 757.0,731.7 754.0,731.7 752.8,729.5 749.2,729.5 748.0,731.7 745.0,731.7 742.0,731.7 740.8,729.5 737.2,729.5 736.0,731.7 733.0,731.7 730.0,731.7 728.8,729.5 725.2,729.5 724.0,731.7 721.0,731.7 721.0,731.7 667.2,786.0 667.2,838.0 659.0,846.0"/></g>
<g fill="none" stroke-width="1.1" shape-rendering="auto"><circle cx="449" cy="517.1" r="1.9" stroke="#6cc4dc"/><circle cx="463" cy="517.1" r="1.9" stroke="#6cc4dc"/><circle cx="477" cy="517.1" r="1.9" stroke="#6cc4dc"/><circle cx="490" cy="517.1" r="1.9" stroke="#6cc4dc"/><circle cx="504" cy="517.1" r="1.9" stroke="#6cc4dc"/><circle cx="517.9" cy="517.1" r="1.9" stroke="#6cc4dc"/><circle cx="530.8" cy="517.1" r="1.9" stroke="#6cc4dc"/><circle cx="544.8" cy="517.1" r="1.9" stroke="#6cc4dc"/><circle cx="558.9" cy="517.1" r="1.9" stroke="#6cc4dc"/><circle cx="571.8" cy="517.1" r="1.9" stroke="#6cc4dc"/><circle cx="585.8" cy="517.1" r="1.9" stroke="#6cc4dc"/><circle cx="599.9" cy="517.1" r="1.9" stroke="#6cc4dc"/><circle cx="612.8" cy="517.1" r="1.9" stroke="#6cc4dc"/><circle cx="626.8" cy="517.1" r="1.9" stroke="#6cc4dc"/><circle cx="640.7" cy="517.1" r="1.9" stroke="#6cc4dc"/><circle cx="441.6" cy="527" r="1.9" stroke="#6cc4dc"/><circle cx="456.2" cy="527" r="1.9" stroke="#6cc4dc"/><circle cx="470" cy="527" r="1.9" stroke="#6cc4dc"/><circle cx="483" cy="527" r="1.9" stroke="#6cc4dc"/><circle cx="496.9" cy="527" r="1.9" stroke="#6cc4dc"/><circle cx="510.9" cy="527" r="1.9" stroke="#6cc4dc"/><circle cx="524" cy="527" r="1.9" stroke="#6cc4dc"/><circle cx="537.9" cy="527" r="1.9" stroke="#6cc4dc"/><circle cx="551.9" cy="527" r="1.9" stroke="#6cc4dc"/><circle cx="565" cy="527" r="1.9" stroke="#6cc4dc"/><circle cx="578.9" cy="527" r="1.9" stroke="#6cc4dc"/><circle cx="592.9" cy="527" r="1.9" stroke="#6cc4dc"/><circle cx="606" cy="527" r="1.9" stroke="#6cc4dc"/><circle cx="619.9" cy="527" r="1.9" stroke="#6cc4dc"/><circle cx="634.1" cy="527" r="1.9" stroke="#6cc4dc"/><circle cx="468.6" cy="432" r="2.3" stroke="#6cc4dc"/><circle cx="468.6" cy="432" r="0.9" fill="#d8f0f0" stroke="none"/><circle cx="456" cy="457" r="2.3" stroke="#6cc4dc"/><circle cx="456" cy="457" r="0.9" fill="#d8f0f0" stroke="none"/><circle cx="507.6" cy="373" r="2.3" stroke="#6cc4dc"/><circle cx="507.6" cy="373" r="0.9" fill="#d8f0f0" stroke="none"/><circle cx="523.6" cy="406.4" r="2.3" stroke="#6cc4dc"/><circle cx="523.6" cy="406.4" r="0.9" fill="#d8f0f0" stroke="none"/><circle cx="477" cy="471.7" r="2.3" stroke="#6cc4dc"/><circle cx="477" cy="471.7" r="0.9" fill="#d8f0f0" stroke="none"/><circle cx="582.7" cy="366.3" r="2.3" stroke="#6cc4dc"/><circle cx="582.7" cy="366.3" r="0.9" fill="#d8f0f0" stroke="none"/><circle cx="622" cy="406.4" r="2.3" stroke="#6cc4dc"/><circle cx="622" cy="406.4" r="0.9" fill="#d8f0f0" stroke="none"/><circle cx="567.8" cy="414" r="2.3" stroke="#6cc4dc"/><circle cx="567.8" cy="414" r="0.9" fill="#d8f0f0" stroke="none"/><circle cx="657.7" cy="423" r="2.3" stroke="#6cc4dc"/><circle cx="657.7" cy="423" r="0.9" fill="#d8f0f0" stroke="none"/><circle cx="561" cy="450" r="2.6" stroke="#6cc4dc"/><circle cx="561" cy="450" r="0.9" fill="#d8f0f0" stroke="none"/><circle cx="560.3" cy="461.3" r="2.3" stroke="#6cc4dc"/><circle cx="560.3" cy="461.3" r="0.9" fill="#d8f0f0" stroke="none"/><circle cx="574.6" cy="443" r="2.3" stroke="#6cc4dc"/><circle cx="574.6" cy="443" r="0.9" fill="#d8f0f0" stroke="none"/><circle cx="598" cy="431" r="2.3" stroke="#6cc4dc"/><circle cx="598" cy="431" r="0.9" fill="#d8f0f0" stroke="none"/><circle cx="725" cy="416.7" r="2.3" stroke="#6cc4dc"/><circle cx="725" cy="416.7" r="0.9" fill="#d8f0f0" stroke="none"/><circle cx="669" cy="431" r="2.3" stroke="#6cc4dc"/><circle cx="669" cy="431" r="0.9" fill="#d8f0f0" stroke="none"/><circle cx="865" cy="432.5" r="2.3" stroke="#6cc4dc"/><circle cx="865" cy="432.5" r="0.9" fill="#d8f0f0" stroke="none"/><circle cx="681.7" cy="448.3" r="2.3" stroke="#6cc4dc"/><circle cx="681.7" cy="448.3" r="0.9" fill="#d8f0f0" stroke="none"/><circle cx="740" cy="452.5" r="2.3" stroke="#6cc4dc"/><circle cx="740" cy="452.5" r="0.9" fill="#d8f0f0" stroke="none"/><circle cx="716.7" cy="460.8" r="2.3" stroke="#6cc4dc"/><circle cx="716.7" cy="460.8" r="0.9" fill="#d8f0f0" stroke="none"/><circle cx="854.2" cy="458.7" r="2.3" stroke="#6cc4dc"/><circle cx="854.2" cy="458.7" r="0.9" fill="#d8f0f0" stroke="none"/><circle cx="906.7" cy="471.7" r="2.3" stroke="#6cc4dc"/><circle cx="906.7" cy="471.7" r="0.9" fill="#d8f0f0" stroke="none"/><circle cx="939.2" cy="482" r="2.3" stroke="#6cc4dc"/><circle cx="939.2" cy="482" r="0.9" fill="#d8f0f0" stroke="none"/><circle cx="871.7" cy="480.8" r="2.3" stroke="#6cc4dc"/><circle cx="871.7" cy="480.8" r="0.9" fill="#d8f0f0" stroke="none"/><circle cx="819.2" cy="484.2" r="2.3" stroke="#6cc4dc"/><circle cx="819.2" cy="484.2" r="0.9" fill="#d8f0f0" stroke="none"/><circle cx="760.8" cy="487.5" r="2.3" stroke="#6cc4dc"/><circle cx="760.8" cy="487.5" r="0.9" fill="#d8f0f0" stroke="none"/><circle cx="771.7" cy="489.2" r="2.3" stroke="#6cc4dc"/><circle cx="771.7" cy="489.2" r="0.9" fill="#d8f0f0" stroke="none"/><circle cx="904.2" cy="490.8" r="2.3" stroke="#6cc4dc"/><circle cx="904.2" cy="490.8" r="0.9" fill="#d8f0f0" stroke="none"/><circle cx="825.8" cy="508" r="2.3" stroke="#6cc4dc"/><circle cx="825.8" cy="508" r="0.9" fill="#d8f0f0" stroke="none"/><circle cx="835" cy="508" r="2.3" stroke="#6cc4dc"/><circle cx="835" cy="508" r="0.9" fill="#d8f0f0" stroke="none"/><circle cx="745.8" cy="511.7" r="2.3" stroke="#6cc4dc"/><circle cx="745.8" cy="511.7" r="0.9" fill="#d8f0f0" stroke="none"/><circle cx="723.3" cy="521.7" r="2.3" stroke="#6cc4dc"/><circle cx="723.3" cy="521.7" r="0.9" fill="#d8f0f0" stroke="none"/><circle cx="726.7" cy="458.7" r="2.3" stroke="#6cc4dc"/><circle cx="726.7" cy="458.7" r="0.9" fill="#d8f0f0" stroke="none"/><circle cx="871.7" cy="480.8" r="2.3" stroke="#6cc4dc"/><circle cx="871.7" cy="480.8" r="0.9" fill="#d8f0f0" stroke="none"/><circle cx="886.7" cy="480.8" r="2.3" stroke="#6cc4dc"/><circle cx="886.7" cy="480.8" r="0.9" fill="#d8f0f0" stroke="none"/><circle cx="756.7" cy="416.7" r="2.3" stroke="#6cc4dc"/><circle cx="756.7" cy="416.7" r="0.9" fill="#d8f0f0" stroke="none"/><circle cx="731.7" cy="421.7" r="2.3" stroke="#6cc4dc"/><circle cx="731.7" cy="421.7" r="0.9" fill="#d8f0f0" stroke="none"/><circle cx="731.7" cy="430.8" r="2.3" stroke="#6cc4dc"/><circle cx="731.7" cy="430.8" r="0.9" fill="#d8f0f0" stroke="none"/><circle cx="691" cy="402" r="2.3" stroke="#6cc4dc"/><circle cx="691" cy="402" r="0.9" fill="#d8f0f0" stroke="none"/><circle cx="680" cy="410.8" r="2.6" stroke="#6cc4dc"/><circle cx="680" cy="410.8" r="0.9" fill="#d8f0f0" stroke="none"/><circle cx="691" cy="410.6" r="2.3" stroke="#6cc4dc"/><circle cx="691" cy="410.6" r="0.9" fill="#d8f0f0" stroke="none"/><circle cx="850.8" cy="485" r="2.3" stroke="#6cc4dc"/><circle cx="850.8" cy="485" r="0.9" fill="#d8f0f0" stroke="none"/><circle cx="860" cy="485" r="2.3" stroke="#6cc4dc"/><circle cx="860" cy="485" r="0.9" fill="#d8f0f0" stroke="none"/><circle cx="792.5" cy="489.2" r="2.3" stroke="#6cc4dc"/><circle cx="792.5" cy="489.2" r="0.9" fill="#d8f0f0" stroke="none"/><circle cx="801.7" cy="489.2" r="2.3" stroke="#6cc4dc"/><circle cx="801.7" cy="489.2" r="0.9" fill="#d8f0f0" stroke="none"/><circle cx="840" cy="450.8" r="2.3" stroke="#6cc4dc"/><circle cx="840" cy="450.8" r="0.9" fill="#d8f0f0" stroke="none"/><circle cx="845" cy="458.3" r="2.3" stroke="#6cc4dc"/><circle cx="845" cy="458.3" r="0.9" fill="#d8f0f0" stroke="none"/><circle cx="939.2" cy="453.3" r="2.3" stroke="#6cc4dc"/><circle cx="939.2" cy="453.3" r="0.9" fill="#d8f0f0" stroke="none"/><circle cx="939.2" cy="459.2" r="2.3" stroke="#6cc4dc"/><circle cx="939.2" cy="459.2" r="0.9" fill="#d8f0f0" stroke="none"/><circle cx="642.5" cy="449.2" r="2.6" stroke="#6cc4dc"/><circle cx="642.5" cy="449.2" r="0.9" fill="#d8f0f0" stroke="none"/><circle cx="658.3" cy="450" r="2.6" stroke="#6cc4dc"/><circle cx="658.3" cy="450" r="0.9" fill="#d8f0f0" stroke="none"/><circle cx="705" cy="450" r="2.6" stroke="#6cc4dc"/><circle cx="705" cy="450" r="0.9" fill="#d8f0f0" stroke="none"/><circle cx="773.3" cy="440" r="2.6" stroke="#6cc4dc"/><circle cx="773.3" cy="440" r="0.9" fill="#d8f0f0" stroke="none"/><circle cx="783.3" cy="440" r="2.6" stroke="#6cc4dc"/><circle cx="783.3" cy="440" r="0.9" fill="#d8f0f0" stroke="none"/><circle cx="633" cy="448.7" r="2.3" stroke="#6cc4dc"/><circle cx="633" cy="448.7" r="0.9" fill="#d8f0f0" stroke="none"/><circle cx="643" cy="448.7" r="2.3" stroke="#6cc4dc"/><circle cx="643" cy="448.7" r="0.9" fill="#d8f0f0" stroke="none"/><circle cx="541.9" cy="345" r="2.6" stroke="#6cc4dc"/><circle cx="541.9" cy="345" r="0.9" fill="#d8f0f0" stroke="none"/><circle cx="486" cy="367" r="2.6" stroke="#6cc4dc"/><circle cx="486" cy="367" r="0.9" fill="#d8f0f0" stroke="none"/><circle cx="434.8" cy="449.8" r="2.6" stroke="#6cc4dc"/><circle cx="434.8" cy="449.8" r="0.9" fill="#d8f0f0" stroke="none"/><circle cx="402.8" cy="460" r="2.6" stroke="#6cc4dc"/><circle cx="402.8" cy="460" r="0.9" fill="#d8f0f0" stroke="none"/><circle cx="367.2" cy="489.8" r="2.6" stroke="#6cc4dc"/><circle cx="367.2" cy="489.8" r="0.9" fill="#d8f0f0" stroke="none"/><circle cx="416.1" cy="521.7" r="2.6" stroke="#6cc4dc"/><circle cx="416.1" cy="521.7" r="0.9" fill="#d8f0f0" stroke="none"/><circle cx="511" cy="450" r="2.6" stroke="#6cc4dc"/><circle cx="511" cy="450" r="0.9" fill="#d8f0f0" stroke="none"/><circle cx="633" cy="345.6" r="2.6" stroke="#6cc4dc"/><circle cx="633" cy="345.6" r="0.9" fill="#d8f0f0" stroke="none"/><circle cx="434" cy="418" r="2.6" stroke="#6cc4dc"/><circle cx="434" cy="418" r="0.9" fill="#d8f0f0" stroke="none"/><circle cx="583" cy="395.6" r="2.6" stroke="#6cc4dc"/><circle cx="583" cy="395.6" r="0.9" fill="#d8f0f0" stroke="none"/><circle cx="667.5" cy="395" r="2.6" stroke="#6cc4dc"/><circle cx="667.5" cy="395" r="0.9" fill="#d8f0f0" stroke="none"/><circle cx="386.9" cy="505.2" r="2.3" stroke="#6cc4dc"/><circle cx="386.9" cy="505.2" r="0.9" fill="#d8f0f0" stroke="none"/><circle cx="386.9" cy="516.4" r="2.3" stroke="#6cc4dc"/><circle cx="386.9" cy="516.4" r="0.9" fill="#d8f0f0" stroke="none"/><circle cx="418.3" cy="480.7" r="2.3" stroke="#6cc4dc"/><circle cx="418.3" cy="480.7" r="0.9" fill="#d8f0f0" stroke="none"/><circle cx="428.9" cy="517" r="2.3" stroke="#6cc4dc"/><circle cx="428.9" cy="517" r="0.9" fill="#d8f0f0" stroke="none"/><circle cx="369.3" cy="529.7" r="2.3" stroke="#6cc4dc"/><circle cx="369.3" cy="529.7" r="0.9" fill="#d8f0f0" stroke="none"/><circle cx="658.8" cy="548.9" r="2.6" stroke="#6cc4dc"/><circle cx="658.8" cy="548.9" r="0.9" fill="#d8f0f0" stroke="none"/><circle cx="742" cy="346" r="2.6" stroke="#6cc4dc"/><circle cx="742" cy="346" r="0.9" fill="#d8f0f0" stroke="none"/><circle cx="728" cy="363" r="2.6" stroke="#6cc4dc"/><circle cx="728" cy="363" r="0.9" fill="#d8f0f0" stroke="none"/><circle cx="731" cy="379.6" r="2.6" stroke="#6cc4dc"/><circle cx="731" cy="379.6" r="0.9" fill="#d8f0f0" stroke="none"/><circle cx="780" cy="380" r="2.6" stroke="#6cc4dc"/><circle cx="780" cy="380" r="0.9" fill="#d8f0f0" stroke="none"/><circle cx="790" cy="380" r="2.6" stroke="#6cc4dc"/><circle cx="790" cy="380" r="0.9" fill="#d8f0f0" stroke="none"/><circle cx="730" cy="391.6" r="2.6" stroke="#6cc4dc"/><circle cx="730" cy="391.6" r="0.9" fill="#d8f0f0" stroke="none"/><circle cx="742" cy="395.6" r="2.6" stroke="#6cc4dc"/><circle cx="742" cy="395.6" r="0.9" fill="#d8f0f0" stroke="none"/><circle cx="866.5" cy="359.7" r="2.6" stroke="#6cc4dc"/><circle cx="866.5" cy="359.7" r="0.9" fill="#d8f0f0" stroke="none"/><circle cx="917.5" cy="410" r="2.6" stroke="#6cc4dc"/><circle cx="917.5" cy="410" r="0.9" fill="#d8f0f0" stroke="none"/><circle cx="961.7" cy="453" r="2.6" stroke="#6cc4dc"/><circle cx="961.7" cy="453" r="0.9" fill="#d8f0f0" stroke="none"/><circle cx="995.9" cy="497.7" r="2.6" stroke="#6cc4dc"/><circle cx="995.9" cy="497.7" r="0.9" fill="#d8f0f0" stroke="none"/><circle cx="771" cy="359" r="2.6" stroke="#6cc4dc"/><circle cx="771" cy="359" r="0.9" fill="#d8f0f0" stroke="none"/><circle cx="782" cy="359" r="2.6" stroke="#6cc4dc"/><circle cx="782" cy="359" r="0.9" fill="#d8f0f0" stroke="none"/><circle cx="793" cy="359" r="2.6" stroke="#6cc4dc"/><circle cx="793" cy="359" r="0.9" fill="#d8f0f0" stroke="none"/><circle cx="842.7" cy="375.9" r="3.2" stroke="#c8d890"/><circle cx="842.7" cy="375.9" r="1.5" stroke="#c8d890"/><circle cx="842.7" cy="385.7" r="3.2" stroke="#c8d890"/><circle cx="842.7" cy="385.7" r="1.5" stroke="#c8d890"/><circle cx="842.7" cy="395.8" r="3.2" stroke="#c8d890"/><circle cx="842.7" cy="395.8" r="1.5" stroke="#c8d890"/><circle cx="842.7" cy="408.1" r="3.2" stroke="#c8d890"/><circle cx="842.7" cy="408.1" r="1.5" stroke="#c8d890"/><circle cx="854.1" cy="375.9" r="3.2" stroke="#c8d890"/><circle cx="854.1" cy="375.9" r="1.5" stroke="#c8d890"/><circle cx="854.1" cy="385.7" r="3.2" stroke="#c8d890"/><circle cx="854.1" cy="385.7" r="1.5" stroke="#c8d890"/><circle cx="854.1" cy="395.8" r="3.2" stroke="#c8d890"/><circle cx="854.1" cy="395.8" r="1.5" stroke="#c8d890"/><circle cx="854.1" cy="408.1" r="3.2" stroke="#c8d890"/><circle cx="854.1" cy="408.1" r="1.5" stroke="#c8d890"/><circle cx="800.8" cy="409.2" r="3.2" stroke="#e08a80"/><circle cx="800.8" cy="409.2" r="1.5" stroke="#e08a80"/><circle cx="810.8" cy="409.2" r="3.2" stroke="#e08a80"/><circle cx="810.8" cy="409.2" r="1.5" stroke="#e08a80"/><circle cx="798.3" cy="440" r="3.2" stroke="#e08a80"/><circle cx="798.3" cy="440" r="1.5" stroke="#e08a80"/><circle cx="809.2" cy="440" r="3.2" stroke="#e08a80"/><circle cx="809.2" cy="440" r="1.5" stroke="#e08a80"/><circle cx="428.6" cy="671.8" r="1.9" stroke="#6cc4dc"/><circle cx="441.6" cy="671.8" r="1.9" stroke="#6cc4dc"/><circle cx="455.8" cy="671.8" r="1.9" stroke="#6cc4dc"/><circle cx="469.4" cy="671.8" r="1.9" stroke="#6cc4dc"/><circle cx="483" cy="671.8" r="1.9" stroke="#6cc4dc"/><circle cx="496.6" cy="671.8" r="1.9" stroke="#6cc4dc"/><circle cx="510.9" cy="671.8" r="1.9" stroke="#6cc4dc"/><circle cx="523.8" cy="671.8" r="1.9" stroke="#6cc4dc"/><circle cx="435.7" cy="679" r="1.9" stroke="#6cc4dc"/><circle cx="449.3" cy="679" r="1.9" stroke="#6cc4dc"/><circle cx="462.9" cy="679" r="1.9" stroke="#6cc4dc"/><circle cx="476.5" cy="679" r="1.9" stroke="#6cc4dc"/><circle cx="490.1" cy="679" r="1.9" stroke="#6cc4dc"/><circle cx="503.8" cy="679" r="1.9" stroke="#6cc4dc"/><circle cx="518" cy="679" r="1.9" stroke="#6cc4dc"/><circle cx="531" cy="679" r="1.9" stroke="#6cc4dc"/><circle cx="406.6" cy="561.7" r="2.3" stroke="#6cc4dc"/><circle cx="406.6" cy="561.7" r="0.9" fill="#d8f0f0" stroke="none"/><circle cx="514.8" cy="609.6" r="2.3" stroke="#6cc4dc"/><circle cx="514.8" cy="609.6" r="0.9" fill="#d8f0f0" stroke="none"/><circle cx="399.4" cy="567.5" r="2.3" stroke="#6cc4dc"/><circle cx="399.4" cy="567.5" r="0.9" fill="#d8f0f0" stroke="none"/><circle cx="399.4" cy="577.9" r="2.3" stroke="#6cc4dc"/><circle cx="399.4" cy="577.9" r="0.9" fill="#d8f0f0" stroke="none"/><circle cx="384.5" cy="620.6" r="2.3" stroke="#6cc4dc"/><circle cx="384.5" cy="620.6" r="0.9" fill="#d8f0f0" stroke="none"/><circle cx="384.5" cy="662.7" r="2.3" stroke="#6cc4dc"/><circle cx="384.5" cy="662.7" r="0.9" fill="#d8f0f0" stroke="none"/><circle cx="418.9" cy="581.1" r="2.3" stroke="#6cc4dc"/><circle cx="418.9" cy="581.1" r="0.9" fill="#d8f0f0" stroke="none"/><circle cx="435.1" cy="568.1" r="2.3" stroke="#6cc4dc"/><circle cx="435.1" cy="568.1" r="0.9" fill="#d8f0f0" stroke="none"/><circle cx="435.1" cy="644.6" r="2.3" stroke="#6cc4dc"/><circle cx="435.1" cy="644.6" r="0.9" fill="#d8f0f0" stroke="none"/><circle cx="475.9" cy="645.9" r="2.3" stroke="#6cc4dc"/><circle cx="475.9" cy="645.9" r="0.9" fill="#d8f0f0" stroke="none"/><circle cx="475.9" cy="656.9" r="2.3" stroke="#6cc4dc"/><circle cx="475.9" cy="656.9" r="0.9" fill="#d8f0f0" stroke="none"/><circle cx="499.2" cy="568.1" r="2.3" stroke="#6cc4dc"/><circle cx="499.2" cy="568.1" r="0.9" fill="#d8f0f0" stroke="none"/><circle cx="498.6" cy="578.5" r="2.3" stroke="#6cc4dc"/><circle cx="498.6" cy="578.5" r="0.9" fill="#d8f0f0" stroke="none"/><circle cx="510.9" cy="657.6" r="2.3" stroke="#6cc4dc"/><circle cx="510.9" cy="657.6" r="0.9" fill="#d8f0f0" stroke="none"/><circle cx="533.6" cy="568.8" r="2.3" stroke="#6cc4dc"/><circle cx="533.6" cy="568.8" r="0.9" fill="#d8f0f0" stroke="none"/><circle cx="533.6" cy="578.5" r="2.3" stroke="#6cc4dc"/><circle cx="533.6" cy="578.5" r="0.9" fill="#d8f0f0" stroke="none"/><circle cx="533.6" cy="644.6" r="2.3" stroke="#6cc4dc"/><circle cx="533.6" cy="644.6" r="0.9" fill="#d8f0f0" stroke="none"/><circle cx="468.8" cy="568.1" r="2.3" stroke="#6cc4dc"/><circle cx="468.8" cy="568.1" r="0.9" fill="#d8f0f0" stroke="none"/><circle cx="475.9" cy="636.2" r="2.3" stroke="#6cc4dc"/><circle cx="475.9" cy="636.2" r="0.9" fill="#d8f0f0" stroke="none"/><circle cx="384.5" cy="609.6" r="2.3" stroke="#6cc4dc"/><circle cx="384.5" cy="609.6" r="0.9" fill="#d8f0f0" stroke="none"/><circle cx="408.5" cy="677.6" r="2.3" stroke="#6cc4dc"/><circle cx="408.5" cy="677.6" r="0.9" fill="#d8f0f0" stroke="none"/><circle cx="417.6" cy="620.6" r="2.6" stroke="#6cc4dc"/><circle cx="417.6" cy="620.6" r="0.9" fill="#d8f0f0" stroke="none"/><circle cx="435.7" cy="620.6" r="2.6" stroke="#6cc4dc"/><circle cx="435.7" cy="620.6" r="0.9" fill="#d8f0f0" stroke="none"/><circle cx="514.8" cy="620.6" r="2.6" stroke="#6cc4dc"/><circle cx="514.8" cy="620.6" r="0.9" fill="#d8f0f0" stroke="none"/><circle cx="418.2" cy="677.6" r="2.3" stroke="#6cc4dc"/><circle cx="418.2" cy="677.6" r="0.9" fill="#d8f0f0" stroke="none"/><circle cx="360" cy="612" r="2.6" stroke="#6cc4dc"/><circle cx="360" cy="612" r="0.9" fill="#d8f0f0" stroke="none"/><circle cx="558.9" cy="672" r="1.9" stroke="#6cc4dc"/><circle cx="571.5" cy="672" r="1.9" stroke="#6cc4dc"/><circle cx="585.7" cy="672" r="1.9" stroke="#6cc4dc"/><circle cx="599.8" cy="672" r="1.9" stroke="#6cc4dc"/><circle cx="612.4" cy="672" r="1.9" stroke="#6cc4dc"/><circle cx="626.6" cy="672" r="1.9" stroke="#6cc4dc"/><circle cx="640.8" cy="672" r="1.9" stroke="#6cc4dc"/><circle cx="551.8" cy="679" r="1.9" stroke="#6cc4dc"/><circle cx="564.4" cy="679" r="1.9" stroke="#6cc4dc"/><circle cx="578.6" cy="679" r="1.9" stroke="#6cc4dc"/><circle cx="592.8" cy="679" r="1.9" stroke="#6cc4dc"/><circle cx="606.1" cy="679" r="1.9" stroke="#6cc4dc"/><circle cx="620.3" cy="679" r="1.9" stroke="#6cc4dc"/><circle cx="633.7" cy="679" r="1.9" stroke="#6cc4dc"/><circle cx="583.3" cy="568.8" r="2.3" stroke="#6cc4dc"/><circle cx="583.3" cy="568.8" r="0.9" fill="#d8f0f0" stroke="none"/><circle cx="583.3" cy="579" r="2.3" stroke="#6cc4dc"/><circle cx="583.3" cy="579" r="0.9" fill="#d8f0f0" stroke="none"/><circle cx="582.5" cy="620.8" r="2.3" stroke="#6cc4dc"/><circle cx="582.5" cy="620.8" r="0.9" fill="#d8f0f0" stroke="none"/><circle cx="623.5" cy="564.9" r="2.3" stroke="#6cc4dc"/><circle cx="623.5" cy="564.9" r="0.9" fill="#d8f0f0" stroke="none"/><circle cx="623.5" cy="575.1" r="2.3" stroke="#6cc4dc"/><circle cx="623.5" cy="575.1" r="0.9" fill="#d8f0f0" stroke="none"/><circle cx="623.5" cy="586.1" r="2.3" stroke="#6cc4dc"/><circle cx="623.5" cy="586.1" r="0.9" fill="#d8f0f0" stroke="none"/><circle cx="740" cy="522" r="2.3" stroke="#6cc4dc"/><circle cx="740" cy="522" r="0.9" fill="#d8f0f0" stroke="none"/><circle cx="690.4" cy="548.3" r="2.3" stroke="#6cc4dc"/><circle cx="690.4" cy="548.3" r="0.9" fill="#d8f0f0" stroke="none"/><circle cx="690.4" cy="558.6" r="2.3" stroke="#6cc4dc"/><circle cx="690.4" cy="558.6" r="0.9" fill="#d8f0f0" stroke="none"/><circle cx="659.7" cy="607.4" r="2.3" stroke="#6cc4dc"/><circle cx="659.7" cy="607.4" r="0.9" fill="#d8f0f0" stroke="none"/><circle cx="659.7" cy="617.6" r="2.3" stroke="#6cc4dc"/><circle cx="659.7" cy="617.6" r="0.9" fill="#d8f0f0" stroke="none"/><circle cx="662" cy="648.3" r="2.3" stroke="#6cc4dc"/><circle cx="662" cy="648.3" r="0.9" fill="#d8f0f0" stroke="none"/><circle cx="662" cy="666.5" r="2.3" stroke="#6cc4dc"/><circle cx="662" cy="666.5" r="0.9" fill="#d8f0f0" stroke="none"/><circle cx="623.5" cy="595.6" r="2.3" stroke="#6cc4dc"/><circle cx="623.5" cy="595.6" r="0.9" fill="#d8f0f0" stroke="none"/><circle cx="623.5" cy="609.8" r="2.3" stroke="#6cc4dc"/><circle cx="623.5" cy="609.8" r="0.9" fill="#d8f0f0" stroke="none"/><circle cx="623.5" cy="630.2" r="2.3" stroke="#6cc4dc"/><circle cx="623.5" cy="630.2" r="0.9" fill="#d8f0f0" stroke="none"/><circle cx="595.9" cy="650.7" r="2.3" stroke="#6cc4dc"/><circle cx="595.9" cy="650.7" r="0.9" fill="#d8f0f0" stroke="none"/><circle cx="631.3" cy="649.1" r="2.3" stroke="#6cc4dc"/><circle cx="631.3" cy="649.1" r="0.9" fill="#d8f0f0" stroke="none"/><circle cx="623.5" cy="657" r="2.3" stroke="#6cc4dc"/><circle cx="623.5" cy="657" r="0.9" fill="#d8f0f0" stroke="none"/><circle cx="659.7" cy="597.2" r="2.3" stroke="#6cc4dc"/><circle cx="659.7" cy="597.2" r="0.9" fill="#d8f0f0" stroke="none"/><circle cx="623.5" cy="620.8" r="2.6" stroke="#6cc4dc"/><circle cx="623.5" cy="620.8" r="0.9" fill="#d8f0f0" stroke="none"/><circle cx="583.3" cy="609.8" r="2.6" stroke="#6cc4dc"/><circle cx="583.3" cy="609.8" r="0.9" fill="#d8f0f0" stroke="none"/><circle cx="659.7" cy="597.2" r="2.6" stroke="#6cc4dc"/><circle cx="659.7" cy="597.2" r="0.9" fill="#d8f0f0" stroke="none"/><circle cx="583.3" cy="589.3" r="2.3" stroke="#6cc4dc"/><circle cx="583.3" cy="589.3" r="0.9" fill="#d8f0f0" stroke="none"/><circle cx="582.5" cy="662.5" r="2.3" stroke="#6cc4dc"/><circle cx="582.5" cy="662.5" r="0.9" fill="#d8f0f0" stroke="none"/><circle cx="705.8" cy="543.75" r="2.6" stroke="#6cc4dc"/><circle cx="705.8" cy="543.75" r="0.9" fill="#d8f0f0" stroke="none"/><circle cx="712.5" cy="522" r="2.6" stroke="#6cc4dc"/><circle cx="712.5" cy="522" r="0.9" fill="#d8f0f0" stroke="none"/><circle cx="805" cy="543" r="2.6" stroke="#6cc4dc"/><circle cx="805" cy="543" r="0.9" fill="#d8f0f0" stroke="none"/><circle cx="855" cy="543" r="2.6" stroke="#6cc4dc"/><circle cx="855" cy="543" r="0.9" fill="#d8f0f0" stroke="none"/><circle cx="905" cy="544" r="2.6" stroke="#6cc4dc"/><circle cx="905" cy="544" r="0.9" fill="#d8f0f0" stroke="none"/><circle cx="979.5" cy="539.6" r="2.6" stroke="#6cc4dc"/><circle cx="979.5" cy="539.6" r="0.9" fill="#d8f0f0" stroke="none"/><circle cx="1007.7" cy="551" r="2.6" stroke="#6cc4dc"/><circle cx="1007.7" cy="551" r="0.9" fill="#d8f0f0" stroke="none"/><circle cx="435.6" cy="825.8" r="1.9" stroke="#6cc4dc"/><circle cx="449.4" cy="825.8" r="1.9" stroke="#6cc4dc"/><circle cx="462.4" cy="825.8" r="1.9" stroke="#6cc4dc"/><circle cx="476.8" cy="825.8" r="1.9" stroke="#6cc4dc"/><circle cx="489.8" cy="825.8" r="1.9" stroke="#6cc4dc"/><circle cx="503.6" cy="825.8" r="1.9" stroke="#6cc4dc"/><circle cx="518" cy="825.8" r="1.9" stroke="#6cc4dc"/><circle cx="531" cy="825.8" r="1.9" stroke="#6cc4dc"/><circle cx="428.4" cy="833" r="1.9" stroke="#6cc4dc"/><circle cx="442.1" cy="833" r="1.9" stroke="#6cc4dc"/><circle cx="455.9" cy="833" r="1.9" stroke="#6cc4dc"/><circle cx="469.6" cy="833" r="1.9" stroke="#6cc4dc"/><circle cx="482.6" cy="833" r="1.9" stroke="#6cc4dc"/><circle cx="497" cy="833" r="1.9" stroke="#6cc4dc"/><circle cx="510.8" cy="833" r="1.9" stroke="#6cc4dc"/><circle cx="523.8" cy="833" r="1.9" stroke="#6cc4dc"/><circle cx="462.4" cy="838.8" r="1.9" stroke="#6cc4dc"/><circle cx="476.8" cy="838.8" r="1.9" stroke="#6cc4dc"/><circle cx="503.6" cy="838.8" r="1.9" stroke="#6cc4dc"/><circle cx="518" cy="838.8" r="1.9" stroke="#6cc4dc"/><circle cx="531" cy="838.8" r="1.9" stroke="#6cc4dc"/><circle cx="393.7" cy="719.6" r="2.3" stroke="#6cc4dc"/><circle cx="393.7" cy="719.6" r="0.9" fill="#d8f0f0" stroke="none"/><circle cx="399.5" cy="738.4" r="2.3" stroke="#6cc4dc"/><circle cx="399.5" cy="738.4" r="0.9" fill="#d8f0f0" stroke="none"/><circle cx="400.2" cy="728.3" r="2.3" stroke="#6cc4dc"/><circle cx="400.2" cy="728.3" r="0.9" fill="#d8f0f0" stroke="none"/><circle cx="399.5" cy="753.6" r="2.3" stroke="#6cc4dc"/><circle cx="399.5" cy="753.6" r="0.9" fill="#d8f0f0" stroke="none"/><circle cx="434.9" cy="728.3" r="2.3" stroke="#6cc4dc"/><circle cx="434.9" cy="728.3" r="0.9" fill="#d8f0f0" stroke="none"/><circle cx="463.8" cy="746.4" r="2.3" stroke="#6cc4dc"/><circle cx="463.8" cy="746.4" r="0.9" fill="#d8f0f0" stroke="none"/><circle cx="615.1" cy="815.7" r="2.3" stroke="#6cc4dc"/><circle cx="615.1" cy="815.7" r="0.9" fill="#d8f0f0" stroke="none"/><circle cx="463.8" cy="763.7" r="2.3" stroke="#6cc4dc"/><circle cx="463.8" cy="763.7" r="0.9" fill="#d8f0f0" stroke="none"/><circle cx="463.8" cy="782.5" r="2.3" stroke="#6cc4dc"/><circle cx="463.8" cy="782.5" r="0.9" fill="#d8f0f0" stroke="none"/><circle cx="434.9" cy="796.2" r="2.3" stroke="#6cc4dc"/><circle cx="434.9" cy="796.2" r="0.9" fill="#d8f0f0" stroke="none"/><circle cx="398.8" cy="828" r="2.3" stroke="#6cc4dc"/><circle cx="398.8" cy="828" r="0.9" fill="#d8f0f0" stroke="none"/><circle cx="605.8" cy="817.2" r="2.3" stroke="#6cc4dc"/><circle cx="605.8" cy="817.2" r="0.9" fill="#d8f0f0" stroke="none"/><circle cx="592.7" cy="832.3" r="2.3" stroke="#6cc4dc"/><circle cx="592.7" cy="832.3" r="0.9" fill="#d8f0f0" stroke="none"/><circle cx="600" cy="834.5" r="2.3" stroke="#6cc4dc"/><circle cx="600" cy="834.5" r="0.9" fill="#d8f0f0" stroke="none"/><circle cx="400.2" cy="711.7" r="2.3" stroke="#6cc4dc"/><circle cx="400.2" cy="711.7" r="0.9" fill="#d8f0f0" stroke="none"/><circle cx="398.8" cy="763.7" r="2.3" stroke="#6cc4dc"/><circle cx="398.8" cy="763.7" r="0.9" fill="#d8f0f0" stroke="none"/><circle cx="393.7" cy="770.2" r="2.3" stroke="#6cc4dc"/><circle cx="393.7" cy="770.2" r="0.9" fill="#d8f0f0" stroke="none"/><circle cx="463.8" cy="729.7" r="2.3" stroke="#6cc4dc"/><circle cx="463.8" cy="729.7" r="0.9" fill="#d8f0f0" stroke="none"/><circle cx="531" cy="733.4" r="2.3" stroke="#6cc4dc"/><circle cx="531" cy="733.4" r="0.9" fill="#d8f0f0" stroke="none"/><circle cx="531" cy="745" r="2.3" stroke="#6cc4dc"/><circle cx="531" cy="745" r="0.9" fill="#d8f0f0" stroke="none"/><circle cx="590.6" cy="810" r="2.3" stroke="#6cc4dc"/><circle cx="590.6" cy="810" r="0.9" fill="#d8f0f0" stroke="none"/><circle cx="600.7" cy="810" r="2.3" stroke="#6cc4dc"/><circle cx="600.7" cy="810" r="0.9" fill="#d8f0f0" stroke="none"/><circle cx="590.6" cy="823.7" r="2.3" stroke="#6cc4dc"/><circle cx="590.6" cy="823.7" r="0.9" fill="#d8f0f0" stroke="none"/><circle cx="600.7" cy="823.7" r="2.3" stroke="#6cc4dc"/><circle cx="600.7" cy="823.7" r="0.9" fill="#d8f0f0" stroke="none"/><circle cx="622.4" cy="806.3" r="2.3" stroke="#6cc4dc"/><circle cx="622.4" cy="806.3" r="0.9" fill="#d8f0f0" stroke="none"/><circle cx="634" cy="806.3" r="2.3" stroke="#6cc4dc"/><circle cx="634" cy="806.3" r="0.9" fill="#d8f0f0" stroke="none"/><circle cx="622.4" cy="823.7" r="2.3" stroke="#6cc4dc"/><circle cx="622.4" cy="823.7" r="0.9" fill="#d8f0f0" stroke="none"/><circle cx="634" cy="823.7" r="2.3" stroke="#6cc4dc"/><circle cx="634" cy="823.7" r="0.9" fill="#d8f0f0" stroke="none"/><circle cx="558.8" cy="842.5" r="2.3" stroke="#6cc4dc"/><circle cx="558.8" cy="842.5" r="0.9" fill="#d8f0f0" stroke="none"/><circle cx="571.8" cy="842.5" r="2.3" stroke="#6cc4dc"/><circle cx="571.8" cy="842.5" r="0.9" fill="#d8f0f0" stroke="none"/><circle cx="434.9" cy="768.8" r="2.6" stroke="#6cc4dc"/><circle cx="434.9" cy="768.8" r="0.9" fill="#d8f0f0" stroke="none"/><circle cx="531" cy="724" r="2.6" stroke="#6cc4dc"/><circle cx="531" cy="724" r="0.9" fill="#d8f0f0" stroke="none"/><circle cx="531" cy="755" r="2.6" stroke="#6cc4dc"/><circle cx="531" cy="755" r="0.9" fill="#d8f0f0" stroke="none"/><circle cx="594.2" cy="705.9" r="2.6" stroke="#6cc4dc"/><circle cx="594.2" cy="705.9" r="0.9" fill="#d8f0f0" stroke="none"/><circle cx="563.8" cy="744.9" r="2.6" stroke="#6cc4dc"/><circle cx="563.8" cy="744.9" r="0.9" fill="#d8f0f0" stroke="none"/><circle cx="563.8" cy="756.5" r="2.6" stroke="#6cc4dc"/><circle cx="563.8" cy="756.5" r="0.9" fill="#d8f0f0" stroke="none"/><circle cx="628.9" cy="771.6" r="2.6" stroke="#6cc4dc"/><circle cx="628.9" cy="771.6" r="0.9" fill="#d8f0f0" stroke="none"/><circle cx="590.6" cy="783.2" r="2.6" stroke="#6cc4dc"/><circle cx="590.6" cy="783.2" r="0.9" fill="#d8f0f0" stroke="none"/><circle cx="601.4" cy="783.2" r="2.6" stroke="#6cc4dc"/><circle cx="601.4" cy="783.2" r="0.9" fill="#d8f0f0" stroke="none"/><circle cx="658.5" cy="705.2" r="2.6" stroke="#6cc4dc"/><circle cx="658.5" cy="705.2" r="0.9" fill="#d8f0f0" stroke="none"/><circle cx="658.5" cy="716" r="2.6" stroke="#6cc4dc"/><circle cx="658.5" cy="716" r="0.9" fill="#d8f0f0" stroke="none"/><circle cx="699" cy="725.4" r="2.6" stroke="#6cc4dc"/><circle cx="699" cy="725.4" r="0.9" fill="#d8f0f0" stroke="none"/><circle cx="699" cy="734.8" r="2.6" stroke="#6cc4dc"/><circle cx="699" cy="734.8" r="0.9" fill="#d8f0f0" stroke="none"/><circle cx="699" cy="768.8" r="2.6" stroke="#6cc4dc"/><circle cx="699" cy="768.8" r="0.9" fill="#d8f0f0" stroke="none"/><circle cx="699" cy="781.8" r="2.6" stroke="#6cc4dc"/><circle cx="699" cy="781.8" r="0.9" fill="#d8f0f0" stroke="none"/><circle cx="699" cy="817.9" r="2.6" stroke="#6cc4dc"/><circle cx="699" cy="817.9" r="0.9" fill="#d8f0f0" stroke="none"/><circle cx="699" cy="834.5" r="2.6" stroke="#6cc4dc"/><circle cx="699" cy="834.5" r="0.9" fill="#d8f0f0" stroke="none"/><circle cx="563.8" cy="705.9" r="3.2" stroke="#e08a80"/><circle cx="563.8" cy="705.9" r="1.5" stroke="#e08a80"/><circle cx="563.8" cy="716" r="3.2" stroke="#e08a80"/><circle cx="563.8" cy="716" r="1.5" stroke="#e08a80"/><circle cx="712.7" cy="749.2" r="2.3" stroke="#6cc4dc"/><circle cx="712.7" cy="749.2" r="0.9" fill="#d8f0f0" stroke="none"/><circle cx="712.7" cy="595.6" r="1.9" stroke="#6cc4dc"/><circle cx="726.3" cy="595.6" r="1.9" stroke="#6cc4dc"/><circle cx="739.9" cy="595.6" r="1.9" stroke="#6cc4dc"/><circle cx="753.5" cy="595.6" r="1.9" stroke="#6cc4dc"/><circle cx="767.1" cy="595.6" r="1.9" stroke="#6cc4dc"/><circle cx="780.7" cy="595.6" r="1.9" stroke="#6cc4dc"/><circle cx="795" cy="595.6" r="1.9" stroke="#6cc4dc"/><circle cx="807.9" cy="595.6" r="1.9" stroke="#6cc4dc"/><circle cx="821.5" cy="595.6" r="1.9" stroke="#6cc4dc"/><circle cx="835.8" cy="595.6" r="1.9" stroke="#6cc4dc"/><circle cx="848.9" cy="595.6" r="1.9" stroke="#6cc4dc"/><circle cx="863" cy="595.6" r="1.9" stroke="#6cc4dc"/><circle cx="877" cy="595.6" r="1.9" stroke="#6cc4dc"/><circle cx="890.4" cy="595.6" r="1.9" stroke="#6cc4dc"/><circle cx="903.7" cy="595.6" r="1.9" stroke="#6cc4dc"/><circle cx="917.8" cy="595.6" r="1.9" stroke="#6cc4dc"/><circle cx="705.6" cy="602" r="1.9" stroke="#6cc4dc"/><circle cx="719.8" cy="602" r="1.9" stroke="#6cc4dc"/><circle cx="732.8" cy="602" r="1.9" stroke="#6cc4dc"/><circle cx="747" cy="602" r="1.9" stroke="#6cc4dc"/><circle cx="760.6" cy="602" r="1.9" stroke="#6cc4dc"/><circle cx="774.2" cy="602" r="1.9" stroke="#6cc4dc"/><circle cx="787.8" cy="602" r="1.9" stroke="#6cc4dc"/><circle cx="802.1" cy="602" r="1.9" stroke="#6cc4dc"/><circle cx="815.1" cy="602" r="1.9" stroke="#6cc4dc"/><circle cx="828.7" cy="602" r="1.9" stroke="#6cc4dc"/><circle cx="843" cy="602" r="1.9" stroke="#6cc4dc"/><circle cx="856.3" cy="602" r="1.9" stroke="#6cc4dc"/><circle cx="870.4" cy="602" r="1.9" stroke="#6cc4dc"/><circle cx="883.7" cy="602" r="1.9" stroke="#6cc4dc"/><circle cx="897.1" cy="602" r="1.9" stroke="#6cc4dc"/><circle cx="911.1" cy="602" r="1.9" stroke="#6cc4dc"/><circle cx="726.3" cy="607.9" r="1.9" stroke="#6cc4dc"/><circle cx="725.8" cy="618.2" r="1.9" stroke="#6cc4dc"/><circle cx="739.9" cy="607.9" r="1.9" stroke="#6cc4dc"/><circle cx="738.8" cy="618.2" r="1.9" stroke="#6cc4dc"/><circle cx="753.5" cy="607.9" r="1.9" stroke="#6cc4dc"/><circle cx="753" cy="618.2" r="1.9" stroke="#6cc4dc"/><circle cx="767.1" cy="607.9" r="1.9" stroke="#6cc4dc"/><circle cx="766.6" cy="618.2" r="1.9" stroke="#6cc4dc"/><circle cx="780.7" cy="607.9" r="1.9" stroke="#6cc4dc"/><circle cx="780.2" cy="618.2" r="1.9" stroke="#6cc4dc"/><circle cx="795" cy="607.9" r="1.9" stroke="#6cc4dc"/><circle cx="793.8" cy="618.2" r="1.9" stroke="#6cc4dc"/><circle cx="807.9" cy="607.9" r="1.9" stroke="#6cc4dc"/><circle cx="808.1" cy="618.2" r="1.9" stroke="#6cc4dc"/><circle cx="821.5" cy="607.9" r="1.9" stroke="#6cc4dc"/><circle cx="821.1" cy="618.2" r="1.9" stroke="#6cc4dc"/><circle cx="835.8" cy="607.9" r="1.9" stroke="#6cc4dc"/><circle cx="834.7" cy="618.2" r="1.9" stroke="#6cc4dc"/><circle cx="848.9" cy="607.9" r="1.9" stroke="#6cc4dc"/><circle cx="849" cy="618.2" r="1.9" stroke="#6cc4dc"/><circle cx="958.6" cy="677" r="2.3" stroke="#6cc4dc"/><circle cx="958.6" cy="677" r="0.9" fill="#d8f0f0" stroke="none"/><circle cx="994.6" cy="758.1" r="2.3" stroke="#6cc4dc"/><circle cx="994.6" cy="758.1" r="0.9" fill="#d8f0f0" stroke="none"/><circle cx="957.1" cy="620.8" r="2.3" stroke="#6cc4dc"/><circle cx="957.1" cy="620.8" r="0.9" fill="#d8f0f0" stroke="none"/><circle cx="921.5" cy="604.5" r="2.3" stroke="#6cc4dc"/><circle cx="921.5" cy="604.5" r="0.9" fill="#d8f0f0" stroke="none"/><circle cx="944.5" cy="662.3" r="2.3" stroke="#6cc4dc"/><circle cx="944.5" cy="662.3" r="0.9" fill="#d8f0f0" stroke="none"/><circle cx="889.6" cy="664.5" r="2.3" stroke="#6cc4dc"/><circle cx="889.6" cy="664.5" r="0.9" fill="#d8f0f0" stroke="none"/><circle cx="889.6" cy="654.9" r="2.3" stroke="#6cc4dc"/><circle cx="889.6" cy="654.9" r="0.9" fill="#d8f0f0" stroke="none"/><circle cx="980" cy="663" r="2.3" stroke="#6cc4dc"/><circle cx="980" cy="663" r="0.9" fill="#d8f0f0" stroke="none"/><circle cx="929.7" cy="694.1" r="2.3" stroke="#6cc4dc"/><circle cx="929.7" cy="694.1" r="0.9" fill="#d8f0f0" stroke="none"/><circle cx="871.1" cy="694.1" r="2.3" stroke="#6cc4dc"/><circle cx="871.1" cy="694.1" r="0.9" fill="#d8f0f0" stroke="none"/><circle cx="940" cy="694.1" r="2.3" stroke="#6cc4dc"/><circle cx="940" cy="694.1" r="0.9" fill="#d8f0f0" stroke="none"/><circle cx="880.8" cy="694.1" r="2.3" stroke="#6cc4dc"/><circle cx="880.8" cy="694.1" r="0.9" fill="#d8f0f0" stroke="none"/><circle cx="848.9" cy="608.2" r="2.3" stroke="#6cc4dc"/><circle cx="848.9" cy="608.2" r="0.9" fill="#d8f0f0" stroke="none"/><circle cx="848.9" cy="617.8" r="2.3" stroke="#6cc4dc"/><circle cx="848.9" cy="617.8" r="0.9" fill="#d8f0f0" stroke="none"/><circle cx="989.7" cy="654.1" r="2.3" stroke="#6cc4dc"/><circle cx="989.7" cy="654.1" r="0.9" fill="#d8f0f0" stroke="none"/><circle cx="989.7" cy="662.3" r="2.3" stroke="#6cc4dc"/><circle cx="989.7" cy="662.3" r="0.9" fill="#d8f0f0" stroke="none"/><circle cx="856.3" cy="691.2" r="2.6" stroke="#6cc4dc"/><circle cx="856.3" cy="691.2" r="0.9" fill="#d8f0f0" stroke="none"/><circle cx="906" cy="691.2" r="2.6" stroke="#6cc4dc"/><circle cx="906" cy="691.2" r="0.9" fill="#d8f0f0" stroke="none"/><circle cx="957.1" cy="691.2" r="2.6" stroke="#6cc4dc"/><circle cx="957.1" cy="691.2" r="0.9" fill="#d8f0f0" stroke="none"/><circle cx="980" cy="604.5" r="2.6" stroke="#6cc4dc"/><circle cx="980" cy="604.5" r="0.9" fill="#d8f0f0" stroke="none"/><circle cx="922.3" cy="615.6" r="2.6" stroke="#6cc4dc"/><circle cx="922.3" cy="615.6" r="0.9" fill="#d8f0f0" stroke="none"/><circle cx="731.9" cy="676.5" r="2.6" stroke="#6cc4dc"/><circle cx="731.9" cy="676.5" r="0.9" fill="#d8f0f0" stroke="none"/><circle cx="731.9" cy="691.2" r="2.6" stroke="#6cc4dc"/><circle cx="731.9" cy="691.2" r="0.9" fill="#d8f0f0" stroke="none"/><circle cx="805.8" cy="691.2" r="2.6" stroke="#6cc4dc"/><circle cx="805.8" cy="691.2" r="0.9" fill="#d8f0f0" stroke="none"/><circle cx="740" cy="627" r="2.3" stroke="#6cc4dc"/><circle cx="740" cy="627" r="0.9" fill="#d8f0f0" stroke="none"/><circle cx="753.5" cy="627" r="2.3" stroke="#6cc4dc"/><circle cx="753.5" cy="627" r="0.9" fill="#d8f0f0" stroke="none"/><circle cx="712.7" cy="748.6" r="1.9" stroke="#6cc4dc"/><circle cx="726.2" cy="748.6" r="1.9" stroke="#6cc4dc"/><circle cx="740.2" cy="748.6" r="1.9" stroke="#6cc4dc"/><circle cx="753.6" cy="748.6" r="1.9" stroke="#6cc4dc"/><circle cx="767" cy="748.6" r="1.9" stroke="#6cc4dc"/><circle cx="781" cy="748.6" r="1.9" stroke="#6cc4dc"/><circle cx="795" cy="748.6" r="1.9" stroke="#6cc4dc"/><circle cx="807.8" cy="748.6" r="1.9" stroke="#6cc4dc"/><circle cx="821.8" cy="748.6" r="1.9" stroke="#6cc4dc"/><circle cx="835.8" cy="748.6" r="1.9" stroke="#6cc4dc"/><circle cx="849.2" cy="748.6" r="1.9" stroke="#6cc4dc"/><circle cx="863.2" cy="748.6" r="1.9" stroke="#6cc4dc"/><circle cx="877" cy="748.6" r="1.9" stroke="#6cc4dc"/><circle cx="889.9" cy="748.6" r="1.9" stroke="#6cc4dc"/><circle cx="904" cy="748.6" r="1.9" stroke="#6cc4dc"/><circle cx="705.7" cy="755.6" r="1.9" stroke="#6cc4dc"/><circle cx="719.7" cy="755.6" r="1.9" stroke="#6cc4dc"/><circle cx="732.6" cy="755.6" r="1.9" stroke="#6cc4dc"/><circle cx="746.6" cy="755.6" r="1.9" stroke="#6cc4dc"/><circle cx="760.6" cy="755.6" r="1.9" stroke="#6cc4dc"/><circle cx="774" cy="755.6" r="1.9" stroke="#6cc4dc"/><circle cx="788" cy="755.6" r="1.9" stroke="#6cc4dc"/><circle cx="802" cy="755.6" r="1.9" stroke="#6cc4dc"/><circle cx="814.8" cy="755.6" r="1.9" stroke="#6cc4dc"/><circle cx="828.8" cy="755.6" r="1.9" stroke="#6cc4dc"/><circle cx="842.8" cy="755.6" r="1.9" stroke="#6cc4dc"/><circle cx="855.7" cy="755.6" r="1.9" stroke="#6cc4dc"/><circle cx="869.6" cy="755.6" r="1.9" stroke="#6cc4dc"/><circle cx="883.8" cy="755.6" r="1.9" stroke="#6cc4dc"/><circle cx="896.6" cy="755.6" r="1.9" stroke="#6cc4dc"/><circle cx="712.7" cy="761.4" r="1.9" stroke="#6cc4dc"/><circle cx="712.7" cy="771.9" r="1.9" stroke="#6cc4dc"/><circle cx="726.2" cy="761.4" r="1.9" stroke="#6cc4dc"/><circle cx="726.2" cy="771.9" r="1.9" stroke="#6cc4dc"/><circle cx="740.2" cy="761.4" r="1.9" stroke="#6cc4dc"/><circle cx="740.2" cy="771.9" r="1.9" stroke="#6cc4dc"/><circle cx="753.6" cy="761.4" r="1.9" stroke="#6cc4dc"/><circle cx="753.6" cy="771.9" r="1.9" stroke="#6cc4dc"/><circle cx="767" cy="761.4" r="1.9" stroke="#6cc4dc"/><circle cx="767" cy="771.9" r="1.9" stroke="#6cc4dc"/><circle cx="807.8" cy="761.4" r="1.9" stroke="#6cc4dc"/><circle cx="807.8" cy="771.9" r="1.9" stroke="#6cc4dc"/><circle cx="821.8" cy="761.4" r="1.9" stroke="#6cc4dc"/><circle cx="821.8" cy="771.9" r="1.9" stroke="#6cc4dc"/><circle cx="863.2" cy="761.4" r="1.9" stroke="#6cc4dc"/><circle cx="863.2" cy="771.9" r="1.9" stroke="#6cc4dc"/><circle cx="862.8" cy="762.2" r="2.3" stroke="#6cc4dc"/><circle cx="862.8" cy="762.2" r="0.9" fill="#d8f0f0" stroke="none"/><circle cx="862.8" cy="771.6" r="2.3" stroke="#6cc4dc"/><circle cx="862.8" cy="771.6" r="0.9" fill="#d8f0f0" stroke="none"/><circle cx="993.9" cy="789.9" r="2.3" stroke="#6cc4dc"/><circle cx="993.9" cy="789.9" r="0.9" fill="#d8f0f0" stroke="none"/><circle cx="1010.1" cy="789.9" r="2.3" stroke="#6cc4dc"/><circle cx="1010.1" cy="789.9" r="0.9" fill="#d8f0f0" stroke="none"/><circle cx="839.9" cy="794.1" r="2.3" stroke="#6cc4dc"/><circle cx="839.9" cy="794.1" r="0.9" fill="#d8f0f0" stroke="none"/><circle cx="839.9" cy="804" r="2.3" stroke="#6cc4dc"/><circle cx="839.9" cy="804" r="0.9" fill="#d8f0f0" stroke="none"/><circle cx="767" cy="781.8" r="2.3" stroke="#6cc4dc"/><circle cx="767" cy="781.8" r="0.9" fill="#d8f0f0" stroke="none"/><circle cx="923.6" cy="771.6" r="2.3" stroke="#6cc4dc"/><circle cx="923.6" cy="771.6" r="0.9" fill="#d8f0f0" stroke="none"/><circle cx="933.8" cy="771.6" r="2.3" stroke="#6cc4dc"/><circle cx="933.8" cy="771.6" r="0.9" fill="#d8f0f0" stroke="none"/><circle cx="921.6" cy="800.7" r="2.3" stroke="#6cc4dc"/><circle cx="921.6" cy="800.7" r="0.9" fill="#d8f0f0" stroke="none"/><circle cx="998" cy="827" r="2.3" stroke="#6cc4dc"/><circle cx="998" cy="827" r="0.9" fill="#d8f0f0" stroke="none"/><circle cx="998" cy="836.5" r="2.3" stroke="#6cc4dc"/><circle cx="998" cy="836.5" r="0.9" fill="#d8f0f0" stroke="none"/><circle cx="904.7" cy="719.6" r="2.3" stroke="#6cc4dc"/><circle cx="904.7" cy="719.6" r="0.9" fill="#d8f0f0" stroke="none"/><circle cx="944.6" cy="719.6" r="2.3" stroke="#6cc4dc"/><circle cx="944.6" cy="719.6" r="0.9" fill="#d8f0f0" stroke="none"/><circle cx="799.7" cy="804.6" r="2.6" stroke="#6cc4dc"/><circle cx="799.7" cy="804.6" r="0.9" fill="#d8f0f0" stroke="none"/><circle cx="747.7" cy="825" r="2.6" stroke="#6cc4dc"/><circle cx="747.7" cy="825" r="0.9" fill="#d8f0f0" stroke="none"/><circle cx="698.7" cy="769" r="2.6" stroke="#6cc4dc"/><circle cx="698.7" cy="769" r="0.9" fill="#d8f0f0" stroke="none"/><circle cx="698.7" cy="781.8" r="2.6" stroke="#6cc4dc"/><circle cx="698.7" cy="781.8" r="0.9" fill="#d8f0f0" stroke="none"/><circle cx="698.7" cy="817.4" r="2.6" stroke="#6cc4dc"/><circle cx="698.7" cy="817.4" r="0.9" fill="#d8f0f0" stroke="none"/><circle cx="698.7" cy="834.3" r="2.6" stroke="#6cc4dc"/><circle cx="698.7" cy="834.3" r="0.9" fill="#d8f0f0" stroke="none"/><circle cx="698.7" cy="725.2" r="2.6" stroke="#6cc4dc"/><circle cx="698.7" cy="725.2" r="0.9" fill="#d8f0f0" stroke="none"/><circle cx="698.7" cy="734.6" r="2.6" stroke="#6cc4dc"/><circle cx="698.7" cy="734.6" r="0.9" fill="#d8f0f0" stroke="none"/><circle cx="937.8" cy="754.7" r="2.6" stroke="#6cc4dc"/><circle cx="937.8" cy="754.7" r="0.9" fill="#d8f0f0" stroke="none"/><circle cx="948" cy="754.7" r="2.6" stroke="#6cc4dc"/><circle cx="948" cy="754.7" r="0.9" fill="#d8f0f0" stroke="none"/><circle cx="962.8" cy="768.9" r="2.6" stroke="#6cc4dc"/><circle cx="962.8" cy="768.9" r="0.9" fill="#d8f0f0" stroke="none"/><circle cx="1014.2" cy="773.6" r="2.6" stroke="#6cc4dc"/><circle cx="1014.2" cy="773.6" r="0.9" fill="#d8f0f0" stroke="none"/><circle cx="954.7" cy="841.2" r="2.6" stroke="#6cc4dc"/><circle cx="954.7" cy="841.2" r="0.9" fill="#d8f0f0" stroke="none"/><circle cx="720" cy="840" r="2.6" stroke="#6cc4dc"/><circle cx="720" cy="840" r="0.9" fill="#d8f0f0" stroke="none"/><circle cx="740" cy="843" r="2.6" stroke="#6cc4dc"/><circle cx="740" cy="843" r="0.9" fill="#d8f0f0" stroke="none"/><circle cx="347" cy="667.7" r="2.6" stroke="#6cc4dc"/><circle cx="347" cy="667.7" r="0.9" fill="#d8f0f0" stroke="none"/><circle cx="346.6" cy="726.8" r="2.6" stroke="#6cc4dc"/><circle cx="346.6" cy="726.8" r="0.9" fill="#d8f0f0" stroke="none"/><circle cx="345.5" cy="781.2" r="2.6" stroke="#6cc4dc"/><circle cx="345.5" cy="781.2" r="0.9" fill="#d8f0f0" stroke="none"/><circle cx="344.5" cy="830.8" r="2.6" stroke="#6cc4dc"/><circle cx="344.5" cy="830.8" r="0.9" fill="#d8f0f0" stroke="none"/><circle cx="349" cy="612" r="2.6" stroke="#6cc4dc"/><circle cx="349" cy="612" r="0.9" fill="#d8f0f0" stroke="none"/><circle cx="352" cy="560" r="2.6" stroke="#6cc4dc"/><circle cx="352" cy="560" r="0.9" fill="#d8f0f0" stroke="none"/><circle cx="647" cy="537" r="2.2" stroke="#f0e88a"/><circle cx="655" cy="537" r="2.2" stroke="#f0e88a"/><circle cx="647" cy="697.2" r="2.2" stroke="#f0e88a"/><circle cx="654.9" cy="697.2" r="2.2" stroke="#f0e88a"/><circle cx="923.8" cy="581.7" r="2.2" stroke="#f0e88a"/><circle cx="932" cy="581.7" r="2.2" stroke="#f0e88a"/><circle cx="923.8" cy="737.8" r="2.2" stroke="#f0e88a"/><circle cx="932.2" cy="737.8" r="2.2" stroke="#f0e88a"/></g>
<g fill="none" stroke="#8a8a8a" stroke-width="1"><rect x="736" y="356.3" width="30.9" height="14.2"/><rect x="736" y="378.7" width="30.9" height="13.7"/><rect x="529.6" y="704.5" width="30.4" height="13.7"/><rect x="666.4" y="704.5" width="28.9" height="13.7"/></g>
<path d="M503.7,333 L640,333 Q645.6,333 645.6,339 L645.6,383 L714.7,383 L714.7,339 Q714.7,333 720,333 L856,333 L974.3,451.2 A163,163 0 0 1 1022,566.5 L1028,846 M331.6,846 L339,565.2 A163,163 0 0 1 386.7,449.9 L503.7,333" fill="none" stroke="#4a9ec0" stroke-width="1.2" shape-rendering="auto"/>
<rect x="285" y="395" width="1363" height="1" fill="#ffffff"/>
<rect x="967" y="112" width="1" height="734" fill="#ffffff"/>
<rect x="937" y="395" width="59" height="1" fill="#e8e060"/><rect x="967" y="366" width="1" height="60" fill="#e8e060"/>
</svg>
<!-- taskbar -->
<div class="a" style="left:0;top:1040px;width:1920px;height:40px;background:#1c2837"></div>
<svg class="a" style="left:16px;top:1052px" width="17" height="17" viewBox="0 0 17 17"><path d="M0 2.3 L7 1.3 V8 H0 Z M8 1.2 L17 0 V8 H8 Z M0 9 H7 V15.7 L0 14.7 Z M8 9 H17 V17 L8 15.8 Z" fill="#fff"/></svg>
<div class="a" style="left:48px;top:1040px;width:288px;height:40px;background:#f0f0f0;border-top:1px solid #c8c8c8"></div>
<svg class="a" style="left:59px;top:1051px" width="18" height="18" viewBox="0 0 18 18"><circle cx="10.5" cy="7.5" r="5.5" fill="none" stroke="#222" stroke-width="1.3"/><path d="M6.5 11.5 L1 17" stroke="#222" stroke-width="1.5"/></svg>
<div class="t" style="left:88px;top:1052px;font-size:14px;color:#333">搜索</div>
<svg class="a" style="left:262px;top:1040px" width="74" height="40" viewBox="0 0 74 40">
<path d="M0 40 Q20 30 40 34 L74 36 V40 Z" fill="#9ec8e8"/>
<rect x="26" y="22" width="6" height="16" fill="#6aa0d0"/><rect x="33" y="14" width="6" height="24" fill="#e8b878"/><rect x="40" y="18" width="5" height="20" fill="#c88a58"/>
<rect x="46" y="10" width="6" height="28" fill="#f0d0a0"/><rect x="53" y="6" width="5" height="32" fill="#d8a070"/><rect x="59" y="16" width="6" height="22" fill="#7ab0e0"/><rect x="66" y="12" width="7" height="26" fill="#e0c090"/>
<path d="M0 40 Q30 28 74 38 V40Z" fill="#3a7ab8" opacity="0.6"/></svg>
<div class="a" style="left:340px;top:1078px;width:46px;height:2px;background:#8ac0f0"></div>
<svg class="a" style="left:351px;top:1048px" width="24" height="24" viewBox="0 0 24 24"><rect x="1" y="1" width="22" height="22" rx="4" fill="#1a8ae0"/><circle cx="12" cy="12" r="8" fill="none" stroke="#fff" stroke-width="1.8"/><path d="M9.5 7 V17 M15 7 L10 12 L15 17" stroke="#fff" stroke-width="2" fill="none"/></svg>
<svg class="a" style="left:399px;top:1048px" width="24" height="24" viewBox="0 0 24 24"><path d="M3 14 Q2 4 12 3 Q21 3 21 10 Q21 14 16 13 Q13 13 14 17 Q14 21 9 21 Q4 20 3 14Z" fill="#d8dce8"/><circle cx="8" cy="9" r="2" fill="#e04040"/><circle cx="13" cy="7" r="2" fill="#40a0e0"/><circle cx="17" cy="9" r="1.8" fill="#f0c030"/><path d="M12 20 L21 4" stroke="#c89050" stroke-width="2.4"/></svg>
<svg class="a" style="left:448px;top:1048px" width="24" height="24" viewBox="0 0 24 24"><path d="M12 2 A10 10 0 1 0 22 13 H8 A5 5 0 0 1 18 9 A10 10 0 0 0 12 2Z" fill="#1a9ae8"/><path d="M4 17 Q7 22 14 22 Q19 21 22 16 Q16 20 11 18Z" fill="#3ac870"/></svg>
<div class="a" style="left:486px;top:1078px;width:46px;height:2px;background:#8ac0f0"></div>
<svg class="a" style="left:497px;top:1048px" width="24" height="24" viewBox="0 0 24 24"><path d="M2 5 H9 L11 7 H22 V20 H2 Z" fill="#f8c840"/><rect x="2" y="9" width="20" height="11" fill="#fcd860"/><rect x="7" y="14" width="10" height="6" fill="#2a7ad8"/></svg>
<svg class="a" style="left:546px;top:1048px" width="24" height="24" viewBox="0 0 24 24"><rect x="2" y="6" width="20" height="17" rx="2" fill="#f8f8f8"/><path d="M8 6 Q8 2 12 2 Q16 2 16 6" stroke="#ddd" stroke-width="1.5" fill="none"/><rect x="7" y="10" width="4.5" height="4.5" fill="#f25022"/><rect x="12.5" y="10" width="4.5" height="4.5" fill="#7fba00"/><rect x="7" y="15.5" width="4.5" height="4.5" fill="#00a4ef"/><rect x="12.5" y="15.5" width="4.5" height="4.5" fill="#ffb900"/></svg>
<svg class="a" style="left:595px;top:1048px" width="24" height="24" viewBox="0 0 24 24"><rect x="1" y="5" width="22" height="15" fill="#1a8ae0"/><path d="M1 5 L12 14 L23 5" stroke="#fff" stroke-width="1.5" fill="#4ab0f8"/></svg>
<svg class="a" style="left:644px;top:1048px" width="24" height="24" viewBox="0 0 24 24"><rect x="4" y="1" width="16" height="22" rx="1.5" fill="#5a6a7a"/><rect x="6" y="3" width="12" height="5" fill="#a8d0e8"/><path d="M6 10 H9 V13 H6Z M10.5 10 H13.5 V13 H10.5Z M15 10 H18 V13 H15Z M6 14.5 H9 V17.5 H6Z M10.5 14.5 H13.5 V17.5 H10.5Z M15 14.5 H18 V17.5 H15Z M6 19 H9 V21.5 H6Z M10.5 19 H13.5 V21.5 H10.5Z M15 19 H18 V21.5 H15Z" fill="#dde"/></svg>
<svg class="a" style="left:693px;top:1048px" width="24" height="24" viewBox="0 0 24 24"><rect x="1" y="1" width="22" height="22" rx="4" fill="#e82a2a"/><circle cx="12" cy="12" r="6.5" fill="#fff"/><circle cx="12" cy="12" r="3" fill="#e82a2a"/></svg>
<svg class="a" style="left:743px;top:1048px" width="24" height="24" viewBox="0 0 24 24"><circle cx="14" cy="9" r="6.5" fill="none" stroke="#f08a20" stroke-width="3"/><path d="M9 14 L2 21" stroke="#f08a20" stroke-width="3.5" stroke-linecap="round"/></svg>
<div class="a" style="left:780px;top:1078px;width:46px;height:2px;background:#8ac0f0"></div>
<svg class="a" style="left:791px;top:1048px" width="24" height="24" viewBox="0 0 24 24"><ellipse cx="10" cy="10" rx="8.5" ry="7" fill="#2ac840"/><ellipse cx="16" cy="15" rx="7" ry="6" fill="#f0f0f0" stroke="#2ac840"/><circle cx="7" cy="8" r="1.2" fill="#135"/><circle cx="12" cy="8" r="1.2" fill="#135"/></svg>
<svg class="a" style="left:840px;top:1048px" width="24" height="24" viewBox="0 0 24 24"><rect x="2" y="2" width="20" height="20" rx="1.5" fill="#4a70c8"/><rect x="5" y="2" width="13" height="8" fill="#f0f0f0"/><rect x="6" y="14" width="12" height="8" fill="#e84a6a"/><rect x="14" y="3" width="3" height="5" fill="#4a70c8"/></svg>
<svg class="a" style="left:889px;top:1048px" width="24" height="24" viewBox="0 0 24 24"><rect x="2" y="3" width="20" height="18" fill="#2a60c0"/><rect x="4" y="5" width="16" height="14" fill="#8ab8f0"/><path d="M6 9 H18 M6 12 H18 M6 15 H14" stroke="#fff" stroke-width="1.2"/></svg>
<svg class="a" style="left:938px;top:1048px" width="24" height="24" viewBox="0 0 24 24"><path d="M4 4 Q12 4 14 9 Q16 13 21 12 M4 9.5 Q10 9 13 13 Q16 17 21 17 M4 15 Q12 15 21 21 M4 20.5 Q12 20 21 7" stroke="#22c82a" stroke-width="1.8" fill="none"/><circle cx="4" cy="4" r="2.6" fill="#2ee838"/><circle cx="4" cy="9.5" r="2.6" fill="#2ee838"/><circle cx="4" cy="15" r="2.6" fill="#2ee838"/><circle cx="4" cy="20.5" r="2.6" fill="#2ee838"/><circle cx="21" cy="12" r="2.2" fill="#2ee838"/><circle cx="21" cy="17" r="2.2" fill="#2ee838"/><circle cx="21" cy="21" r="2.2" fill="#2ee838"/><path d="M3 19 L12 12 L14 15 L22 6 M9 13 L17 11" stroke="#ee1c1c" stroke-width="3" fill="none" stroke-linejoin="round"/></svg>
<div class="a" style="left:977px;top:1040px;width:46px;height:40px;background:#4a5866"></div>
<div class="a" style="left:977px;top:1078px;width:46px;height:2px;background:#8ac0f0"></div>
<svg class="a" style="left:988px;top:1048px" width="24" height="24" viewBox="0 0 24 24"><path d="M4 4 Q12 4 14 9 Q16 13 21 12 M4 9.5 Q10 9 13 13 Q16 17 21 17 M4 15 Q12 15 21 21 M4 20.5 Q12 20 21 7" stroke="#22c82a" stroke-width="1.8" fill="none"/><circle cx="4" cy="4" r="2.6" fill="#2ee838"/><circle cx="4" cy="9.5" r="2.6" fill="#2ee838"/><circle cx="4" cy="15" r="2.6" fill="#2ee838"/><circle cx="4" cy="20.5" r="2.6" fill="#2ee838"/><circle cx="21" cy="12" r="2.2" fill="#2ee838"/><circle cx="21" cy="17" r="2.2" fill="#2ee838"/><circle cx="21" cy="21" r="2.2" fill="#2ee838"/><path d="M3 19 L12 12 L14 15 L22 6 M9 13 L17 11" stroke="#ee1c1c" stroke-width="3" fill="none" stroke-linejoin="round"/></svg>
<svg class="a" style="left:1037px;top:1048px" width="24" height="24" viewBox="0 0 24 24"><rect x="1.5" y="1.5" width="21" height="21" rx="2.5" fill="#1a2a3a" stroke="#d02840" stroke-width="1.5"/><path d="M6.5 17.5 L17.5 6.5" stroke="#e02848" stroke-width="1.6"/><circle cx="7" cy="7" r="3.2" fill="#fff"/><circle cx="17" cy="17" r="3.2" fill="#fff"/><circle cx="17" cy="7" r="2.6" fill="#1a2a3a" stroke="#fff" stroke-width="1.6"/><circle cx="7" cy="17" r="2.6" fill="#1a2a3a" stroke="#fff" stroke-width="1.6"/></svg>
<div class="a" style="left:1074px;top:1078px;width:46px;height:2px;background:#8ac0f0"></div>
<svg class="a" style="left:1085px;top:1048px" width="24" height="24" viewBox="0 0 24 24"><rect x="1" y="1" width="22" height="22" rx="4" fill="#fff"/><ellipse cx="12" cy="13" rx="6.5" ry="8.5" fill="#111"/><ellipse cx="12" cy="15.5" rx="4.5" ry="5.5" fill="#fff"/><path d="M6 12 Q12 15 18 12 L18 14 Q12 17 6 14Z" fill="#e02020"/><path d="M9 6.5 H15 L12 9Z" fill="#f0b020"/><path d="M7 21 H11 M13 21 H17" stroke="#f0b020" stroke-width="2"/></svg>
<div class="a" style="left:1123px;top:1078px;width:46px;height:2px;background:#8ac0f0"></div>
<svg class="a" style="left:1134px;top:1048px" width="24" height="24" viewBox="0 0 24 24"><rect x="2" y="1" width="20" height="22" fill="#f4f4f4"/><path d="M5 19 Q10 8 12 4 Q14 10 19 17 Q12 14 5 19Z" fill="none" stroke="#e02020" stroke-width="1.6"/></svg>
<div class="a" style="left:1172px;top:1078px;width:46px;height:2px;background:#8ac0f0"></div>
<svg class="a" style="left:1183px;top:1048px" width="24" height="24" viewBox="0 0 24 24"><rect x="8" y="2" width="15" height="20" rx="1" fill="#21a366"/><rect x="8" y="8" width="15" height="7" fill="#107c41"/><rect x="1" y="5" width="12" height="14" rx="1" fill="#185c37"/><path d="M4 8 L10 16 M10 8 L4 16" stroke="#fff" stroke-width="1.8"/></svg>
<div class="a" style="left:1221px;top:1078px;width:46px;height:2px;background:#8ac0f0"></div>
<svg class="a" style="left:1232px;top:1048px" width="24" height="24" viewBox="0 0 24 24"><circle cx="12" cy="12" r="10.5" fill="#f0c020" stroke="#a07010"/><text x="5" y="17" font-size="12" font-weight="bold" font-style="italic" fill="#333" font-family="Liberation Sans">UE</text></svg>
<div class="a" style="left:1270px;top:1078px;width:46px;height:2px;background:#8ac0f0"></div>
<svg class="a" style="left:1281px;top:1048px" width="24" height="24" viewBox="0 0 24 24"><circle cx="12" cy="12" r="10.5" fill="#fff"/><circle cx="12" cy="12" r="8.5" fill="#111"/><circle cx="12" cy="12" r="5.5" fill="#e81818"/></svg>
<svg class="a" style="left:1480px;top:1048px" width="24" height="24" viewBox="0 0 24 24"><rect x="4" y="1" width="6" height="16" rx="3" fill="#a8c8f0"/><circle cx="7" cy="18" r="5" fill="#8ab8f0"/><rect x="6" y="7" width="2" height="11" fill="#e04040"/><path d="M16 4 V18 M13 15 L16 18 L19 15 M13 22 H20" stroke="#4a9ae8" stroke-width="1.6" fill="none"/></svg>
<div class="t" style="left:1512px;top:1052px;font-size:14px;color:#fff">接近历史记录</div>
<svg class="a" style="left:1621px;top:1054px" width="14" height="10" viewBox="0 0 14 10"><path d="M1 8 L7 2 L13 8" stroke="#fff" stroke-width="1.3" fill="none"/></svg>
<svg class="a" style="left:1644px;top:1050px" width="14" height="20" viewBox="0 0 14 20"><rect x="4" y="1" width="6" height="11" rx="3" fill="#fff"/><path d="M2 9 Q2 15 7 15 Q12 15 12 9 M7 15 V19 M4 19 H10" stroke="#fff" stroke-width="1.3" fill="none"/></svg>
<svg class="a" style="left:1666px;top:1053px" width="20" height="14" viewBox="0 0 20 14"><rect x="1" y="3" width="15" height="9" fill="none" stroke="#fff" stroke-width="1.3"/><rect x="3" y="5" width="7" height="5" fill="#fff"/><rect x="16" y="6" width="2" height="3" fill="#fff"/></svg>
<svg class="a" style="left:1692px;top:1051px" width="18" height="18" viewBox="0 0 18 18"><path d="M2 15 A13 13 0 0 1 15 2 M5 15 A10 10 0 0 1 15 5 M8 15 A7 7 0 0 1 15 8" stroke="#aaa" stroke-width="1.2" fill="none"/><circle cx="14" cy="14" r="2.5" fill="#fff"/></svg>
<svg class="a" style="left:1713px;top:1051px" width="20" height="18" viewBox="0 0 20 18"><path d="M2 6 H5 L10 2 V16 L5 12 H2 Z" fill="none" stroke="#fff" stroke-width="1.2"/><path d="M13 6 Q15 9 13 12 M15 4 Q19 9 15 14" stroke="#fff" stroke-width="1.2" fill="none"/></svg>
<div class="t" style="left:1740px;top:1052px;font-size:14px;color:#fff">英</div>
<svg class="a" style="left:1765px;top:1050px" width="22" height="20" viewBox="0 0 22 20"><path d="M3 3 L19 1 L21 17 L4 19 Z" fill="#f05a20"/><text x="6" y="15.5" font-size="14" font-weight="bold" fill="#fff" font-family="Liberation Sans">S</text></svg>
<div class="t" style="left:1813px;top:1044px;font-size:13px;color:#fff">20:36</div>
<div class="t" style="left:1801px;top:1062px;font-size:13px;color:#fff">2024/2/25</div>
<svg class="a" style="left:1878px;top:1050px" width="20" height="20" viewBox="0 0 20 20"><path d="M1.5 2.5 H18.5 V15 H11 L7 18.5 V15 H1.5 Z" fill="none" stroke="#fff" stroke-width="1.2"/></svg>
<div class="a" style="left:1917px;top:1040px;width:1px;height:40px;background:#5a6a7a"></div>
<div class="a" style="left:1686px;top:1011px;width:196px;height:25px;background:#fbfbfb;border:1px solid #e4e4e4"></div>
<svg class="a" style="left:1656px;top:1006px" width="34" height="32" viewBox="0 0 34 32"><path d="M3 9 L25 2 L31 24 L9 31 Z" fill="#f05a24"/><path d="M22 9 Q16 6 11 10 Q8 14 14 16 Q21 17 19 22 Q15 26 9 22" stroke="#fff" stroke-width="3.2" fill="none" stroke-linecap="round"/></svg>
<div class="t" style="left:1694px;top:1016px;font-size:15px;color:#1f5fc8;font-weight:bold">英</div>
<svg class="a" style="left:1717px;top:1015px" width="18" height="18" viewBox="0 0 18 18"><circle cx="4" cy="8" r="2" fill="#1f5fc8"/><path d="M12 7 Q13 11 10 14" stroke="#1f5fc8" stroke-width="2.4" fill="none" stroke-linecap="round"/></svg>
<svg class="a" style="left:1741px;top:1015px" width="18" height="18" viewBox="0 0 18 18"><rect x="5" y="1" width="7" height="11" rx="3.5" fill="#1f5fc8"/><path d="M2.5 8 Q2.5 14 8.5 14 Q14.5 14 14.5 8 M8.5 14 V17" stroke="#1f5fc8" stroke-width="1.6" fill="none"/></svg>
<svg class="a" style="left:1765px;top:1015px" width="18" height="18" viewBox="0 0 18 18"><rect x="1" y="3" width="16" height="12" rx="1.5" fill="none" stroke="#1f5fc8" stroke-width="1.8"/><path d="M4 7 H14 M4 10 H14 M6 13 H12" stroke="#1f5fc8" stroke-width="1.3" stroke-dasharray="1.6 1"/></svg>
<svg class="a" style="left:1790px;top:1015px" width="18" height="18" viewBox="0 0 18 18"><path d="M1 5 L6 2 Q9 5 12 2 L17 5 L15 9 L14 8 V17 H4 V8 L3 9 Z" fill="#9a6ae8"/><path d="M4 12 H14 V17 H4Z" fill="#e86aa8" opacity="0.6"/><circle cx="16" cy="2.5" r="2.5" fill="#f05a40"/></svg>
<svg class="a" style="left:1814px;top:1015px" width="18" height="18" viewBox="0 0 18 18"><path d="M2 6 Q2 3 6 3 H12 Q16 3 16 6 L17 14 Q17 16 14 15 L12 12 H6 L4 15 Q1 16 1 14 Z" fill="#1f5fc8"/><path d="M5 6.5 V10 M3.3 8.3 H6.7" stroke="#fff" stroke-width="1.3"/><circle cx="12.5" cy="8" r="1.3" fill="#fff"/></svg>
<svg class="a" style="left:1838px;top:1015px" width="18" height="18" viewBox="0 0 18 18"><rect x="1" y="1" width="7" height="7" rx="2" fill="#1f5fc8"/><rect x="10" y="1" width="7" height="7" rx="2" fill="#1f5fc8"/><rect x="1" y="10" width="7" height="7" rx="2" fill="#1f5fc8"/><rect x="10" y="10" width="7" height="7" rx="2" fill="#1f5fc8"/></svg>
<svg class="a" style="left:1861px;top:1015px" width="18" height="18" viewBox="0 0 18 18"><path d="M9 1 L11 4 L15 3 L14.5 7 L17.5 9 L14.5 11 L15 15 L11 14 L9 17 L7 14 L3 15 L3.5 11 L0.5 9 L3.5 7 L3 3 L7 4 Z" fill="#1f5fc8"/><circle cx="9" cy="9" r="2.6" fill="#fff"/><path d="M9 9 V15" stroke="#1f5fc8" stroke-width="1.5"/></svg>
</body></html>
